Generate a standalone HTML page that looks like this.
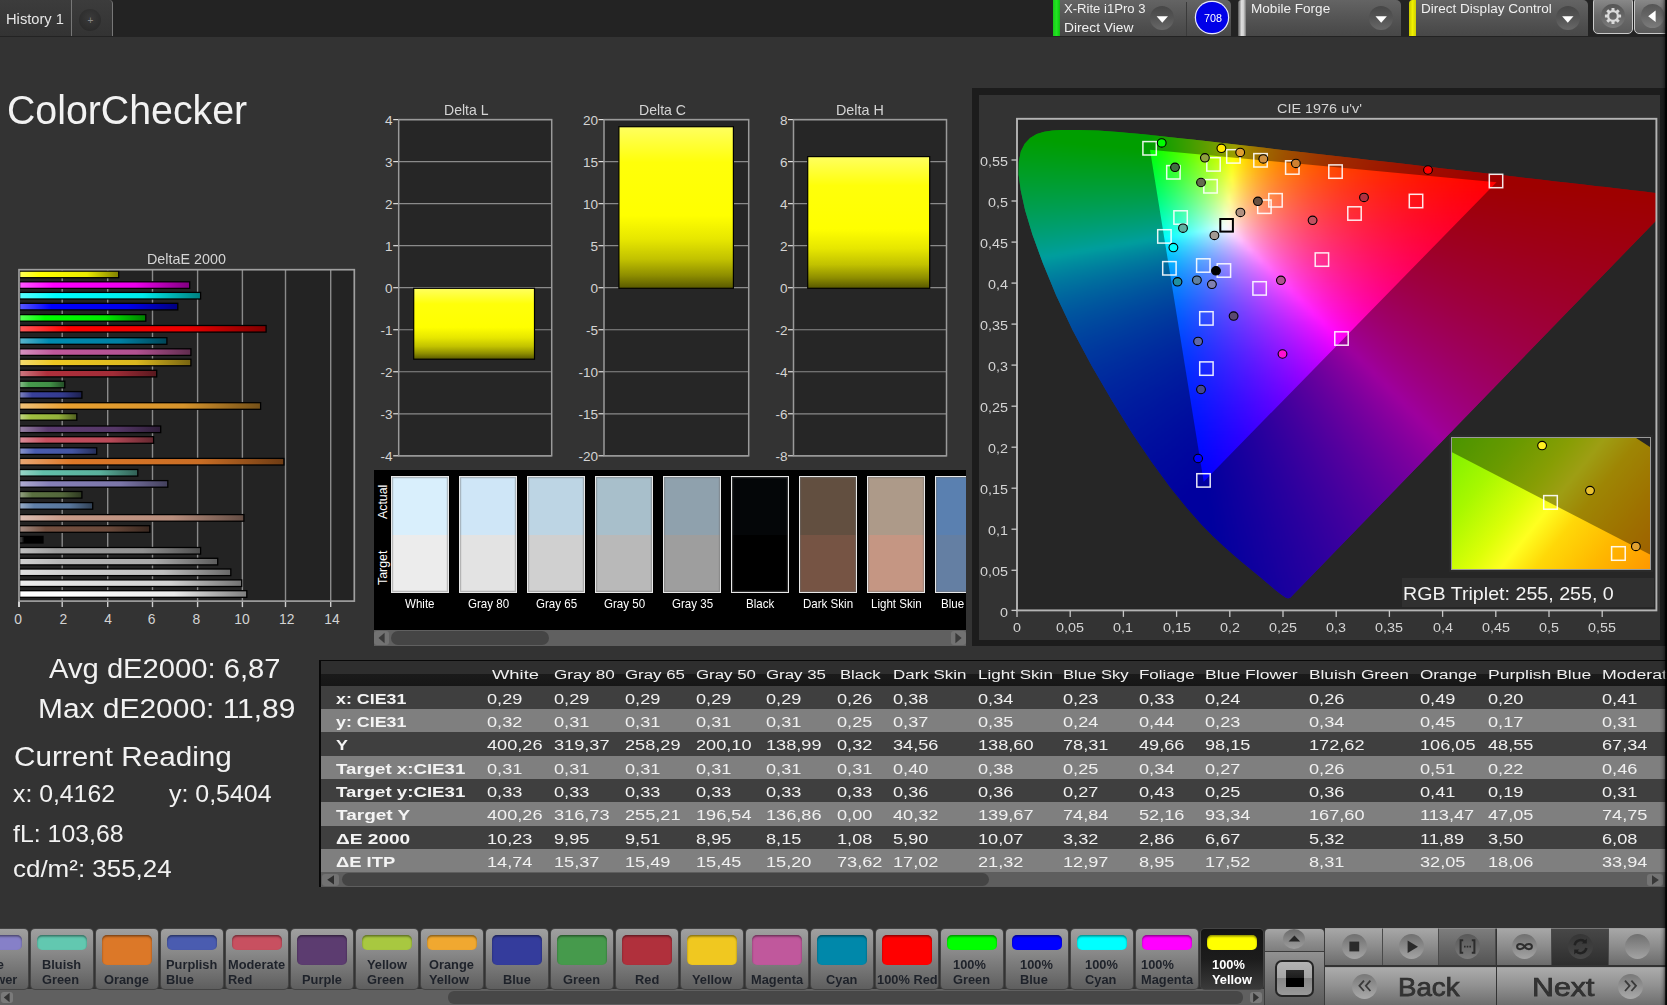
<!DOCTYPE html><html><head><meta charset="utf-8"><title>ColorChecker</title><style>
html,body{margin:0;padding:0;}
body{width:1667px;height:1005px;overflow:hidden;background:#333;position:relative;font-family:"Liberation Sans",sans-serif;}
.t{position:absolute;white-space:nowrap;line-height:1;transform-origin:0 50%;}
.a{position:absolute;}
svg{position:absolute;left:0;top:0;overflow:visible;}
#cg i{position:absolute;height:3px;display:block;}</style></head><body><div class="a" style="left:0.00px;top:0.00px;width:1667.00px;height:37.00px;background:#232323;"></div><div class="a" style="left:0.00px;top:0.00px;width:71.00px;height:36.00px;background:linear-gradient(#3c3c3c,#333);border-right:1px solid #777;border-radius:0 0 0 0;"></div><div class="a" style="left:72.00px;top:0.00px;width:40.00px;height:36.00px;background:linear-gradient(#3c3c3c,#333);border-right:1px solid #777;border-radius:0 4px 0 0;"></div><div class="a" style="left:79.00px;top:9.00px;width:22.00px;height:22.00px;background:radial-gradient(circle at 50% 40%,#3a3a3a,#262626);border-radius:50%;"></div><span class="t" style="left:87.38px;top:15px;font-size:10.00px;line-height:11px;color:#8a8a8a;">+</span><span class="t" style="left:6.00px;top:11px;font-size:14.57px;line-height:16px;color:#e6e6e6;transform:scaleX(1.0090);">History 1</span><div class="a" style="left:1053.00px;top:0.00px;width:178.00px;height:35.50px;background:linear-gradient(#646464,#565656 45%,#4c4c4c 80%,#484848);border-radius:0 5px 0 0;"></div><div class="a" style="left:1053.00px;top:0.00px;width:7.20px;height:35.50px;background:linear-gradient(90deg,#19c819,#22e622 50%,#11c011);"></div><div class="a" style="left:1186.00px;top:2.00px;width:1.20px;height:33.50px;background:#3a3a3a;"></div><span class="t" style="left:1064.00px;top:2px;font-size:12.14px;line-height:14px;color:#f0f0f0;transform:scaleX(1.0795);">X-Rite i1Pro 3</span><span class="t" style="left:1064.00px;top:21px;font-size:12.29px;line-height:14px;color:#f0f0f0;transform:scaleX(1.1224);">Direct View</span><div class="a" style="left:1150.30px;top:5.70px;width:24.00px;height:24.00px;background:linear-gradient(#474747,#545454 50%,#686868);border-radius:50%;"></div><svg width="1667" height="40"><path d="M1156.6 16.3 h11.4 l-5.7 6.4z" fill="#fff"/></svg><div class="a" style="left:1196.40px;top:1.90px;width:31.60px;height:31.60px;background:#0000e8;border-radius:50%;box-shadow:0 0 0 1.2px #e8e8ff;"></div><span class="t" style="left:1203.60px;top:12px;font-size:11.14px;line-height:12px;color:#fff;transform:scaleX(0.9673);">708</span><div class="a" style="left:1237.70px;top:0.00px;width:163.10px;height:35.50px;background:linear-gradient(#646464,#565656 45%,#4c4c4c 80%,#484848);border-radius:4px 5px 0 0;"></div><div class="a" style="left:1237.70px;top:0.00px;width:8.70px;height:35.50px;background:linear-gradient(90deg,#555,#e0e0e0 45%,#cfcfcf 70%,#777);border-radius:4px 0 0 0;"></div><span class="t" style="left:1250.60px;top:2px;font-size:12.14px;line-height:14px;color:#f0f0f0;transform:scaleX(1.1192);">Mobile Forge</span><div class="a" style="left:1369.20px;top:5.70px;width:24.00px;height:24.00px;background:linear-gradient(#474747,#545454 50%,#686868);border-radius:50%;"></div><svg width="1667" height="40"><path d="M1375.5 16.3 h11.4 l-5.7 6.4z" fill="#fff"/></svg><div class="a" style="left:1409.40px;top:0.00px;width:178.60px;height:35.50px;background:linear-gradient(#646464,#565656 45%,#4c4c4c 80%,#484848);border-radius:4px 5px 0 0;"></div><div class="a" style="left:1409.40px;top:0.00px;width:6.70px;height:35.50px;background:linear-gradient(90deg,#c8c800,#f0f000 50%,#d0d000);border-radius:4px 0 0 0;"></div><span class="t" style="left:1420.50px;top:2px;font-size:12.14px;line-height:14px;color:#f0f0f0;transform:scaleX(1.1156);">Direct Display Control</span><div class="a" style="left:1555.80px;top:5.70px;width:24.00px;height:24.00px;background:linear-gradient(#474747,#545454 50%,#686868);border-radius:50%;"></div><svg width="1667" height="40"><path d="M1562.1 16.3 h11.4 l-5.7 6.4z" fill="#fff"/></svg><div class="a" style="left:1592.70px;top:-3.00px;width:40.70px;height:36.50px;background:linear-gradient(#8c8c8c,#6a6a6a 50%,#5a5a5a);border:1.2px solid #cacaca;border-radius:5px;box-sizing:border-box;"></div><div class="a" style="left:1634.40px;top:-3.00px;width:40.60px;height:36.50px;background:linear-gradient(#8c8c8c,#6a6a6a 50%,#5a5a5a);border:1.2px solid #cacaca;border-radius:5px;box-sizing:border-box;"></div><div class="a" style="left:1601.20px;top:4.20px;width:23.60px;height:23.60px;background:linear-gradient(#555,#666 50%,#7c7c7c);border-radius:50%;"></div><div class="a" style="left:1640.50px;top:4.20px;width:23.60px;height:23.60px;background:linear-gradient(#555,#666 50%,#7c7c7c);border-radius:50%;"></div><svg width="1667" height="40"><g transform="translate(1613.0 16.0)"><rect x="-1.5" y="-8.1" width="3" height="3" rx=".5" transform="rotate(0)" fill="#dadada"/><rect x="-1.5" y="-8.1" width="3" height="3" rx=".5" transform="rotate(45)" fill="#dadada"/><rect x="-1.5" y="-8.1" width="3" height="3" rx=".5" transform="rotate(90)" fill="#dadada"/><rect x="-1.5" y="-8.1" width="3" height="3" rx=".5" transform="rotate(135)" fill="#dadada"/><rect x="-1.5" y="-8.1" width="3" height="3" rx=".5" transform="rotate(180)" fill="#dadada"/><rect x="-1.5" y="-8.1" width="3" height="3" rx=".5" transform="rotate(225)" fill="#dadada"/><rect x="-1.5" y="-8.1" width="3" height="3" rx=".5" transform="rotate(270)" fill="#dadada"/><rect x="-1.5" y="-8.1" width="3" height="3" rx=".5" transform="rotate(315)" fill="#dadada"/><circle r="4.9" fill="none" stroke="#dadada" stroke-width="2.3"/></g><path d="M1648.2 16.2 L1655.6 10.4 V22 Z" fill="#fff"/></svg>
<span class="t" style="left:6.80px;top:87px;font-size:40.43px;line-height:46px;color:#f2f2f2;transform:scaleX(0.9716);">ColorChecker</span>
<svg width="1667" height="1005"><rect x="19.0" y="269.7" width="335.3" height="331.4" fill="#232323"/><path d="M62.2 269.7 V601.1" stroke="#8a8a8a" stroke-width="1.4"/><path d="M62.2 601.1 V607.1" stroke="#d0d0d0" stroke-width="1.4"/><path d="M107.7 269.7 V601.1" stroke="#8a8a8a" stroke-width="1.4"/><path d="M107.7 601.1 V607.1" stroke="#d0d0d0" stroke-width="1.4"/><path d="M152.5 269.7 V601.1" stroke="#8a8a8a" stroke-width="1.4"/><path d="M152.5 601.1 V607.1" stroke="#d0d0d0" stroke-width="1.4"/><path d="M197.6 269.7 V601.1" stroke="#8a8a8a" stroke-width="1.4"/><path d="M197.6 601.1 V607.1" stroke="#d0d0d0" stroke-width="1.4"/><path d="M242.4 269.7 V601.1" stroke="#8a8a8a" stroke-width="1.4"/><path d="M242.4 601.1 V607.1" stroke="#d0d0d0" stroke-width="1.4"/><path d="M285.5 269.7 V601.1" stroke="#8a8a8a" stroke-width="1.4"/><path d="M285.5 601.1 V607.1" stroke="#d0d0d0" stroke-width="1.4"/><path d="M330.7 269.7 V601.1" stroke="#8a8a8a" stroke-width="1.4"/><path d="M330.7 601.1 V607.1" stroke="#d0d0d0" stroke-width="1.4"/><path d="M19.0 601.1 V607.1" stroke="#dcdcdc" stroke-width="1.9"/><defs><linearGradient id="b0"><stop offset="0" stop-color="#ffff59"/><stop offset=".2" stop-color="#ffff00"/><stop offset=".68" stop-color="#ebeb00"/><stop offset="1" stop-color="#808000"/></linearGradient><linearGradient id="b1"><stop offset="0" stop-color="#ff59ff"/><stop offset=".2" stop-color="#ff00ff"/><stop offset=".68" stop-color="#eb00eb"/><stop offset="1" stop-color="#800080"/></linearGradient><linearGradient id="b2"><stop offset="0" stop-color="#59ffff"/><stop offset=".2" stop-color="#00ffff"/><stop offset=".68" stop-color="#00ebeb"/><stop offset="1" stop-color="#008080"/></linearGradient><linearGradient id="b3"><stop offset="0" stop-color="#5959ff"/><stop offset=".2" stop-color="#0000ff"/><stop offset=".68" stop-color="#0000eb"/><stop offset="1" stop-color="#000080"/></linearGradient><linearGradient id="b4"><stop offset="0" stop-color="#59ff59"/><stop offset=".2" stop-color="#00ff00"/><stop offset=".68" stop-color="#00eb00"/><stop offset="1" stop-color="#008000"/></linearGradient><linearGradient id="b5"><stop offset="0" stop-color="#ff5959"/><stop offset=".2" stop-color="#ff0000"/><stop offset=".68" stop-color="#eb0000"/><stop offset="1" stop-color="#800000"/></linearGradient><linearGradient id="b6"><stop offset="0" stop-color="#59b4cc"/><stop offset=".2" stop-color="#008bb0"/><stop offset=".68" stop-color="#0080a2"/><stop offset="1" stop-color="#004658"/></linearGradient><linearGradient id="b7"><stop offset="0" stop-color="#d692bf"/><stop offset=".2" stop-color="#c0589c"/><stop offset=".68" stop-color="#b15190"/><stop offset="1" stop-color="#602c4e"/></linearGradient><linearGradient id="b8"><stop offset="0" stop-color="#f4db6f"/><stop offset=".2" stop-color="#eec822"/><stop offset=".68" stop-color="#dbb81f"/><stop offset="1" stop-color="#776411"/></linearGradient><linearGradient id="b9"><stop offset="0" stop-color="#cc7880"/><stop offset=".2" stop-color="#b0303c"/><stop offset=".68" stop-color="#a22c37"/><stop offset="1" stop-color="#58181e"/></linearGradient><linearGradient id="b10"><stop offset="0" stop-color="#87bd8b"/><stop offset=".2" stop-color="#469a4c"/><stop offset=".68" stop-color="#408e46"/><stop offset="1" stop-color="#234d26"/></linearGradient><linearGradient id="b11"><stop offset="0" stop-color="#7e83bd"/><stop offset=".2" stop-color="#38409a"/><stop offset=".68" stop-color="#343b8e"/><stop offset="1" stop-color="#1c204d"/></linearGradient><linearGradient id="b12"><stop offset="0" stop-color="#f0c178"/><stop offset=".2" stop-color="#e8a030"/><stop offset=".68" stop-color="#d5932c"/><stop offset="1" stop-color="#745018"/></linearGradient><linearGradient id="b13"><stop offset="0" stop-color="#c1d683"/><stop offset=".2" stop-color="#a0c040"/><stop offset=".68" stop-color="#93b13b"/><stop offset="1" stop-color="#506020"/></linearGradient><linearGradient id="b14"><stop offset="0" stop-color="#9580a2"/><stop offset=".2" stop-color="#5c3c70"/><stop offset=".68" stop-color="#553767"/><stop offset="1" stop-color="#2e1e38"/></linearGradient><linearGradient id="b15"><stop offset="0" stop-color="#db8d98"/><stop offset=".2" stop-color="#c85060"/><stop offset=".68" stop-color="#b84a58"/><stop offset="1" stop-color="#642830"/></linearGradient><linearGradient id="b16"><stop offset="0" stop-color="#8995cc"/><stop offset=".2" stop-color="#4a5cb0"/><stop offset=".68" stop-color="#4455a2"/><stop offset="1" stop-color="#252e58"/></linearGradient><linearGradient id="b17"><stop offset="0" stop-color="#e8a773"/><stop offset=".2" stop-color="#dc7828"/><stop offset=".68" stop-color="#ca6e25"/><stop offset="1" stop-color="#6e3c14"/></linearGradient><linearGradient id="b18"><stop offset="0" stop-color="#99d6c8"/><stop offset=".2" stop-color="#62c0aa"/><stop offset=".68" stop-color="#5ab19c"/><stop offset="1" stop-color="#316055"/></linearGradient><linearGradient id="b19"><stop offset="0" stop-color="#b0acd1"/><stop offset=".2" stop-color="#8680b8"/><stop offset=".68" stop-color="#7b76a9"/><stop offset="1" stop-color="#43405c"/></linearGradient><linearGradient id="b20"><stop offset="0" stop-color="#94a283"/><stop offset=".2" stop-color="#5a7040"/><stop offset=".68" stop-color="#53673b"/><stop offset="1" stop-color="#2d3820"/></linearGradient><linearGradient id="b21"><stop offset="0" stop-color="#98acc6"/><stop offset=".2" stop-color="#6080a8"/><stop offset=".68" stop-color="#58769b"/><stop offset="1" stop-color="#304054"/></linearGradient><linearGradient id="b22"><stop offset="0" stop-color="#dbbdb2"/><stop offset=".2" stop-color="#c89a88"/><stop offset=".68" stop-color="#b88e7d"/><stop offset="1" stop-color="#644d44"/></linearGradient><linearGradient id="b23"><stop offset="0" stop-color="#a58d83"/><stop offset=".2" stop-color="#745040"/><stop offset=".68" stop-color="#6b4a3b"/><stop offset="1" stop-color="#3a2820"/></linearGradient><linearGradient id="b24"><stop offset="0" stop-color="#595959"/><stop offset=".2" stop-color="#000000"/><stop offset=".68" stop-color="#000000"/><stop offset="1" stop-color="#000000"/></linearGradient><linearGradient id="b25"><stop offset="0" stop-color="#c0c0c0"/><stop offset=".2" stop-color="#9e9e9e"/><stop offset=".68" stop-color="#919191"/><stop offset="1" stop-color="#4f4f4f"/></linearGradient><linearGradient id="b26"><stop offset="0" stop-color="#d2d2d2"/><stop offset=".2" stop-color="#b9b9b9"/><stop offset=".68" stop-color="#aaaaaa"/><stop offset="1" stop-color="#5c5c5c"/></linearGradient><linearGradient id="b27"><stop offset="0" stop-color="#e0e0e0"/><stop offset=".2" stop-color="#d0d0d0"/><stop offset=".68" stop-color="#bfbfbf"/><stop offset="1" stop-color="#686868"/></linearGradient><linearGradient id="b28"><stop offset="0" stop-color="#ededed"/><stop offset=".2" stop-color="#e3e3e3"/><stop offset=".68" stop-color="#d1d1d1"/><stop offset="1" stop-color="#727272"/></linearGradient><linearGradient id="b29"><stop offset="0" stop-color="#ffffff"/><stop offset=".2" stop-color="#ffffff"/><stop offset=".68" stop-color="#ebebeb"/><stop offset="1" stop-color="#808080"/></linearGradient></defs><rect x="19.6" y="271.10" width="99.1" height="6.6" fill="url(#b0)" stroke="#000" stroke-width="1.3"/><rect x="19.6" y="281.80" width="170.1" height="6.6" fill="url(#b1)" stroke="#000" stroke-width="1.3"/><rect x="19.6" y="292.40" width="181.0" height="6.6" fill="url(#b2)" stroke="#000" stroke-width="1.3"/><rect x="19.6" y="303.30" width="158.2" height="6.6" fill="url(#b3)" stroke="#000" stroke-width="1.3"/><rect x="19.6" y="314.60" width="126.2" height="6.6" fill="url(#b4)" stroke="#000" stroke-width="1.3"/><rect x="19.6" y="325.50" width="246.5" height="6.6" fill="url(#b5)" stroke="#000" stroke-width="1.3"/><rect x="19.6" y="337.70" width="147.3" height="6.6" fill="url(#b6)" stroke="#000" stroke-width="1.3"/><rect x="19.6" y="348.80" width="171.3" height="6.6" fill="url(#b7)" stroke="#000" stroke-width="1.3"/><rect x="19.6" y="359.20" width="171.3" height="6.6" fill="url(#b8)" stroke="#000" stroke-width="1.3"/><rect x="19.6" y="370.30" width="137.1" height="6.6" fill="url(#b9)" stroke="#000" stroke-width="1.3"/><rect x="19.6" y="381.20" width="45.2" height="6.6" fill="url(#b10)" stroke="#000" stroke-width="1.3"/><rect x="19.6" y="391.60" width="62.3" height="6.6" fill="url(#b11)" stroke="#000" stroke-width="1.3"/><rect x="19.6" y="402.70" width="241.0" height="6.6" fill="url(#b12)" stroke="#000" stroke-width="1.3"/><rect x="19.6" y="413.60" width="57.2" height="6.6" fill="url(#b13)" stroke="#000" stroke-width="1.3"/><rect x="19.6" y="426.00" width="141.1" height="6.6" fill="url(#b14)" stroke="#000" stroke-width="1.3"/><rect x="19.6" y="436.70" width="134.0" height="6.6" fill="url(#b15)" stroke="#000" stroke-width="1.3"/><rect x="19.6" y="447.80" width="77.1" height="6.6" fill="url(#b16)" stroke="#000" stroke-width="1.3"/><rect x="19.6" y="458.40" width="264.3" height="6.6" fill="url(#b17)" stroke="#000" stroke-width="1.3"/><rect x="19.6" y="469.50" width="118.2" height="6.6" fill="url(#b18)" stroke="#000" stroke-width="1.3"/><rect x="19.6" y="480.60" width="148.2" height="6.6" fill="url(#b19)" stroke="#000" stroke-width="1.3"/><rect x="19.6" y="491.50" width="62.3" height="6.6" fill="url(#b20)" stroke="#000" stroke-width="1.3"/><rect x="19.6" y="502.60" width="73.1" height="6.6" fill="url(#b21)" stroke="#000" stroke-width="1.3"/><rect x="19.6" y="514.60" width="224.3" height="6.6" fill="url(#b22)" stroke="#000" stroke-width="1.3"/><rect x="19.6" y="525.70" width="130.2" height="6.6" fill="url(#b23)" stroke="#000" stroke-width="1.3"/><rect x="19.6" y="536.40" width="23.4" height="6.6" fill="url(#b24)" stroke="#000" stroke-width="1.3"/><rect x="19.6" y="547.50" width="181.0" height="6.6" fill="url(#b25)" stroke="#000" stroke-width="1.3"/><rect x="19.6" y="558.30" width="198.1" height="6.6" fill="url(#b26)" stroke="#000" stroke-width="1.3"/><rect x="19.6" y="569.00" width="211.2" height="6.6" fill="url(#b27)" stroke="#000" stroke-width="1.3"/><rect x="19.6" y="579.90" width="222.1" height="6.6" fill="url(#b28)" stroke="#000" stroke-width="1.3"/><rect x="19.6" y="590.70" width="227.2" height="6.6" fill="url(#b29)" stroke="#000" stroke-width="1.3"/><rect x="19.0" y="269.7" width="335.3" height="331.4" fill="none" stroke="#a0a0a0" stroke-width="1.7"/></svg><span class="t" style="left:147.00px;top:251px;font-size:14.57px;line-height:16px;color:#d4d4d4;transform:scaleX(0.9848);">DeltaE 2000</span><span class="t" style="left:14.35px;top:611px;font-size:13.86px;line-height:16px;color:#d4d4d4;">0</span><span class="t" style="left:59.45px;top:611px;font-size:13.86px;line-height:16px;color:#d4d4d4;">2</span><span class="t" style="left:104.15px;top:611px;font-size:13.86px;line-height:16px;color:#d4d4d4;">4</span><span class="t" style="left:147.75px;top:611px;font-size:13.86px;line-height:16px;color:#d4d4d4;">6</span><span class="t" style="left:192.55px;top:611px;font-size:13.86px;line-height:16px;color:#d4d4d4;">8</span><span class="t" style="left:234.31px;top:611px;font-size:13.86px;line-height:16px;color:#d4d4d4;">10</span><span class="t" style="left:279.11px;top:611px;font-size:13.86px;line-height:16px;color:#d4d4d4;">12</span><span class="t" style="left:324.21px;top:611px;font-size:13.86px;line-height:16px;color:#d4d4d4;">14</span>
<svg width="1667" height="1005"><rect x="398.7" y="119.6" width="153.0" height="336.2" fill="#262626"/><path d="M398.7 119.60 H551.7" stroke="#8a8a8a" stroke-width="1.2"/><path d="M393.2 119.60 H398.7" stroke="#e0e0e0" stroke-width="1.2"/><path d="M398.7 161.62 H551.7" stroke="#8a8a8a" stroke-width="1.2"/><path d="M393.2 161.62 H398.7" stroke="#e0e0e0" stroke-width="1.2"/><path d="M398.7 203.65 H551.7" stroke="#8a8a8a" stroke-width="1.2"/><path d="M393.2 203.65 H398.7" stroke="#e0e0e0" stroke-width="1.2"/><path d="M398.7 245.68 H551.7" stroke="#8a8a8a" stroke-width="1.2"/><path d="M393.2 245.68 H398.7" stroke="#e0e0e0" stroke-width="1.2"/><path d="M398.7 287.70 H551.7" stroke="#8a8a8a" stroke-width="1.2"/><path d="M393.2 287.70 H398.7" stroke="#e0e0e0" stroke-width="1.2"/><path d="M398.7 329.73 H551.7" stroke="#8a8a8a" stroke-width="1.2"/><path d="M393.2 329.73 H398.7" stroke="#e0e0e0" stroke-width="1.2"/><path d="M398.7 371.75 H551.7" stroke="#8a8a8a" stroke-width="1.2"/><path d="M393.2 371.75 H398.7" stroke="#e0e0e0" stroke-width="1.2"/><path d="M398.7 413.78 H551.7" stroke="#8a8a8a" stroke-width="1.2"/><path d="M393.2 413.78 H398.7" stroke="#e0e0e0" stroke-width="1.2"/><path d="M398.7 455.80 H551.7" stroke="#8a8a8a" stroke-width="1.2"/><path d="M393.2 455.80 H398.7" stroke="#e0e0e0" stroke-width="1.2"/><defs><linearGradient id="ygL" x1="0" y1="0" x2="0" y2="1"><stop offset="0" stop-color="#ffff60"/><stop offset=".22" stop-color="#ffff0a"/><stop offset=".55" stop-color="#ffff00"/><stop offset=".7" stop-color="#e6e600"/><stop offset=".82" stop-color="#c2c200"/><stop offset=".92" stop-color="#8e8e00"/><stop offset="1" stop-color="#585800"/></linearGradient></defs><rect x="413.7" y="288.3" width="120.8" height="70.9" fill="url(#ygL)" stroke="#000" stroke-width="1.2"/><rect x="398.7" y="119.6" width="153.0" height="336.2" fill="none" stroke="#9a9a9a" stroke-width="1.5"/></svg><span class="t" style="left:443.50px;top:102px;font-size:13.86px;line-height:16px;color:#d4d4d4;transform:scaleX(1.0130);">Delta L</span><span class="t" style="left:384.97px;top:113px;font-size:13.57px;line-height:15px;color:#d4d4d4;">4</span><span class="t" style="left:384.97px;top:155px;font-size:13.57px;line-height:15px;color:#d4d4d4;">3</span><span class="t" style="left:384.97px;top:197px;font-size:13.57px;line-height:15px;color:#d4d4d4;">2</span><span class="t" style="left:384.97px;top:239px;font-size:13.57px;line-height:15px;color:#d4d4d4;">1</span><span class="t" style="left:384.97px;top:281px;font-size:13.57px;line-height:15px;color:#d4d4d4;">0</span><span class="t" style="left:380.42px;top:323px;font-size:13.57px;line-height:15px;color:#d4d4d4;">-1</span><span class="t" style="left:380.42px;top:365px;font-size:13.57px;line-height:15px;color:#d4d4d4;">-2</span><span class="t" style="left:380.42px;top:407px;font-size:13.57px;line-height:15px;color:#d4d4d4;">-3</span><span class="t" style="left:380.42px;top:449px;font-size:13.57px;line-height:15px;color:#d4d4d4;">-4</span>
<svg width="1667" height="1005"><rect x="604.0" y="119.6" width="144.7" height="336.2" fill="#262626"/><path d="M604.0 119.60 H748.7" stroke="#8a8a8a" stroke-width="1.2"/><path d="M598.5 119.60 H604.0" stroke="#e0e0e0" stroke-width="1.2"/><path d="M604.0 161.62 H748.7" stroke="#8a8a8a" stroke-width="1.2"/><path d="M598.5 161.62 H604.0" stroke="#e0e0e0" stroke-width="1.2"/><path d="M604.0 203.65 H748.7" stroke="#8a8a8a" stroke-width="1.2"/><path d="M598.5 203.65 H604.0" stroke="#e0e0e0" stroke-width="1.2"/><path d="M604.0 245.68 H748.7" stroke="#8a8a8a" stroke-width="1.2"/><path d="M598.5 245.68 H604.0" stroke="#e0e0e0" stroke-width="1.2"/><path d="M604.0 287.70 H748.7" stroke="#8a8a8a" stroke-width="1.2"/><path d="M598.5 287.70 H604.0" stroke="#e0e0e0" stroke-width="1.2"/><path d="M604.0 329.73 H748.7" stroke="#8a8a8a" stroke-width="1.2"/><path d="M598.5 329.73 H604.0" stroke="#e0e0e0" stroke-width="1.2"/><path d="M604.0 371.75 H748.7" stroke="#8a8a8a" stroke-width="1.2"/><path d="M598.5 371.75 H604.0" stroke="#e0e0e0" stroke-width="1.2"/><path d="M604.0 413.78 H748.7" stroke="#8a8a8a" stroke-width="1.2"/><path d="M598.5 413.78 H604.0" stroke="#e0e0e0" stroke-width="1.2"/><path d="M604.0 455.80 H748.7" stroke="#8a8a8a" stroke-width="1.2"/><path d="M598.5 455.80 H604.0" stroke="#e0e0e0" stroke-width="1.2"/><defs><linearGradient id="ygC" x1="0" y1="0" x2="0" y2="1"><stop offset="0" stop-color="#ffff60"/><stop offset=".22" stop-color="#ffff0a"/><stop offset=".55" stop-color="#ffff00"/><stop offset=".7" stop-color="#e6e600"/><stop offset=".82" stop-color="#c2c200"/><stop offset=".92" stop-color="#8e8e00"/><stop offset="1" stop-color="#585800"/></linearGradient></defs><rect x="618.9" y="126.7" width="114.5" height="161.6" fill="url(#ygC)" stroke="#000" stroke-width="1.2"/><rect x="604.0" y="119.6" width="144.7" height="336.2" fill="none" stroke="#9a9a9a" stroke-width="1.5"/></svg><span class="t" style="left:639.40px;top:102px;font-size:13.86px;line-height:16px;color:#d4d4d4;transform:scaleX(1.0170);">Delta C</span><span class="t" style="left:582.94px;top:113px;font-size:13.57px;line-height:15px;color:#d4d4d4;">20</span><span class="t" style="left:582.94px;top:155px;font-size:13.57px;line-height:15px;color:#d4d4d4;">15</span><span class="t" style="left:582.94px;top:197px;font-size:13.57px;line-height:15px;color:#d4d4d4;">10</span><span class="t" style="left:590.47px;top:239px;font-size:13.57px;line-height:15px;color:#d4d4d4;">5</span><span class="t" style="left:590.47px;top:281px;font-size:13.57px;line-height:15px;color:#d4d4d4;">0</span><span class="t" style="left:585.92px;top:323px;font-size:13.57px;line-height:15px;color:#d4d4d4;">-5</span><span class="t" style="left:578.39px;top:365px;font-size:13.57px;line-height:15px;color:#d4d4d4;">-10</span><span class="t" style="left:578.39px;top:407px;font-size:13.57px;line-height:15px;color:#d4d4d4;">-15</span><span class="t" style="left:578.39px;top:449px;font-size:13.57px;line-height:15px;color:#d4d4d4;">-20</span>
<svg width="1667" height="1005"><rect x="793.5" y="119.6" width="153.0" height="336.2" fill="#262626"/><path d="M793.5 119.60 H946.5" stroke="#8a8a8a" stroke-width="1.2"/><path d="M788.0 119.60 H793.5" stroke="#e0e0e0" stroke-width="1.2"/><path d="M793.5 161.62 H946.5" stroke="#8a8a8a" stroke-width="1.2"/><path d="M788.0 161.62 H793.5" stroke="#e0e0e0" stroke-width="1.2"/><path d="M793.5 203.65 H946.5" stroke="#8a8a8a" stroke-width="1.2"/><path d="M788.0 203.65 H793.5" stroke="#e0e0e0" stroke-width="1.2"/><path d="M793.5 245.68 H946.5" stroke="#8a8a8a" stroke-width="1.2"/><path d="M788.0 245.68 H793.5" stroke="#e0e0e0" stroke-width="1.2"/><path d="M793.5 287.70 H946.5" stroke="#8a8a8a" stroke-width="1.2"/><path d="M788.0 287.70 H793.5" stroke="#e0e0e0" stroke-width="1.2"/><path d="M793.5 329.73 H946.5" stroke="#8a8a8a" stroke-width="1.2"/><path d="M788.0 329.73 H793.5" stroke="#e0e0e0" stroke-width="1.2"/><path d="M793.5 371.75 H946.5" stroke="#8a8a8a" stroke-width="1.2"/><path d="M788.0 371.75 H793.5" stroke="#e0e0e0" stroke-width="1.2"/><path d="M793.5 413.78 H946.5" stroke="#8a8a8a" stroke-width="1.2"/><path d="M788.0 413.78 H793.5" stroke="#e0e0e0" stroke-width="1.2"/><path d="M793.5 455.80 H946.5" stroke="#8a8a8a" stroke-width="1.2"/><path d="M788.0 455.80 H793.5" stroke="#e0e0e0" stroke-width="1.2"/><defs><linearGradient id="ygH" x1="0" y1="0" x2="0" y2="1"><stop offset="0" stop-color="#ffff60"/><stop offset=".22" stop-color="#ffff0a"/><stop offset=".55" stop-color="#ffff00"/><stop offset=".7" stop-color="#e6e600"/><stop offset=".82" stop-color="#c2c200"/><stop offset=".92" stop-color="#8e8e00"/><stop offset="1" stop-color="#585800"/></linearGradient></defs><rect x="807.7" y="156.6" width="122.0" height="131.7" fill="url(#ygH)" stroke="#000" stroke-width="1.2"/><rect x="793.5" y="119.6" width="153.0" height="336.2" fill="none" stroke="#9a9a9a" stroke-width="1.5"/></svg><span class="t" style="left:836.40px;top:102px;font-size:13.86px;line-height:16px;color:#d4d4d4;transform:scaleX(1.0343);">Delta H</span><span class="t" style="left:779.97px;top:113px;font-size:13.57px;line-height:15px;color:#d4d4d4;">8</span><span class="t" style="left:779.97px;top:155px;font-size:13.57px;line-height:15px;color:#d4d4d4;">6</span><span class="t" style="left:779.97px;top:197px;font-size:13.57px;line-height:15px;color:#d4d4d4;">4</span><span class="t" style="left:779.97px;top:239px;font-size:13.57px;line-height:15px;color:#d4d4d4;">2</span><span class="t" style="left:779.97px;top:281px;font-size:13.57px;line-height:15px;color:#d4d4d4;">0</span><span class="t" style="left:775.42px;top:323px;font-size:13.57px;line-height:15px;color:#d4d4d4;">-2</span><span class="t" style="left:775.42px;top:365px;font-size:13.57px;line-height:15px;color:#d4d4d4;">-4</span><span class="t" style="left:775.42px;top:407px;font-size:13.57px;line-height:15px;color:#d4d4d4;">-6</span><span class="t" style="left:775.42px;top:449px;font-size:13.57px;line-height:15px;color:#d4d4d4;">-8</span>
<div class="a" style="left:373.80px;top:469.70px;width:592.20px;height:176.30px;background:#000;overflow:hidden;"><div class="a" style="left:17.1px;top:6.5px;width:58.4px;height:116.4px;background:linear-gradient(#d9effc 0,#d9effc 50.3%,#ececec 50.3%);border:1.2px solid #e8e8e8;box-sizing:border-box;box-shadow:inset 0 0 0 1.2px rgba(110,110,110,.4);"></div><span class="t" style="left:31.53px;top:127px;font-size:12.43px;line-height:14px;color:#fff;transform:scaleX(0.9300);">White</span><div class="a" style="left:85.1px;top:6.5px;width:58.4px;height:116.4px;background:linear-gradient(#cfe6f7 0,#cfe6f7 50.3%,#e3e3e3 50.3%);border:1.2px solid #e8e8e8;box-sizing:border-box;box-shadow:inset 0 0 0 1.2px rgba(110,110,110,.4);"></div><span class="t" style="left:93.75px;top:127px;font-size:12.43px;line-height:14px;color:#fff;transform:scaleX(0.9300);">Gray 80</span><div class="a" style="left:153.1px;top:6.5px;width:58.4px;height:116.4px;background:linear-gradient(#bdd5e4 0,#bdd5e4 50.3%,#d0d0d0 50.3%);border:1.2px solid #e8e8e8;box-sizing:border-box;box-shadow:inset 0 0 0 1.2px rgba(110,110,110,.4);"></div><span class="t" style="left:161.75px;top:127px;font-size:12.43px;line-height:14px;color:#fff;transform:scaleX(0.9300);">Gray 65</span><div class="a" style="left:221.1px;top:6.5px;width:58.4px;height:116.4px;background:linear-gradient(#a8bfcb 0,#a8bfcb 50.3%,#b9b9b9 50.3%);border:1.2px solid #e8e8e8;box-sizing:border-box;box-shadow:inset 0 0 0 1.2px rgba(110,110,110,.4);"></div><span class="t" style="left:229.75px;top:127px;font-size:12.43px;line-height:14px;color:#fff;transform:scaleX(0.9300);">Gray 50</span><div class="a" style="left:289.1px;top:6.5px;width:58.4px;height:116.4px;background:linear-gradient(#8fa1ad 0,#8fa1ad 50.3%,#9e9e9e 50.3%);border:1.2px solid #e8e8e8;box-sizing:border-box;box-shadow:inset 0 0 0 1.2px rgba(110,110,110,.4);"></div><span class="t" style="left:297.75px;top:127px;font-size:12.43px;line-height:14px;color:#fff;transform:scaleX(0.9300);">Gray 35</span><div class="a" style="left:357.1px;top:6.5px;width:58.4px;height:116.4px;background:linear-gradient(#040608 0,#040608 50.3%,#000000 50.3%);border:1.2px solid #e8e8e8;box-sizing:border-box;box-shadow:inset 0 0 0 1.2px rgba(110,110,110,.4);"></div><span class="t" style="left:372.14px;top:127px;font-size:12.43px;line-height:14px;color:#fff;transform:scaleX(0.9300);">Black</span><div class="a" style="left:425.1px;top:6.5px;width:58.4px;height:116.4px;background:linear-gradient(#624f40 0,#624f40 50.3%,#765444 50.3%);border:1.2px solid #e8e8e8;box-sizing:border-box;box-shadow:inset 0 0 0 1.2px rgba(110,110,110,.4);"></div><span class="t" style="left:429.25px;top:127px;font-size:12.43px;line-height:14px;color:#fff;transform:scaleX(0.9300);">Dark Skin</span><div class="a" style="left:493.1px;top:6.5px;width:58.4px;height:116.4px;background:linear-gradient(#ad9a89 0,#ad9a89 50.3%,#c59683 50.3%);border:1.2px solid #e8e8e8;box-sizing:border-box;box-shadow:inset 0 0 0 1.2px rgba(110,110,110,.4);"></div><span class="t" style="left:496.93px;top:127px;font-size:12.43px;line-height:14px;color:#fff;transform:scaleX(0.9300);">Light Skin</span><div class="a" style="left:561.1px;top:6.5px;width:58.4px;height:116.4px;background:linear-gradient(#5a80b0 0,#5a80b0 50.3%,#647fa3 50.3%);border:1.2px solid #e8e8e8;box-sizing:border-box;box-shadow:inset 0 0 0 1.2px rgba(110,110,110,.4);"></div><span class="t" style="left:567.50px;top:127px;font-size:12.43px;line-height:14px;color:#fff;transform:scaleX(0.9300);">Blue Sky</span><span class="t" style="left:1.8px;top:49.7px;font-size:13.3px;color:#fff;transform-origin:0 0;transform:rotate(-90deg) scaleX(.93);">Actual</span><span class="t" style="left:1.8px;top:114.9px;font-size:13.3px;color:#fff;transform-origin:0 0;transform:rotate(-90deg) scaleX(.93);">Target</span></div><div class="a" style="left:373.80px;top:630.00px;width:592.20px;height:16.00px;background:#606060;"></div><div class="a" style="left:374.40px;top:630.60px;width:14.60px;height:14.80px;background:#727272;border-radius:3px;"></div><div class="a" style="left:951.20px;top:630.60px;width:14.40px;height:14.80px;background:#727272;border-radius:3px;"></div><div class="a" style="left:391.20px;top:631.00px;width:158.20px;height:14.20px;background:#454545;border-radius:7px;"></div><svg width="1667" height="1005"><path d="M378.5 638 L384.6 632.8 V643.2Z" fill="#3a3a3a"/><path d="M961.6 638 L955.4 632.8 V643.2Z" fill="#3a3a3a"/></svg>
<span class="t" style="left:49.10px;top:654px;font-size:27.00px;line-height:30px;color:#f2f2f2;transform:scaleX(1.0810);">Avg dE2000: 6,87</span>
<span class="t" style="left:37.50px;top:694px;font-size:27.00px;line-height:30px;color:#f2f2f2;transform:scaleX(1.1085);">Max dE2000: 11,89</span>
<span class="t" style="left:13.50px;top:742px;font-size:26.71px;line-height:30px;color:#f2f2f2;transform:scaleX(1.1118);">Current Reading</span>
<span class="t" style="left:13.00px;top:780px;font-size:24.00px;line-height:27px;color:#f2f2f2;transform:scaleX(1.0328);">x: 0,4162</span>
<span class="t" style="left:169.40px;top:780px;font-size:24.00px;line-height:27px;color:#f2f2f2;transform:scaleX(1.0389);">y: 0,5404</span>
<span class="t" style="left:13.30px;top:820px;font-size:24.00px;line-height:27px;color:#f2f2f2;transform:scaleX(1.0365);">fL: 103,68</span>
<span class="t" style="left:13.30px;top:855px;font-size:24.00px;line-height:27px;color:#f2f2f2;transform:scaleX(1.0814);">cd/m²: 355,24</span>
<div class="a" style="left:319.20px;top:660.10px;width:1347.80px;height:227.00px;background:#080808;"></div><div class="a" style="left:321.00px;top:661.10px;width:1346.00px;height:12.90px;background:#2e2e2e;"></div><div class="a" style="left:321.00px;top:674.00px;width:1346.00px;height:11.80px;background:linear-gradient(#1a1a1a,#161616);"></div><span class="t" style="left:492.00px;top:667px;font-size:12.71px;line-height:15px;color:#f0f0f0;transform:scaleX(1.4468);">White</span><span class="t" style="left:553.50px;top:667px;font-size:12.71px;line-height:15px;color:#f0f0f0;transform:scaleX(1.3452);">Gray 80</span><span class="t" style="left:624.50px;top:667px;font-size:12.71px;line-height:15px;color:#f0f0f0;transform:scaleX(1.3275);">Gray 65</span><span class="t" style="left:695.50px;top:667px;font-size:12.71px;line-height:15px;color:#f0f0f0;transform:scaleX(1.3252);">Gray 50</span><span class="t" style="left:766.00px;top:667px;font-size:12.71px;line-height:15px;color:#f0f0f0;transform:scaleX(1.3275);">Gray 35</span><span class="t" style="left:839.50px;top:667px;font-size:12.71px;line-height:15px;color:#f0f0f0;transform:scaleX(1.3098);">Black</span><span class="t" style="left:893.30px;top:667px;font-size:12.71px;line-height:15px;color:#f0f0f0;transform:scaleX(1.3317);">Dark Skin</span><span class="t" style="left:977.50px;top:667px;font-size:12.71px;line-height:15px;color:#f0f0f0;transform:scaleX(1.3419);">Light Skin</span><span class="t" style="left:1063.20px;top:667px;font-size:12.71px;line-height:15px;color:#f0f0f0;transform:scaleX(1.3099);">Blue Sky</span><span class="t" style="left:1139.30px;top:667px;font-size:12.71px;line-height:15px;color:#f0f0f0;transform:scaleX(1.3356);">Foliage</span><span class="t" style="left:1205.40px;top:667px;font-size:12.71px;line-height:15px;color:#f0f0f0;transform:scaleX(1.3824);">Blue Flower</span><span class="t" style="left:1309.00px;top:667px;font-size:12.71px;line-height:15px;color:#f0f0f0;transform:scaleX(1.3608);">Bluish Green</span><span class="t" style="left:1420.30px;top:667px;font-size:12.71px;line-height:15px;color:#f0f0f0;transform:scaleX(1.3419);">Orange</span><span class="t" style="left:1487.60px;top:667px;font-size:12.71px;line-height:15px;color:#f0f0f0;transform:scaleX(1.3794);">Purplish Blue</span><span class="t" style="left:1601.80px;top:667px;font-size:12.71px;line-height:15px;color:#f0f0f0;transform:scaleX(1.3930);">Moderate Red</span><div class="a" style="left:321.00px;top:685.80px;width:1346.00px;height:23.31px;background:#3f3f3f;"></div><span class="t" style="left:335.70px;top:690px;font-size:15.43px;line-height:17px;color:#f4f4f4;transform:scaleX(1.1566);font-weight:bold;">x: CIE31</span><span class="t" style="left:486.60px;top:690px;font-size:15.43px;line-height:17px;color:#f0f0f0;transform:scaleX(1.1763);">0,29</span><span class="t" style="left:553.50px;top:690px;font-size:15.43px;line-height:17px;color:#f0f0f0;transform:scaleX(1.1763);">0,29</span><span class="t" style="left:624.50px;top:690px;font-size:15.43px;line-height:17px;color:#f0f0f0;transform:scaleX(1.1763);">0,29</span><span class="t" style="left:695.50px;top:690px;font-size:15.43px;line-height:17px;color:#f0f0f0;transform:scaleX(1.1763);">0,29</span><span class="t" style="left:766.00px;top:690px;font-size:15.43px;line-height:17px;color:#f0f0f0;transform:scaleX(1.1763);">0,29</span><span class="t" style="left:837.00px;top:690px;font-size:15.43px;line-height:17px;color:#f0f0f0;transform:scaleX(1.1763);">0,26</span><span class="t" style="left:893.00px;top:690px;font-size:15.43px;line-height:17px;color:#f0f0f0;transform:scaleX(1.1763);">0,38</span><span class="t" style="left:977.50px;top:690px;font-size:15.43px;line-height:17px;color:#f0f0f0;transform:scaleX(1.1763);">0,34</span><span class="t" style="left:1063.20px;top:690px;font-size:15.43px;line-height:17px;color:#f0f0f0;transform:scaleX(1.1763);">0,23</span><span class="t" style="left:1139.30px;top:690px;font-size:15.43px;line-height:17px;color:#f0f0f0;transform:scaleX(1.1763);">0,33</span><span class="t" style="left:1205.40px;top:690px;font-size:15.43px;line-height:17px;color:#f0f0f0;transform:scaleX(1.1763);">0,24</span><span class="t" style="left:1309.00px;top:690px;font-size:15.43px;line-height:17px;color:#f0f0f0;transform:scaleX(1.1763);">0,26</span><span class="t" style="left:1420.30px;top:690px;font-size:15.43px;line-height:17px;color:#f0f0f0;transform:scaleX(1.1763);">0,49</span><span class="t" style="left:1487.60px;top:690px;font-size:15.43px;line-height:17px;color:#f0f0f0;transform:scaleX(1.1763);">0,20</span><span class="t" style="left:1601.80px;top:690px;font-size:15.43px;line-height:17px;color:#f0f0f0;transform:scaleX(1.1763);">0,41</span><div class="a" style="left:321.00px;top:709.11px;width:1346.00px;height:23.31px;background:#7f7f7f;"></div><span class="t" style="left:335.70px;top:713px;font-size:15.43px;line-height:17px;color:#f4f4f4;transform:scaleX(1.1566);font-weight:bold;">y: CIE31</span><span class="t" style="left:486.60px;top:713px;font-size:15.43px;line-height:17px;color:#f0f0f0;transform:scaleX(1.1763);">0,32</span><span class="t" style="left:553.50px;top:713px;font-size:15.43px;line-height:17px;color:#f0f0f0;transform:scaleX(1.1763);">0,31</span><span class="t" style="left:624.50px;top:713px;font-size:15.43px;line-height:17px;color:#f0f0f0;transform:scaleX(1.1763);">0,31</span><span class="t" style="left:695.50px;top:713px;font-size:15.43px;line-height:17px;color:#f0f0f0;transform:scaleX(1.1763);">0,31</span><span class="t" style="left:766.00px;top:713px;font-size:15.43px;line-height:17px;color:#f0f0f0;transform:scaleX(1.1763);">0,31</span><span class="t" style="left:837.00px;top:713px;font-size:15.43px;line-height:17px;color:#f0f0f0;transform:scaleX(1.1763);">0,25</span><span class="t" style="left:893.00px;top:713px;font-size:15.43px;line-height:17px;color:#f0f0f0;transform:scaleX(1.1763);">0,37</span><span class="t" style="left:977.50px;top:713px;font-size:15.43px;line-height:17px;color:#f0f0f0;transform:scaleX(1.1763);">0,35</span><span class="t" style="left:1063.20px;top:713px;font-size:15.43px;line-height:17px;color:#f0f0f0;transform:scaleX(1.1763);">0,24</span><span class="t" style="left:1139.30px;top:713px;font-size:15.43px;line-height:17px;color:#f0f0f0;transform:scaleX(1.1763);">0,44</span><span class="t" style="left:1205.40px;top:713px;font-size:15.43px;line-height:17px;color:#f0f0f0;transform:scaleX(1.1763);">0,23</span><span class="t" style="left:1309.00px;top:713px;font-size:15.43px;line-height:17px;color:#f0f0f0;transform:scaleX(1.1763);">0,34</span><span class="t" style="left:1420.30px;top:713px;font-size:15.43px;line-height:17px;color:#f0f0f0;transform:scaleX(1.1763);">0,45</span><span class="t" style="left:1487.60px;top:713px;font-size:15.43px;line-height:17px;color:#f0f0f0;transform:scaleX(1.1763);">0,17</span><span class="t" style="left:1601.80px;top:713px;font-size:15.43px;line-height:17px;color:#f0f0f0;transform:scaleX(1.1763);">0,31</span><div class="a" style="left:321.00px;top:732.42px;width:1346.00px;height:23.31px;background:#3f3f3f;"></div><span class="t" style="left:335.70px;top:736px;font-size:15.43px;line-height:17px;color:#f4f4f4;transform:scaleX(1.1598);font-weight:bold;">Y</span><span class="t" style="left:486.60px;top:736px;font-size:15.43px;line-height:17px;color:#f0f0f0;transform:scaleX(1.1763);">400,26</span><span class="t" style="left:553.50px;top:736px;font-size:15.43px;line-height:17px;color:#f0f0f0;transform:scaleX(1.1763);">319,37</span><span class="t" style="left:624.50px;top:736px;font-size:15.43px;line-height:17px;color:#f0f0f0;transform:scaleX(1.1763);">258,29</span><span class="t" style="left:695.50px;top:736px;font-size:15.43px;line-height:17px;color:#f0f0f0;transform:scaleX(1.1763);">200,10</span><span class="t" style="left:766.00px;top:736px;font-size:15.43px;line-height:17px;color:#f0f0f0;transform:scaleX(1.1763);">138,99</span><span class="t" style="left:837.00px;top:736px;font-size:15.43px;line-height:17px;color:#f0f0f0;transform:scaleX(1.1763);">0,32</span><span class="t" style="left:893.00px;top:736px;font-size:15.43px;line-height:17px;color:#f0f0f0;transform:scaleX(1.1763);">34,56</span><span class="t" style="left:977.50px;top:736px;font-size:15.43px;line-height:17px;color:#f0f0f0;transform:scaleX(1.1763);">138,60</span><span class="t" style="left:1063.20px;top:736px;font-size:15.43px;line-height:17px;color:#f0f0f0;transform:scaleX(1.1763);">78,31</span><span class="t" style="left:1139.30px;top:736px;font-size:15.43px;line-height:17px;color:#f0f0f0;transform:scaleX(1.1763);">49,66</span><span class="t" style="left:1205.40px;top:736px;font-size:15.43px;line-height:17px;color:#f0f0f0;transform:scaleX(1.1763);">98,15</span><span class="t" style="left:1309.00px;top:736px;font-size:15.43px;line-height:17px;color:#f0f0f0;transform:scaleX(1.1763);">172,62</span><span class="t" style="left:1420.30px;top:736px;font-size:15.43px;line-height:17px;color:#f0f0f0;transform:scaleX(1.1763);">106,05</span><span class="t" style="left:1487.60px;top:736px;font-size:15.43px;line-height:17px;color:#f0f0f0;transform:scaleX(1.1763);">48,55</span><span class="t" style="left:1601.80px;top:736px;font-size:15.43px;line-height:17px;color:#f0f0f0;transform:scaleX(1.1763);">67,34</span><div class="a" style="left:321.00px;top:755.74px;width:1346.00px;height:23.31px;background:#7f7f7f;"></div><span class="t" style="left:335.70px;top:760px;font-size:15.43px;line-height:17px;color:#f4f4f4;transform:scaleX(1.2103);font-weight:bold;">Target x:CIE31</span><span class="t" style="left:486.60px;top:760px;font-size:15.43px;line-height:17px;color:#f0f0f0;transform:scaleX(1.1763);">0,31</span><span class="t" style="left:553.50px;top:760px;font-size:15.43px;line-height:17px;color:#f0f0f0;transform:scaleX(1.1763);">0,31</span><span class="t" style="left:624.50px;top:760px;font-size:15.43px;line-height:17px;color:#f0f0f0;transform:scaleX(1.1763);">0,31</span><span class="t" style="left:695.50px;top:760px;font-size:15.43px;line-height:17px;color:#f0f0f0;transform:scaleX(1.1763);">0,31</span><span class="t" style="left:766.00px;top:760px;font-size:15.43px;line-height:17px;color:#f0f0f0;transform:scaleX(1.1763);">0,31</span><span class="t" style="left:837.00px;top:760px;font-size:15.43px;line-height:17px;color:#f0f0f0;transform:scaleX(1.1763);">0,31</span><span class="t" style="left:893.00px;top:760px;font-size:15.43px;line-height:17px;color:#f0f0f0;transform:scaleX(1.1763);">0,40</span><span class="t" style="left:977.50px;top:760px;font-size:15.43px;line-height:17px;color:#f0f0f0;transform:scaleX(1.1763);">0,38</span><span class="t" style="left:1063.20px;top:760px;font-size:15.43px;line-height:17px;color:#f0f0f0;transform:scaleX(1.1763);">0,25</span><span class="t" style="left:1139.30px;top:760px;font-size:15.43px;line-height:17px;color:#f0f0f0;transform:scaleX(1.1763);">0,34</span><span class="t" style="left:1205.40px;top:760px;font-size:15.43px;line-height:17px;color:#f0f0f0;transform:scaleX(1.1763);">0,27</span><span class="t" style="left:1309.00px;top:760px;font-size:15.43px;line-height:17px;color:#f0f0f0;transform:scaleX(1.1763);">0,26</span><span class="t" style="left:1420.30px;top:760px;font-size:15.43px;line-height:17px;color:#f0f0f0;transform:scaleX(1.1763);">0,51</span><span class="t" style="left:1487.60px;top:760px;font-size:15.43px;line-height:17px;color:#f0f0f0;transform:scaleX(1.1763);">0,22</span><span class="t" style="left:1601.80px;top:760px;font-size:15.43px;line-height:17px;color:#f0f0f0;transform:scaleX(1.1763);">0,46</span><div class="a" style="left:321.00px;top:779.05px;width:1346.00px;height:23.31px;background:#3f3f3f;"></div><span class="t" style="left:335.70px;top:783px;font-size:15.43px;line-height:17px;color:#f4f4f4;transform:scaleX(1.2103);font-weight:bold;">Target y:CIE31</span><span class="t" style="left:486.60px;top:783px;font-size:15.43px;line-height:17px;color:#f0f0f0;transform:scaleX(1.1763);">0,33</span><span class="t" style="left:553.50px;top:783px;font-size:15.43px;line-height:17px;color:#f0f0f0;transform:scaleX(1.1763);">0,33</span><span class="t" style="left:624.50px;top:783px;font-size:15.43px;line-height:17px;color:#f0f0f0;transform:scaleX(1.1763);">0,33</span><span class="t" style="left:695.50px;top:783px;font-size:15.43px;line-height:17px;color:#f0f0f0;transform:scaleX(1.1763);">0,33</span><span class="t" style="left:766.00px;top:783px;font-size:15.43px;line-height:17px;color:#f0f0f0;transform:scaleX(1.1763);">0,33</span><span class="t" style="left:837.00px;top:783px;font-size:15.43px;line-height:17px;color:#f0f0f0;transform:scaleX(1.1763);">0,33</span><span class="t" style="left:893.00px;top:783px;font-size:15.43px;line-height:17px;color:#f0f0f0;transform:scaleX(1.1763);">0,36</span><span class="t" style="left:977.50px;top:783px;font-size:15.43px;line-height:17px;color:#f0f0f0;transform:scaleX(1.1763);">0,36</span><span class="t" style="left:1063.20px;top:783px;font-size:15.43px;line-height:17px;color:#f0f0f0;transform:scaleX(1.1763);">0,27</span><span class="t" style="left:1139.30px;top:783px;font-size:15.43px;line-height:17px;color:#f0f0f0;transform:scaleX(1.1763);">0,43</span><span class="t" style="left:1205.40px;top:783px;font-size:15.43px;line-height:17px;color:#f0f0f0;transform:scaleX(1.1763);">0,25</span><span class="t" style="left:1309.00px;top:783px;font-size:15.43px;line-height:17px;color:#f0f0f0;transform:scaleX(1.1763);">0,36</span><span class="t" style="left:1420.30px;top:783px;font-size:15.43px;line-height:17px;color:#f0f0f0;transform:scaleX(1.1763);">0,41</span><span class="t" style="left:1487.60px;top:783px;font-size:15.43px;line-height:17px;color:#f0f0f0;transform:scaleX(1.1763);">0,19</span><span class="t" style="left:1601.80px;top:783px;font-size:15.43px;line-height:17px;color:#f0f0f0;transform:scaleX(1.1763);">0,31</span><div class="a" style="left:321.00px;top:802.36px;width:1346.00px;height:23.31px;background:#7f7f7f;"></div><span class="t" style="left:335.70px;top:806px;font-size:15.43px;line-height:17px;color:#f4f4f4;transform:scaleX(1.2316);font-weight:bold;">Target Y</span><span class="t" style="left:486.60px;top:806px;font-size:15.43px;line-height:17px;color:#f0f0f0;transform:scaleX(1.1763);">400,26</span><span class="t" style="left:553.50px;top:806px;font-size:15.43px;line-height:17px;color:#f0f0f0;transform:scaleX(1.1763);">316,73</span><span class="t" style="left:624.50px;top:806px;font-size:15.43px;line-height:17px;color:#f0f0f0;transform:scaleX(1.1763);">255,21</span><span class="t" style="left:695.50px;top:806px;font-size:15.43px;line-height:17px;color:#f0f0f0;transform:scaleX(1.1763);">196,54</span><span class="t" style="left:766.00px;top:806px;font-size:15.43px;line-height:17px;color:#f0f0f0;transform:scaleX(1.1763);">136,86</span><span class="t" style="left:837.00px;top:806px;font-size:15.43px;line-height:17px;color:#f0f0f0;transform:scaleX(1.1763);">0,00</span><span class="t" style="left:893.00px;top:806px;font-size:15.43px;line-height:17px;color:#f0f0f0;transform:scaleX(1.1763);">40,32</span><span class="t" style="left:977.50px;top:806px;font-size:15.43px;line-height:17px;color:#f0f0f0;transform:scaleX(1.1763);">139,67</span><span class="t" style="left:1063.20px;top:806px;font-size:15.43px;line-height:17px;color:#f0f0f0;transform:scaleX(1.1763);">74,84</span><span class="t" style="left:1139.30px;top:806px;font-size:15.43px;line-height:17px;color:#f0f0f0;transform:scaleX(1.1763);">52,16</span><span class="t" style="left:1205.40px;top:806px;font-size:15.43px;line-height:17px;color:#f0f0f0;transform:scaleX(1.1763);">93,34</span><span class="t" style="left:1309.00px;top:806px;font-size:15.43px;line-height:17px;color:#f0f0f0;transform:scaleX(1.1763);">167,60</span><span class="t" style="left:1420.30px;top:806px;font-size:15.43px;line-height:17px;color:#f0f0f0;transform:scaleX(1.1763);">113,47</span><span class="t" style="left:1487.60px;top:806px;font-size:15.43px;line-height:17px;color:#f0f0f0;transform:scaleX(1.1763);">47,05</span><span class="t" style="left:1601.80px;top:806px;font-size:15.43px;line-height:17px;color:#f0f0f0;transform:scaleX(1.1763);">74,75</span><div class="a" style="left:321.00px;top:825.67px;width:1346.00px;height:23.31px;background:#3f3f3f;"></div><span class="t" style="left:335.70px;top:830px;font-size:15.43px;line-height:17px;color:#f4f4f4;transform:scaleX(1.2380);font-weight:bold;">ΔE 2000</span><span class="t" style="left:486.60px;top:830px;font-size:15.43px;line-height:17px;color:#f0f0f0;transform:scaleX(1.1763);">10,23</span><span class="t" style="left:553.50px;top:830px;font-size:15.43px;line-height:17px;color:#f0f0f0;transform:scaleX(1.1763);">9,95</span><span class="t" style="left:624.50px;top:830px;font-size:15.43px;line-height:17px;color:#f0f0f0;transform:scaleX(1.1763);">9,51</span><span class="t" style="left:695.50px;top:830px;font-size:15.43px;line-height:17px;color:#f0f0f0;transform:scaleX(1.1763);">8,95</span><span class="t" style="left:766.00px;top:830px;font-size:15.43px;line-height:17px;color:#f0f0f0;transform:scaleX(1.1763);">8,15</span><span class="t" style="left:837.00px;top:830px;font-size:15.43px;line-height:17px;color:#f0f0f0;transform:scaleX(1.1763);">1,08</span><span class="t" style="left:893.00px;top:830px;font-size:15.43px;line-height:17px;color:#f0f0f0;transform:scaleX(1.1763);">5,90</span><span class="t" style="left:977.50px;top:830px;font-size:15.43px;line-height:17px;color:#f0f0f0;transform:scaleX(1.1763);">10,07</span><span class="t" style="left:1063.20px;top:830px;font-size:15.43px;line-height:17px;color:#f0f0f0;transform:scaleX(1.1763);">3,32</span><span class="t" style="left:1139.30px;top:830px;font-size:15.43px;line-height:17px;color:#f0f0f0;transform:scaleX(1.1763);">2,86</span><span class="t" style="left:1205.40px;top:830px;font-size:15.43px;line-height:17px;color:#f0f0f0;transform:scaleX(1.1763);">6,67</span><span class="t" style="left:1309.00px;top:830px;font-size:15.43px;line-height:17px;color:#f0f0f0;transform:scaleX(1.1763);">5,32</span><span class="t" style="left:1420.30px;top:830px;font-size:15.43px;line-height:17px;color:#f0f0f0;transform:scaleX(1.1763);">11,89</span><span class="t" style="left:1487.60px;top:830px;font-size:15.43px;line-height:17px;color:#f0f0f0;transform:scaleX(1.1763);">3,50</span><span class="t" style="left:1601.80px;top:830px;font-size:15.43px;line-height:17px;color:#f0f0f0;transform:scaleX(1.1763);">6,08</span><div class="a" style="left:321.00px;top:848.99px;width:1346.00px;height:23.31px;background:#7f7f7f;"></div><span class="t" style="left:335.70px;top:853px;font-size:15.43px;line-height:17px;color:#f4f4f4;transform:scaleX(1.1916);font-weight:bold;">ΔE ITP</span><span class="t" style="left:486.60px;top:853px;font-size:15.43px;line-height:17px;color:#f0f0f0;transform:scaleX(1.1763);">14,74</span><span class="t" style="left:553.50px;top:853px;font-size:15.43px;line-height:17px;color:#f0f0f0;transform:scaleX(1.1763);">15,37</span><span class="t" style="left:624.50px;top:853px;font-size:15.43px;line-height:17px;color:#f0f0f0;transform:scaleX(1.1763);">15,49</span><span class="t" style="left:695.50px;top:853px;font-size:15.43px;line-height:17px;color:#f0f0f0;transform:scaleX(1.1763);">15,45</span><span class="t" style="left:766.00px;top:853px;font-size:15.43px;line-height:17px;color:#f0f0f0;transform:scaleX(1.1763);">15,20</span><span class="t" style="left:837.00px;top:853px;font-size:15.43px;line-height:17px;color:#f0f0f0;transform:scaleX(1.1763);">73,62</span><span class="t" style="left:893.00px;top:853px;font-size:15.43px;line-height:17px;color:#f0f0f0;transform:scaleX(1.1763);">17,02</span><span class="t" style="left:977.50px;top:853px;font-size:15.43px;line-height:17px;color:#f0f0f0;transform:scaleX(1.1763);">21,32</span><span class="t" style="left:1063.20px;top:853px;font-size:15.43px;line-height:17px;color:#f0f0f0;transform:scaleX(1.1763);">12,97</span><span class="t" style="left:1139.30px;top:853px;font-size:15.43px;line-height:17px;color:#f0f0f0;transform:scaleX(1.1763);">8,95</span><span class="t" style="left:1205.40px;top:853px;font-size:15.43px;line-height:17px;color:#f0f0f0;transform:scaleX(1.1763);">17,52</span><span class="t" style="left:1309.00px;top:853px;font-size:15.43px;line-height:17px;color:#f0f0f0;transform:scaleX(1.1763);">8,31</span><span class="t" style="left:1420.30px;top:853px;font-size:15.43px;line-height:17px;color:#f0f0f0;transform:scaleX(1.1763);">32,05</span><span class="t" style="left:1487.60px;top:853px;font-size:15.43px;line-height:17px;color:#f0f0f0;transform:scaleX(1.1763);">18,06</span><span class="t" style="left:1601.80px;top:853px;font-size:15.43px;line-height:17px;color:#f0f0f0;transform:scaleX(1.1763);">33,94</span><div class="a" style="left:321.00px;top:872.00px;width:1346.00px;height:15.10px;background:#5e5e5e;"></div><div class="a" style="left:322.00px;top:873.80px;width:16.80px;height:11.80px;background:#727272;border-radius:3px;"></div><div class="a" style="left:1647.00px;top:873.90px;width:16.20px;height:12.20px;background:#747474;border-radius:3px;"></div><div class="a" style="left:341.70px;top:873.00px;width:647.10px;height:12.80px;background:#444;border-radius:7px;"></div><svg width="1667" height="1005"><path d="M327.2 879.8 L334 875.2 V884.4Z" fill="#2e2e2e"/><path d="M1658.8 880 L1652 875.2 V884.8Z" fill="#383838"/></svg>
<div class="a" style="left:0.00px;top:989.30px;width:1264.00px;height:15.70px;background:#606060;"></div><div class="a" style="left:-34.30px;top:928.60px;width:62.30px;height:60.60px;background:linear-gradient(#a0a0a0,#888 40%,#5e5e5e);border-radius:4px;box-shadow:0 0 0 1px #444;"></div><div class="a" style="left:-27.80px;top:934.80px;width:49.50px;height:15.00px;background:#8680c8;border-radius:5px;box-shadow:inset 0 1.5px 2px rgba(0,0,0,.45);"></div><span class="t" style="left:-23.86px;top:957px;font-size:12.71px;line-height:15px;color:#1e222a;transform:scaleX(1.0100);font-weight:bold;">Blue</span><span class="t" style="left:-23.86px;top:972px;font-size:12.71px;line-height:15px;color:#1e222a;transform:scaleX(1.0100);font-weight:bold;">Flower</span><div class="a" style="left:30.70px;top:928.60px;width:62.30px;height:60.60px;background:linear-gradient(#a0a0a0,#888 40%,#5e5e5e);border-radius:4px;box-shadow:0 0 0 1px #444;"></div><div class="a" style="left:37.20px;top:934.80px;width:49.50px;height:15.00px;background:#62c8b0;border-radius:5px;box-shadow:inset 0 1.5px 2px rgba(0,0,0,.45);"></div><span class="t" style="left:42.23px;top:957px;font-size:12.71px;line-height:15px;color:#1e222a;transform:scaleX(1.0100);font-weight:bold;">Bluish</span><span class="t" style="left:42.23px;top:972px;font-size:12.71px;line-height:15px;color:#1e222a;transform:scaleX(1.0100);font-weight:bold;">Green</span><div class="a" style="left:95.70px;top:928.60px;width:62.30px;height:60.60px;background:linear-gradient(#a0a0a0,#888 40%,#5e5e5e);border-radius:4px;box-shadow:0 0 0 1px #444;"></div><div class="a" style="left:102.20px;top:934.80px;width:49.50px;height:30.20px;background:#dc7828;border-radius:5px;box-shadow:inset 0 1.5px 2px rgba(0,0,0,.45);"></div><span class="t" style="left:104.38px;top:972px;font-size:12.71px;line-height:15px;color:#1e222a;transform:scaleX(1.0100);font-weight:bold;">Orange</span><div class="a" style="left:160.70px;top:928.60px;width:62.30px;height:60.60px;background:linear-gradient(#a0a0a0,#888 40%,#5e5e5e);border-radius:4px;box-shadow:0 0 0 1px #444;"></div><div class="a" style="left:167.20px;top:934.80px;width:49.50px;height:15.00px;background:#4a5cb0;border-radius:5px;box-shadow:inset 0 1.5px 2px rgba(0,0,0,.45);"></div><span class="t" style="left:166.17px;top:957px;font-size:12.71px;line-height:15px;color:#1e222a;transform:scaleX(1.0100);font-weight:bold;">Purplish</span><span class="t" style="left:166.17px;top:972px;font-size:12.71px;line-height:15px;color:#1e222a;transform:scaleX(1.0100);font-weight:bold;">Blue</span><div class="a" style="left:225.70px;top:928.60px;width:62.30px;height:60.60px;background:linear-gradient(#a0a0a0,#888 40%,#5e5e5e);border-radius:4px;box-shadow:0 0 0 1px #444;"></div><div class="a" style="left:232.20px;top:934.80px;width:49.50px;height:15.00px;background:#c85060;border-radius:5px;box-shadow:inset 0 1.5px 2px rgba(0,0,0,.45);"></div><span class="t" style="left:228.31px;top:957px;font-size:12.71px;line-height:15px;color:#1e222a;transform:scaleX(1.0100);font-weight:bold;">Moderate</span><span class="t" style="left:228.31px;top:972px;font-size:12.71px;line-height:15px;color:#1e222a;transform:scaleX(1.0100);font-weight:bold;">Red</span><div class="a" style="left:290.70px;top:928.60px;width:62.30px;height:60.60px;background:linear-gradient(#a0a0a0,#888 40%,#5e5e5e);border-radius:4px;box-shadow:0 0 0 1px #444;"></div><div class="a" style="left:297.20px;top:934.80px;width:49.50px;height:30.20px;background:#5c3c70;border-radius:5px;box-shadow:inset 0 1.5px 2px rgba(0,0,0,.45);"></div><span class="t" style="left:301.88px;top:972px;font-size:12.71px;line-height:15px;color:#1e222a;transform:scaleX(1.0100);font-weight:bold;">Purple</span><div class="a" style="left:355.70px;top:928.60px;width:62.30px;height:60.60px;background:linear-gradient(#a0a0a0,#888 40%,#5e5e5e);border-radius:4px;box-shadow:0 0 0 1px #444;"></div><div class="a" style="left:362.20px;top:934.80px;width:49.50px;height:15.00px;background:#a8c840;border-radius:5px;box-shadow:inset 0 1.5px 2px rgba(0,0,0,.45);"></div><span class="t" style="left:366.85px;top:957px;font-size:12.71px;line-height:15px;color:#1e222a;transform:scaleX(1.0100);font-weight:bold;">Yellow</span><span class="t" style="left:366.85px;top:972px;font-size:12.71px;line-height:15px;color:#1e222a;transform:scaleX(1.0100);font-weight:bold;">Green</span><div class="a" style="left:420.70px;top:928.60px;width:62.30px;height:60.60px;background:linear-gradient(#a0a0a0,#888 40%,#5e5e5e);border-radius:4px;box-shadow:0 0 0 1px #444;"></div><div class="a" style="left:427.20px;top:934.80px;width:49.50px;height:15.00px;background:#f0a830;border-radius:5px;box-shadow:inset 0 1.5px 2px rgba(0,0,0,.45);"></div><span class="t" style="left:429.38px;top:957px;font-size:12.71px;line-height:15px;color:#1e222a;transform:scaleX(1.0100);font-weight:bold;">Orange</span><span class="t" style="left:429.38px;top:972px;font-size:12.71px;line-height:15px;color:#1e222a;transform:scaleX(1.0100);font-weight:bold;">Yellow</span><div class="a" style="left:485.70px;top:928.60px;width:62.30px;height:60.60px;background:linear-gradient(#a0a0a0,#888 40%,#5e5e5e);border-radius:4px;box-shadow:0 0 0 1px #444;"></div><div class="a" style="left:492.20px;top:934.80px;width:49.50px;height:30.20px;background:#343c9c;border-radius:5px;box-shadow:inset 0 1.5px 2px rgba(0,0,0,.45);"></div><span class="t" style="left:502.95px;top:972px;font-size:12.71px;line-height:15px;color:#1e222a;transform:scaleX(1.0100);font-weight:bold;">Blue</span><div class="a" style="left:550.70px;top:928.60px;width:62.30px;height:60.60px;background:linear-gradient(#a0a0a0,#888 40%,#5e5e5e);border-radius:4px;box-shadow:0 0 0 1px #444;"></div><div class="a" style="left:557.20px;top:934.80px;width:49.50px;height:30.20px;background:#469a4c;border-radius:5px;box-shadow:inset 0 1.5px 2px rgba(0,0,0,.45);"></div><span class="t" style="left:563.29px;top:972px;font-size:12.71px;line-height:15px;color:#1e222a;transform:scaleX(1.0100);font-weight:bold;">Green</span><div class="a" style="left:615.70px;top:928.60px;width:62.30px;height:60.60px;background:linear-gradient(#a0a0a0,#888 40%,#5e5e5e);border-radius:4px;box-shadow:0 0 0 1px #444;"></div><div class="a" style="left:622.20px;top:934.80px;width:49.50px;height:30.20px;background:#b0303c;border-radius:5px;box-shadow:inset 0 1.5px 2px rgba(0,0,0,.45);"></div><span class="t" style="left:634.71px;top:972px;font-size:12.71px;line-height:15px;color:#1e222a;transform:scaleX(1.0100);font-weight:bold;">Red</span><div class="a" style="left:680.70px;top:928.60px;width:62.30px;height:60.60px;background:linear-gradient(#a0a0a0,#888 40%,#5e5e5e);border-radius:4px;box-shadow:0 0 0 1px #444;"></div><div class="a" style="left:687.20px;top:934.80px;width:49.50px;height:30.20px;background:#f0c820;border-radius:5px;box-shadow:inset 0 1.5px 2px rgba(0,0,0,.45);"></div><span class="t" style="left:691.85px;top:972px;font-size:12.71px;line-height:15px;color:#1e222a;transform:scaleX(1.0100);font-weight:bold;">Yellow</span><div class="a" style="left:745.70px;top:928.60px;width:62.30px;height:60.60px;background:linear-gradient(#a0a0a0,#888 40%,#5e5e5e);border-radius:4px;box-shadow:0 0 0 1px #444;"></div><div class="a" style="left:752.20px;top:934.80px;width:49.50px;height:30.20px;background:#c0589c;border-radius:5px;box-shadow:inset 0 1.5px 2px rgba(0,0,0,.45);"></div><span class="t" style="left:750.75px;top:972px;font-size:12.71px;line-height:15px;color:#1e222a;transform:scaleX(1.0100);font-weight:bold;">Magenta</span><div class="a" style="left:810.70px;top:928.60px;width:62.30px;height:60.60px;background:linear-gradient(#a0a0a0,#888 40%,#5e5e5e);border-radius:4px;box-shadow:0 0 0 1px #444;"></div><div class="a" style="left:817.20px;top:934.80px;width:49.50px;height:30.20px;background:#0088aa;border-radius:5px;box-shadow:inset 0 1.5px 2px rgba(0,0,0,.45);"></div><span class="t" style="left:826.15px;top:972px;font-size:12.71px;line-height:15px;color:#1e222a;transform:scaleX(1.0100);font-weight:bold;">Cyan</span><div class="a" style="left:875.70px;top:928.60px;width:62.30px;height:60.60px;background:linear-gradient(#a0a0a0,#888 40%,#5e5e5e);border-radius:4px;box-shadow:0 0 0 1px #444;"></div><div class="a" style="left:882.20px;top:934.80px;width:49.50px;height:30.20px;background:#ff0000;border-radius:5px;box-shadow:inset 0 1.5px 2px rgba(0,0,0,.45);"></div><span class="t" style="left:876.51px;top:972px;font-size:12.71px;line-height:15px;color:#1e222a;transform:scaleX(1.0100);font-weight:bold;">100% Red</span><div class="a" style="left:940.70px;top:928.60px;width:62.30px;height:60.60px;background:linear-gradient(#a0a0a0,#888 40%,#5e5e5e);border-radius:4px;box-shadow:0 0 0 1px #444;"></div><div class="a" style="left:947.20px;top:934.80px;width:49.50px;height:15.00px;background:#00ff00;border-radius:5px;box-shadow:inset 0 1.5px 2px rgba(0,0,0,.45);"></div><span class="t" style="left:953.29px;top:957px;font-size:12.71px;line-height:15px;color:#1e222a;transform:scaleX(1.0100);font-weight:bold;">100%</span><span class="t" style="left:953.29px;top:972px;font-size:12.71px;line-height:15px;color:#1e222a;transform:scaleX(1.0100);font-weight:bold;">Green</span><div class="a" style="left:1005.70px;top:928.60px;width:62.30px;height:60.60px;background:linear-gradient(#a0a0a0,#888 40%,#5e5e5e);border-radius:4px;box-shadow:0 0 0 1px #444;"></div><div class="a" style="left:1012.20px;top:934.80px;width:49.50px;height:15.00px;background:#0000ff;border-radius:5px;box-shadow:inset 0 1.5px 2px rgba(0,0,0,.45);"></div><span class="t" style="left:1020.41px;top:957px;font-size:12.71px;line-height:15px;color:#1e222a;transform:scaleX(1.0100);font-weight:bold;">100%</span><span class="t" style="left:1020.41px;top:972px;font-size:12.71px;line-height:15px;color:#1e222a;transform:scaleX(1.0100);font-weight:bold;">Blue</span><div class="a" style="left:1070.70px;top:928.60px;width:62.30px;height:60.60px;background:linear-gradient(#a0a0a0,#888 40%,#5e5e5e);border-radius:4px;box-shadow:0 0 0 1px #444;"></div><div class="a" style="left:1077.20px;top:934.80px;width:49.50px;height:15.00px;background:#00ffff;border-radius:5px;box-shadow:inset 0 1.5px 2px rgba(0,0,0,.45);"></div><span class="t" style="left:1085.41px;top:957px;font-size:12.71px;line-height:15px;color:#1e222a;transform:scaleX(1.0100);font-weight:bold;">100%</span><span class="t" style="left:1085.41px;top:972px;font-size:12.71px;line-height:15px;color:#1e222a;transform:scaleX(1.0100);font-weight:bold;">Cyan</span><div class="a" style="left:1135.70px;top:928.60px;width:62.30px;height:60.60px;background:linear-gradient(#a0a0a0,#888 40%,#5e5e5e);border-radius:4px;box-shadow:0 0 0 1px #444;"></div><div class="a" style="left:1142.20px;top:934.80px;width:49.50px;height:15.00px;background:#ff00ff;border-radius:5px;box-shadow:inset 0 1.5px 2px rgba(0,0,0,.45);"></div><span class="t" style="left:1140.75px;top:957px;font-size:12.71px;line-height:15px;color:#1e222a;transform:scaleX(1.0100);font-weight:bold;">100%</span><span class="t" style="left:1140.75px;top:972px;font-size:12.71px;line-height:15px;color:#1e222a;transform:scaleX(1.0100);font-weight:bold;">Magenta</span><div class="a" style="left:1200.70px;top:928.60px;width:62.30px;height:60.60px;background:linear-gradient(#141414,#1c1c1c 50%,#3a3a3a);border-radius:4px;box-shadow:0 0 0 1px #444;"></div><div class="a" style="left:1207.20px;top:934.80px;width:49.50px;height:15.00px;background:#ffff00;border-radius:5px;box-shadow:inset 0 1.5px 2px rgba(0,0,0,.45);"></div><span class="t" style="left:1211.85px;top:957px;font-size:12.71px;line-height:15px;color:#fff;transform:scaleX(1.0100);font-weight:bold;">100%</span><span class="t" style="left:1211.85px;top:972px;font-size:12.71px;line-height:15px;color:#fff;transform:scaleX(1.0100);font-weight:bold;">Yellow</span><div class="a" style="left:0.60px;top:991.70px;width:12.30px;height:11.50px;background:#7a7a7a;border-radius:3px;"></div><div class="a" style="left:1249.50px;top:991.70px;width:12.50px;height:11.50px;background:#7a7a7a;border-radius:3px;"></div><div class="a" style="left:448.40px;top:991.30px;width:794.60px;height:12.30px;background:#474747;border-radius:6px;"></div><svg width="1667" height="1005"><path d="M3.8 997.5 L9.6 992.8 V1002.2Z" fill="#333"/><path d="M1259 997.5 L1253.2 992.8 V1002.2Z" fill="#333"/></svg><div class="a" style="left:1265.00px;top:928.60px;width:59.00px;height:22.40px;background:linear-gradient(#a6a6a6,#8c8c8c 60%,#7e7e7e);border-radius:4px 4px 0 0;box-shadow:0 0 0 1px #3c3c3c;"></div><div class="a" style="left:1265.00px;top:952.00px;width:59.00px;height:53.00px;background:linear-gradient(#929292,#747474 50%,#5c5c5c);box-shadow:0 0 0 1px #3c3c3c;"></div><div class="a" style="left:1283.40px;top:929.00px;width:22.00px;height:20.00px;background:linear-gradient(#6a6a6a,#8a8a8a 60%,#9c9c9c);border-radius:50%;"></div><svg width="1667" height="1005"><path d="M1288.6 941.6 L1294.4 935.6 L1300.2 941.6Z" fill="#262626"/></svg><div class="a" style="left:1275.30px;top:960.00px;width:38.30px;height:37.30px;background:linear-gradient(#b4b4b4,#a4a4a4 49%,#868686 50%,#9a9a9a);border:2.6px solid #262626;border-radius:7px;box-sizing:border-box;"></div><div class="a" style="left:1285.90px;top:970.00px;width:17.70px;height:17.30px;background:linear-gradient(#2c2c2c,#1c1c1c 49%,#000 50%);"></div><div class="a" style="left:1325.00px;top:927.70px;width:58.10px;height:37.50px;background:linear-gradient(#a8a8a8,#8c8c8c 50%,#6c6c6c);box-shadow:inset -1px 0 0 #4a4a4a;"></div><div class="a" style="left:1383.10px;top:927.70px;width:55.90px;height:37.50px;background:linear-gradient(#a8a8a8,#8c8c8c 50%,#6c6c6c);box-shadow:inset -1px 0 0 #4a4a4a;"></div><div class="a" style="left:1439.00px;top:927.70px;width:56.60px;height:37.50px;background:linear-gradient(#7e7e7e,#686868 50%,#545454);box-shadow:inset -1px 0 0 #4a4a4a;"></div><div class="a" style="left:1497.00px;top:927.70px;width:55.00px;height:37.50px;background:linear-gradient(#a8a8a8,#8c8c8c 50%,#6c6c6c);box-shadow:inset -1px 0 0 #4a4a4a;"></div><div class="a" style="left:1552.00px;top:927.70px;width:56.60px;height:37.50px;background:linear-gradient(#484848,#3a3a3a 55%,#2e2e2e);box-shadow:inset -1px 0 0 #4a4a4a;"></div><div class="a" style="left:1608.60px;top:927.70px;width:58.40px;height:37.50px;background:linear-gradient(#a8a8a8,#8c8c8c 50%,#6c6c6c);box-shadow:inset -1px 0 0 #4a4a4a;"></div><div class="a" style="left:1325.00px;top:927.70px;width:342.00px;height:1.00px;background:#9a9a9a;opacity:.6;"></div><div class="a" style="left:1341.70px;top:934.00px;width:25.00px;height:25.00px;background:linear-gradient(#707070,#8c8c8c 55%,#a4a4a4);border-radius:50%;"></div><div class="a" style="left:1399.00px;top:934.00px;width:25.00px;height:25.00px;background:linear-gradient(#707070,#8c8c8c 55%,#a4a4a4);border-radius:50%;"></div><div class="a" style="left:1455.00px;top:934.00px;width:25.00px;height:25.00px;background:linear-gradient(#585858,#6a6a6a 55%,#7c7c7c);border-radius:50%;"></div><div class="a" style="left:1512.00px;top:934.00px;width:25.00px;height:25.00px;background:linear-gradient(#707070,#8c8c8c 55%,#a4a4a4);border-radius:50%;"></div><div class="a" style="left:1568.00px;top:934.00px;width:25.00px;height:25.00px;background:linear-gradient(#363636,#3e3e3e 55%,#484848);border-radius:50%;"></div><div class="a" style="left:1625.00px;top:934.00px;width:25.00px;height:25.00px;background:linear-gradient(#707070,#8c8c8c 55%,#a4a4a4);border-radius:50%;"></div><svg width="1667" height="1005"><rect x="1349.4" y="941.6" width="9.8" height="9.8" fill="#2a2a2a"/><path d="M1407.6 940.6 L1418 946.8 L1407.6 953Z" fill="#2a2a2a"/><path d="M1463.2 940.2 h-2.6 v12.6 h2.6 M1471.8 940.2 h2.6 v12.6 h-2.6" fill="none" stroke="#2c2c2c" stroke-width="2"/><path d="M1464 946.6 h7" stroke="#2c2c2c" stroke-width="1.8" stroke-dasharray="1.6 1.1"/><path d="M1524.5 946.6 c-2 -3.4 -7.4 -3.4 -7.4 0 c0 3.4 5.4 3.4 7.4 0 c2 -3.4 7.4 -3.4 7.4 0 c0 3.4 -5.4 3.4 -7.4 0z" fill="none" stroke="#2e2e2e" stroke-width="2"/><path d="M1574.6 945.2 a6.2 6.2 0 0 1 10.6 -3.2 M1586.4 948 a6.2 6.2 0 0 1 -10.6 3.2" fill="none" stroke="#222" stroke-width="2.4"/><path d="M1586.8 938.6 v5 h-5z M1574.2 954.6 v-5 h5z" fill="#222"/></svg><div class="a" style="left:1325.00px;top:967.20px;width:170.60px;height:37.80px;background:linear-gradient(#adadad,#909090 50%,#6e6e6e);box-shadow:inset 0 1px 0 #a0a0a0;"></div><div class="a" style="left:1497.00px;top:967.20px;width:170.00px;height:37.80px;background:linear-gradient(#adadad,#909090 50%,#6e6e6e);box-shadow:inset 0 1px 0 #a0a0a0;"></div><div class="a" style="left:1352.00px;top:973.50px;width:25.00px;height:25.00px;background:linear-gradient(#787878,#949494 55%,#aaa);border-radius:50%;"></div><div class="a" style="left:1617.50px;top:973.50px;width:25.00px;height:25.00px;background:linear-gradient(#787878,#949494 55%,#aaa);border-radius:50%;"></div><span class="t" style="left:1398.30px;top:973px;font-size:25.14px;line-height:28px;color:#333;transform:scaleX(1.1004);-webkit-text-stroke:.75px #303030;">Back</span><span class="t" style="left:1532.00px;top:973px;font-size:25.14px;line-height:28px;color:#333;transform:scaleX(1.2077);-webkit-text-stroke:.75px #303030;">Next</span><svg width="1667" height="1005"><path d="M1364 980.6 l-4.6 5.2 l4.6 5.2 M1370.4 980.6 l-4.6 5.2 l4.6 5.2 M1625 980.6 l4.6 5.2 l-4.6 5.2 M1631.4 980.6 l4.6 5.2 l-4.6 5.2" fill="none" stroke="#3a3a3a" stroke-width="1.8"/></svg>
<div class="a" style="left:972.20px;top:87.90px;width:694.80px;height:557.80px;background:linear-gradient(90deg,#1c1c1c,#1c1c1c 99.5%,#0c0c0c);"></div><div class="a" style="left:979.10px;top:95.10px;width:680.80px;height:544.70px;background:#333;"></div><div class="a" style="left:1017.00px;top:118.80px;width:639.40px;height:491.60px;background:#262626;"></div><div class="a" style="left:1017.0px;top:118.8px;width:639.4px;height:491.6px;overflow:hidden;"><div id="cg" style="position:absolute;left:0;top:0;width:660px;height:500px;clip-path:polygon(273.3px 479.0px,273.2px 478.9px,273.1px 479.0px,272.9px 479.1px,272.6px 479.1px,272.4px 479.1px,272.2px 479.3px,272.1px 479.5px,271.7px 479.5px,271.3px 479.5px,270.8px 479.4px,270.3px 479.4px,269.7px 479.3px,268.8px 478.9px,267.4px 478.0px,265.6px 476.8px,263.5px 475.2px,260.9px 473.2px,257.7px 470.7px,254.0px 467.5px,249.8px 463.9px,244.9px 459.8px,239.1px 455.0px,232.4px 449.4px,224.8px 443.1px,216.3px 436.0px,206.7px 427.5px,196.0px 417.5px,184.2px 405.5px,170.1px 389.5px,153.3px 368.6px,135.0px 343.7px,115.3px 314.6px,94.9px 281.7px,74.6px 246.9px,55.5px 211.3px,39.2px 176.6px,25.8px 144.3px,15.4px 115.6px,8.1px 91.4px,3.7px 71.5px,1.6px 55.6px,1.8px 42.9px,3.8px 32.7px,7.7px 24.9px,13.1px 19.1px,19.7px 15.3px,27.2px 13.0px,35.4px 11.8px,44.2px 11.3px,53.3px 11.1px,62.3px 11.1px,71.5px 11.4px,81.0px 11.8px,91.0px 12.4px,101.4px 13.2px,112.3px 14.2px,123.8px 15.3px,136.1px 16.5px,149.1px 17.9px,162.9px 19.4px,177.6px 21.0px,193.2px 22.8px,209.8px 24.7px,227.4px 26.7px,245.9px 28.8px,265.5px 31.1px,286.1px 33.5px,307.5px 35.9px,329.8px 38.5px,352.7px 41.1px,376.1px 43.8px,399.3px 46.5px,421.9px 49.1px,444.2px 51.7px,466.0px 54.2px,486.3px 56.5px,505.3px 58.7px,523.0px 60.7px,539.0px 62.6px,553.5px 64.3px,566.5px 65.8px,578.2px 67.1px,588.8px 68.3px,598.5px 69.4px,607.4px 70.5px,615.4px 71.4px,622.6px 72.2px,629.0px 73.0px,634.4px 73.6px,638.9px 74.1px,642.9px 74.6px,646.2px 75.0px,649.1px 75.3px,651.3px 75.5px,653.0px 75.7px,654.6px 75.9px,656.0px 76.1px,657.2px 76.2px,658.4px 76.4px,659.6px 76.5px,660.7px 76.6px,661.7px 76.7px,662.3px 76.8px,662.7px 76.9px,663.0px 76.9px,663.2px 76.9px);"><div style="position:absolute;left:0;top:0;width:660px;height:500px;filter:blur(1px);"><i style="left:24px;top:9px;width:84px;background:linear-gradient(90deg,#00ff00,#00ff00,#00ff00,#00ff00,#00ff00,#00ff00,#00ff00,#00ff00,#00ff00,#00ff00,#00ff00,#00ff00,#00ff00,#00ff00,#00ff00)"></i><i style="left:15px;top:12px;width:120px;background:linear-gradient(90deg,#00ff00,#00ff00,#00ff00,#00ff00,#00ff00,#00ff00,#00ff00,#00ff00,#00ff00,#00ff00,#00ff00,#00ff00,#00ff00,#00ff00,#00ff00,#00ff00,#00ff00,#00ff00,#00ff00,#00ff00,#0bff00)"></i><i style="left:10px;top:15px;width:156px;background:linear-gradient(90deg,#00ff00,#00ff00,#00ff00,#00ff00,#00ff00,#00ff00,#00ff00,#00ff00,#00ff00,#00ff00,#00ff00,#00ff00,#00ff00,#00ff00,#00ff00,#00ff00,#00ff00,#00ff00,#00ff00,#00ff00,#00ff00,#0cff00,#1aff00,#29ff00,#37ff00,#47ff00,#57ff00)"></i><i style="left:7px;top:18px;width:186px;background:linear-gradient(90deg,#00ff01,#00ff00,#00ff00,#00ff00,#00ff00,#00ff00,#00ff00,#00ff00,#00ff00,#00ff00,#00ff00,#00ff00,#00ff00,#00ff00,#00ff00,#00ff00,#00ff00,#00ff00,#00ff00,#00ff00,#00ff00,#04ff00,#12ff00,#20ff00,#2fff00,#3eff00,#4eff00,#5fff00,#6fff00,#81ff00,#93ff00,#a6ff00)"></i><i style="left:5px;top:21px;width:216px;background:linear-gradient(90deg,#00ff06,#00ff05,#00ff04,#00ff03,#00ff02,#00ff02,#00ff01,#00ff00,#00ff00,#00ff00,#00ff00,#00ff00,#00ff00,#00ff00,#00ff00,#00ff00,#00ff00,#00ff00,#00ff00,#00ff00,#00ff00,#00ff00,#0cff00,#1bff00,#29ff00,#39ff00,#48ff00,#59ff00,#69ff00,#7bff00,#8dff00,#a0ff00,#b3ff00,#c7ff00,#dcff00,#f2ff00,#fff600)"></i><i style="left:3px;top:24px;width:240px;background:linear-gradient(90deg,#00ff0b,#00ff0a,#00ff09,#00ff09,#00ff08,#00ff07,#00ff06,#00ff05,#00ff04,#00ff03,#00ff02,#00ff01,#00ff00,#00ff00,#00ff00,#00ff00,#00ff00,#00ff00,#00ff00,#00ff00,#00ff00,#00ff00,#07ff00,#15ff00,#24ff00,#33ff00,#42ff00,#53ff00,#63ff00,#75ff00,#87ff00,#99ff00,#adff00,#c1ff00,#d6ff00,#ebff00,#fffc00,#ffe700,#ffd500,#ffc400,#ffb600)"></i><i style="left:2px;top:27px;width:270px;background:linear-gradient(90deg,#00ff10,#00ff0f,#00ff0f,#00ff0e,#00ff0d,#00ff0c,#00ff0b,#00ff0b,#00ff0a,#00ff09,#00ff08,#00ff07,#00ff06,#00ff05,#00ff04,#00ff03,#00ff02,#00ff01,#00ff00,#00ff00,#00ff00,#00ff00,#03ff00,#11ff00,#20ff00,#2fff00,#3fff00,#4fff00,#60ff00,#72ff00,#84ff00,#96ff00,#aaff00,#beff00,#d3ff00,#e9ff00,#ffff00,#ffe900,#ffd600,#ffc600,#ffb700,#ffa900,#ff9d00,#ff9200,#ff8900,#ff8000)"></i><i style="left:1px;top:30px;width:294px;background:linear-gradient(90deg,#00ff15,#00ff14,#00ff14,#00ff13,#00ff12,#00ff12,#00ff11,#00ff10,#00ff0f,#00ff0e,#00ff0e,#00ff0d,#00ff0c,#00ff0b,#00ff0a,#00ff09,#00ff08,#00ff07,#00ff06,#00ff05,#00ff04,#00ff03,#00ff02,#0eff00,#1dff00,#2cff00,#3cff00,#4cff00,#5dff00,#6eff00,#80ff00,#93ff00,#a7ff00,#bbff00,#d0ff00,#e6ff00,#fcff00,#ffeb00,#ffd800,#ffc700,#ffb800,#ffaa00,#ff9e00,#ff9300,#ff8900,#ff8000,#ff7700,#ff7000,#ff6900,#ff6200)"></i><i style="left:0px;top:33px;width:324px;background:linear-gradient(90deg,#00ff1a,#00ff1a,#00ff19,#00ff18,#00ff18,#00ff17,#00ff16,#00ff16,#00ff15,#00ff14,#00ff13,#00ff13,#00ff12,#00ff11,#00ff10,#00ff0f,#00ff0e,#00ff0d,#00ff0c,#00ff0b,#00ff0a,#00ff09,#00ff08,#0bff07,#19ff06,#29ff05,#38ff04,#49ff02,#59ff01,#6bff00,#7dff00,#90ff00,#a3ff00,#b8ff00,#cdff00,#e3ff00,#faff00,#ffee00,#ffda00,#ffc900,#ffb900,#ffab00,#ff9f00,#ff9400,#ff8a00,#ff8000,#ff7800,#ff7000,#ff6900,#ff6200,#ff5c00,#ff5600,#ff5100,#ff4c00,#ff4700)"></i><i style="left:0px;top:36px;width:348px;background:linear-gradient(90deg,#00ff1f,#00ff1f,#00ff1e,#00ff1e,#00ff1d,#00ff1c,#00ff1c,#00ff1b,#00ff1a,#00ff1a,#00ff19,#00ff18,#00ff18,#00ff17,#00ff16,#00ff15,#00ff14,#00ff14,#00ff13,#00ff12,#00ff11,#00ff10,#00ff0f,#09ff0e,#18ff0d,#28ff0c,#38ff0b,#48ff0a,#59ff08,#6bff07,#7dff06,#90ff05,#a4ff03,#b8ff02,#cdff00,#e4ff00,#fbff00,#ffed00,#ffd900,#ffc700,#ffb800,#ffaa00,#ff9e00,#ff9300,#ff8800,#ff7f00,#ff7700,#ff6f00,#ff6800,#ff6100,#ff5b00,#ff5500,#ff5000,#ff4b00,#ff4600,#ff4200,#ff3e00,#ff3a00,#ff3600)"></i><i style="left:-1px;top:39px;width:378px;background:linear-gradient(90deg,#00ff24,#00ff24,#00ff23,#00ff23,#00ff22,#00ff22,#00ff21,#00ff21,#00ff20,#00ff20,#00ff1f,#00ff1e,#00ff1e,#00ff1d,#00ff1c,#00ff1c,#00ff1b,#00ff1a,#00ff19,#00ff19,#00ff18,#00ff17,#00ff16,#06ff15,#15ff14,#24ff13,#34ff12,#45ff11,#56ff10,#67ff0f,#7aff0e,#8dff0d,#a0ff0b,#b5ff0a,#caff09,#e1ff07,#f8ff06,#ffef04,#ffdb02,#ffc901,#ffb900,#ffab00,#ff9f00,#ff9300,#ff8900,#ff7f00,#ff7700,#ff6f00,#ff6800,#ff6100,#ff5b00,#ff5500,#ff5000,#ff4b00,#ff4600,#ff4100,#ff3d00,#ff3900,#ff3600,#ff3200,#ff2f00,#ff2c00,#ff2900,#ff2600)"></i><i style="left:-1px;top:42px;width:402px;background:linear-gradient(90deg,#00ff2a,#00ff29,#00ff29,#00ff28,#00ff28,#00ff27,#00ff27,#00ff26,#00ff26,#00ff25,#00ff25,#00ff24,#00ff24,#00ff23,#00ff22,#00ff22,#00ff21,#00ff20,#00ff20,#00ff1f,#00ff1e,#00ff1e,#00ff1d,#05ff1c,#14ff1b,#23ff1a,#33ff19,#44ff19,#55ff18,#67ff17,#79ff16,#8dff15,#a1ff13,#b5ff12,#cbff11,#e1ff10,#f9ff0f,#ffee0c,#ffda0a,#ffc808,#ffb806,#ffaa05,#ff9d03,#ff9202,#ff8801,#ff7e00,#ff7600,#ff6e00,#ff6700,#ff6000,#ff5a00,#ff5400,#ff4f00,#ff4a00,#ff4500,#ff4000,#ff3c00,#ff3800,#ff3500,#ff3100,#ff2e00,#ff2b00,#ff2800,#ff2500,#ff2200,#ff2000,#ff1d00,#ff1b00)"></i><i style="left:-1px;top:45px;width:426px;background:linear-gradient(90deg,#00ff2f,#00ff2e,#00ff2e,#00ff2e,#00ff2d,#00ff2d,#00ff2c,#00ff2c,#00ff2c,#00ff2b,#00ff2b,#00ff2a,#00ff2a,#00ff29,#00ff29,#00ff28,#00ff27,#00ff27,#00ff26,#00ff26,#00ff25,#00ff24,#00ff24,#04ff23,#13ff22,#22ff22,#32ff21,#43ff20,#54ff1f,#66ff1e,#79ff1e,#8dff1d,#a1ff1c,#b6ff1b,#cbff1a,#e2ff19,#faff17,#ffed15,#ffd812,#ffc70f,#ffb70d,#ffa90b,#ff9c0a,#ff9108,#ff8607,#ff7d05,#ff7504,#ff6d03,#ff6602,#ff5f01,#ff5900,#ff5300,#ff4e00,#ff4900,#ff4400,#ff4000,#ff3b00,#ff3800,#ff3400,#ff3000,#ff2d00,#ff2a00,#ff2700,#ff2400,#ff2200,#ff1f00,#ff1d00,#ff1a00,#ff1800,#ff1600,#ff1400,#ff1200)"></i><i style="left:-1px;top:48px;width:456px;background:linear-gradient(90deg,#00ff34,#00ff34,#00ff33,#00ff33,#00ff33,#00ff32,#00ff32,#00ff32,#00ff31,#00ff31,#00ff31,#00ff30,#00ff30,#00ff2f,#00ff2f,#00ff2e,#00ff2e,#00ff2d,#00ff2d,#00ff2d,#00ff2c,#00ff2b,#00ff2b,#02ff2a,#12ff2a,#21ff29,#32ff28,#42ff28,#54ff27,#66ff26,#79ff26,#8cff25,#a1ff24,#b6ff23,#ccff22,#e3ff22,#fbff21,#ffec1d,#ffd71a,#ffc517,#ffb614,#ffa712,#ff9b10,#ff900e,#ff850c,#ff7c0b,#ff7309,#ff6c08,#ff6407,#ff5e06,#ff5805,#ff5204,#ff4d03,#ff4802,#ff4301,#ff3f00,#ff3a00,#ff3700,#ff3300,#ff2f00,#ff2c00,#ff2900,#ff2600,#ff2300,#ff2100,#ff1e00,#ff1c00,#ff1a00,#ff1700,#ff1500,#ff1300,#ff1100,#ff0f00,#ff0e00,#ff0c00,#ff0a00,#ff0900)"></i><i style="left:-1px;top:51px;width:480px;background:linear-gradient(90deg,#00ff39,#00ff39,#00ff39,#00ff39,#00ff38,#00ff38,#00ff38,#00ff37,#00ff37,#00ff37,#00ff37,#00ff36,#00ff36,#00ff36,#00ff35,#00ff35,#00ff35,#00ff34,#00ff34,#00ff33,#00ff33,#00ff33,#00ff32,#01ff32,#11ff31,#20ff31,#31ff30,#42ff30,#53ff2f,#66ff2f,#79ff2e,#8cff2d,#a1ff2d,#b6ff2c,#cdff2b,#e4ff2b,#fcff2a,#ffea26,#ffd622,#ffc41e,#ffb41b,#ffa619,#ff9a16,#ff8e14,#ff8412,#ff7b10,#ff720e,#ff6a0d,#ff630b,#ff5d0a,#ff5709,#ff5108,#ff4c07,#ff4706,#ff4205,#ff3e04,#ff3903,#ff3603,#ff3202,#ff2f01,#ff2b01,#ff2800,#ff2500,#ff2300,#ff2000,#ff1d00,#ff1b00,#ff1900,#ff1700,#ff1500,#ff1300,#ff1100,#ff0f00,#ff0d00,#ff0b00,#ff0a00,#ff0800,#ff0700,#ff0500,#ff0400,#ff0200)"></i><i style="left:-1px;top:54px;width:504px;background:linear-gradient(90deg,#00ff3f,#00ff3f,#00ff3e,#00ff3e,#00ff3e,#00ff3e,#00ff3e,#00ff3d,#00ff3d,#00ff3d,#00ff3d,#00ff3c,#00ff3c,#00ff3c,#00ff3c,#00ff3b,#00ff3b,#00ff3b,#00ff3b,#00ff3a,#00ff3a,#00ff3a,#00ff39,#00ff39,#0fff39,#1fff38,#30ff38,#41ff38,#53ff37,#65ff37,#78ff36,#8cff36,#a1ff35,#b7ff35,#cdff34,#e5ff34,#fdff33,#ffe92e,#ffd52a,#ffc326,#ffb322,#ffa51f,#ff981c,#ff8d1a,#ff8318,#ff7a15,#ff7114,#ff6912,#ff6210,#ff5c0f,#ff550d,#ff500c,#ff4a0b,#ff460a,#ff4109,#ff3d08,#ff3907,#ff3506,#ff3105,#ff2e04,#ff2a04,#ff2703,#ff2502,#ff2202,#ff1f01,#ff1d01,#ff1a00,#ff1800,#ff1600,#ff1400,#ff1200,#ff1000,#ff0e00,#ff0c00,#ff0b00,#ff0900,#ff0700,#ff0600,#ff0400,#ff0300,#ff0200,#ff0000,#ff0000,#ff0000,#ff0000)"></i><i style="left:-1px;top:57px;width:534px;background:linear-gradient(90deg,#00ff44,#00ff44,#00ff44,#00ff44,#00ff44,#00ff44,#00ff43,#00ff43,#00ff43,#00ff43,#00ff43,#00ff43,#00ff43,#00ff42,#00ff42,#00ff42,#00ff42,#00ff42,#00ff42,#00ff41,#00ff41,#00ff41,#00ff41,#00ff41,#0eff40,#1eff40,#2fff40,#40ff40,#52ff3f,#65ff3f,#78ff3f,#8cff3f,#a1ff3e,#b7ff3e,#ceff3e,#e6ff3d,#feff3d,#ffe837,#ffd332,#ffc22e,#ffb22a,#ffa426,#ff9723,#ff8c20,#ff821d,#ff781b,#ff7019,#ff6817,#ff6115,#ff5a13,#ff5412,#ff4f10,#ff490f,#ff450e,#ff400d,#ff3c0c,#ff380b,#ff340a,#ff3009,#ff2d08,#ff2a07,#ff2706,#ff2405,#ff2105,#ff1e04,#ff1c04,#ff1903,#ff1702,#ff1502,#ff1301,#ff1101,#ff0f00,#ff0d00,#ff0c00,#ff0a00,#ff0800,#ff0700,#ff0500,#ff0400,#ff0200,#ff0100,#ff0000,#ff0000,#ff0000,#ff0000,#ff0000,#ff0000,#ff0000,#ff0000,#ff0000)"></i><i style="left:-1px;top:60px;width:558px;background:linear-gradient(90deg,#00ff4a,#00ff4a,#00ff4a,#00ff4a,#00ff4a,#00ff49,#00ff49,#00ff49,#00ff49,#00ff49,#00ff49,#00ff49,#00ff49,#00ff49,#00ff49,#00ff49,#00ff49,#00ff49,#00ff49,#00ff49,#00ff49,#00ff49,#00ff48,#00ff48,#0dff48,#1dff48,#2eff48,#40ff48,#52ff48,#64ff48,#78ff48,#8cff48,#a1ff48,#b7ff47,#ceff47,#e7ff47,#fffe47,#ffe740,#ffd23a,#ffc035,#ffb031,#ffa22d,#ff9629,#ff8b26,#ff8023,#ff7720,#ff6f1e,#ff671c,#ff601a,#ff5918,#ff5316,#ff4e15,#ff4813,#ff4412,#ff3f11,#ff3b0f,#ff370e,#ff330d,#ff2f0c,#ff2c0b,#ff290a,#ff2609,#ff2309,#ff2008,#ff1e07,#ff1b06,#ff1906,#ff1605,#ff1404,#ff1204,#ff1003,#ff0e03,#ff0d02,#ff0b02,#ff0901,#ff0801,#ff0600,#ff0500,#ff0300,#ff0200,#ff0000,#ff0000,#ff0000,#ff0000,#ff0000,#ff0000,#ff0000,#ff0000,#ff0000,#ff0000,#ff0000,#ff0000,#ff0000,#ff0000)"></i><i style="left:0px;top:63px;width:582px;background:linear-gradient(90deg,#00ff4f,#00ff4f,#00ff4f,#00ff4f,#00ff4f,#00ff4f,#00ff4f,#00ff4f,#00ff50,#00ff50,#00ff50,#00ff50,#00ff50,#00ff50,#00ff50,#00ff50,#00ff50,#00ff50,#00ff50,#00ff50,#00ff50,#00ff50,#00ff50,#00ff50,#0fff50,#1fff50,#30ff50,#42ff50,#54ff51,#67ff51,#7bff51,#90ff51,#a5ff51,#bcff51,#d3ff51,#ecff51,#fff94f,#ffe248,#ffce42,#ffbc3c,#ffad37,#ff9f33,#ff932f,#ff882c,#ff7e28,#ff7526,#ff6c23,#ff6521,#ff5e1e,#ff571c,#ff511a,#ff4c19,#ff4717,#ff4216,#ff3d14,#ff3913,#ff3512,#ff3110,#ff2e0f,#ff2a0e,#ff270d,#ff240c,#ff220b,#ff1f0b,#ff1c0a,#ff1a09,#ff1808,#ff1508,#ff1307,#ff1106,#ff0f06,#ff0d05,#ff0c05,#ff0a04,#ff0804,#ff0703,#ff0503,#ff0402,#ff0202,#ff0101,#ff0001,#ff0000,#ff0000,#ff0000,#ff0000,#ff0000,#ff0000,#ff0000,#ff0000,#ff0000,#ff0000,#ff0000,#ff0000,#ff0000,#ff0000,#ff0000,#ff0000,#ff0000)"></i><i style="left:0px;top:66px;width:612px;background:linear-gradient(90deg,#00ff55,#00ff55,#00ff55,#00ff55,#00ff55,#00ff55,#00ff56,#00ff56,#00ff56,#00ff56,#00ff56,#00ff56,#00ff56,#00ff57,#00ff57,#00ff57,#00ff57,#00ff57,#00ff57,#00ff57,#00ff58,#00ff58,#00ff58,#00ff58,#0dff58,#1eff59,#2fff59,#41ff59,#54ff59,#67ff5a,#7bff5a,#90ff5a,#a5ff5a,#bcff5b,#d4ff5b,#edff5b,#fff859,#ffe151,#ffcc4a,#ffbb44,#ffab3f,#ff9e3a,#ff9136,#ff8632,#ff7c2e,#ff732b,#ff6b28,#ff6326,#ff5d23,#ff5621,#ff501f,#ff4b1d,#ff451b,#ff411a,#ff3c18,#ff3817,#ff3415,#ff3014,#ff2d13,#ff2a12,#ff2611,#ff2310,#ff210f,#ff1e0e,#ff1b0d,#ff190c,#ff170b,#ff150a,#ff120a,#ff1009,#ff0f08,#ff0d08,#ff0b07,#ff0906,#ff0806,#ff0605,#ff0505,#ff0304,#ff0204,#ff0003,#ff0003,#ff0002,#ff0002,#ff0002,#ff0001,#ff0001,#ff0001,#ff0000,#ff0000,#ff0000,#ff0000,#ff0000,#ff0000,#ff0000,#ff0000,#ff0000,#ff0000,#ff0000,#ff0000,#ff0000,#ff0000,#ff0000,#ff0000)"></i><i style="left:1px;top:69px;width:636px;background:linear-gradient(90deg,#00ff5b,#00ff5b,#00ff5b,#00ff5b,#00ff5b,#00ff5c,#00ff5c,#00ff5c,#00ff5c,#00ff5c,#00ff5d,#00ff5d,#00ff5d,#00ff5d,#00ff5e,#00ff5e,#00ff5e,#00ff5f,#00ff5f,#00ff5f,#00ff5f,#00ff60,#00ff60,#00ff60,#0fff61,#20ff61,#31ff62,#43ff62,#56ff62,#6aff63,#7eff63,#93ff64,#a9ff64,#c0ff65,#d9ff65,#f2ff66,#fff261,#ffdc59,#ffc851,#ffb74b,#ffa845,#ff9a40,#ff8e3b,#ff8337,#ff7a34,#ff7130,#ff692d,#ff612a,#ff5a28,#ff5425,#ff4e23,#ff4921,#ff441f,#ff3f1d,#ff3a1c,#ff361a,#ff3219,#ff2f17,#ff2b16,#ff2815,#ff2514,#ff2213,#ff1f11,#ff1d10,#ff1a10,#ff180f,#ff160e,#ff130d,#ff110c,#ff0f0b,#ff0d0b,#ff0c0a,#ff0a09,#ff0809,#ff0708,#ff0508,#ff0407,#ff0206,#ff0106,#ff0005,#ff0005,#ff0004,#ff0004,#ff0004,#ff0003,#ff0003,#ff0002,#ff0002,#ff0002,#ff0001,#ff0001,#ff0001,#ff0000,#ff0000,#ff0000,#ff0000,#ff0000,#ff0000,#ff0000,#ff0000,#ff0000,#ff0000,#ff0000,#ff0000,#ff0000,#ff0000,#ff0000)"></i><i style="left:1px;top:72px;width:654px;background:linear-gradient(90deg,#00ff61,#00ff61,#00ff61,#00ff61,#00ff62,#00ff62,#00ff62,#00ff62,#00ff63,#00ff63,#00ff63,#00ff64,#00ff64,#00ff64,#00ff65,#00ff65,#00ff66,#00ff66,#00ff66,#00ff67,#00ff67,#00ff68,#00ff68,#00ff69,#0eff69,#1fff6a,#30ff6a,#43ff6b,#56ff6b,#69ff6c,#7eff6d,#93ff6d,#aaff6e,#c1ff6f,#d9ff70,#f3ff70,#fff16b,#ffda62,#ffc75a,#ffb653,#ffa64c,#ff9947,#ff8d42,#ff823d,#ff7839,#ff6f36,#ff6732,#ff602f,#ff592d,#ff532a,#ff4d28,#ff4825,#ff4323,#ff3e21,#ff3920,#ff351e,#ff311c,#ff2e1b,#ff2a19,#ff2718,#ff2417,#ff2116,#ff1e15,#ff1c13,#ff1912,#ff1711,#ff1511,#ff1310,#ff110f,#ff0f0e,#ff0d0d,#ff0b0d,#ff090c,#ff080b,#ff060a,#ff040a,#ff0309,#ff0109,#ff0008,#ff0008,#ff0007,#ff0007,#ff0006,#ff0006,#ff0005,#ff0005,#ff0004,#ff0004,#ff0003,#ff0003,#ff0003,#ff0002,#ff0002,#ff0002,#ff0001,#ff0001,#ff0001,#ff0000,#ff0000,#ff0000,#ff0000,#ff0000,#ff0000,#ff0000,#ff0000,#ff0000,#ff0000,#ff0000,#ff0000,#ff0000)"></i><i style="left:2px;top:75px;width:648px;background:linear-gradient(90deg,#00ff66,#00ff67,#00ff67,#00ff68,#00ff68,#00ff68,#00ff69,#00ff69,#00ff69,#00ff6a,#00ff6a,#00ff6b,#00ff6b,#00ff6c,#00ff6c,#00ff6d,#00ff6d,#00ff6e,#00ff6e,#00ff6f,#00ff6f,#00ff70,#00ff71,#00ff71,#0fff72,#21ff73,#32ff73,#45ff74,#58ff75,#6cff76,#81ff77,#97ff78,#aeff78,#c6ff79,#deff7a,#f9ff7c,#ffec73,#ffd669,#ffc261,#ffb259,#ffa353,#ff964d,#ff8a48,#ff7f43,#ff763f,#ff6d3b,#ff6537,#ff5e34,#ff5731,#ff512e,#ff4b2c,#ff4629,#ff4127,#ff3c25,#ff3823,#ff3421,#ff3020,#ff2c1e,#ff291d,#ff261b,#ff231a,#ff2019,#ff1d17,#ff1b16,#ff1815,#ff1614,#ff1413,#ff1112,#ff0f11,#ff0e10,#ff0c10,#ff0a0f,#ff080e,#ff070d,#ff050d,#ff030c,#ff020b,#ff010b,#ff000a,#ff000a,#ff0009,#ff0008,#ff0008,#ff0007,#ff0007,#ff0006,#ff0006,#ff0006,#ff0005,#ff0005,#ff0004,#ff0004,#ff0004,#ff0003,#ff0003,#ff0003,#ff0002,#ff0002,#ff0002,#ff0001,#ff0001,#ff0001,#ff0000,#ff0000,#ff0000,#ff0000,#ff0000,#ff0000,#ff0000)"></i><i style="left:2px;top:78px;width:648px;background:linear-gradient(90deg,#00ff6c,#00ff6d,#00ff6d,#00ff6e,#00ff6e,#00ff6f,#00ff6f,#00ff70,#00ff70,#00ff71,#00ff71,#00ff72,#00ff72,#00ff73,#00ff73,#00ff74,#00ff75,#00ff75,#00ff76,#00ff77,#00ff78,#00ff78,#00ff79,#00ff7a,#0eff7b,#20ff7c,#31ff7d,#44ff7d,#58ff7e,#6cff80,#81ff81,#97ff82,#aeff83,#c6ff84,#dfff85,#faff87,#ffea7d,#ffd473,#ffc169,#ffb061,#ffa15a,#ff9454,#ff884e,#ff7e49,#ff7445,#ff6c40,#ff643d,#ff5c39,#ff5636,#ff5033,#ff4a30,#ff452e,#ff402b,#ff3b29,#ff3727,#ff3325,#ff2f23,#ff2b22,#ff2820,#ff251f,#ff221d,#ff1f1c,#ff1c1b,#ff1a19,#ff1718,#ff1517,#ff1316,#ff1115,#ff0f14,#ff0d13,#ff0b12,#ff0911,#ff0711,#ff0610,#ff040f,#ff030e,#ff010e,#ff000d,#ff000c,#ff000c,#ff000b,#ff000b,#ff000a,#ff0009,#ff0009,#ff0008,#ff0008,#ff0007,#ff0007,#ff0007,#ff0006,#ff0006,#ff0005,#ff0005,#ff0005,#ff0004,#ff0004,#ff0003,#ff0003,#ff0003,#ff0002,#ff0002,#ff0002,#ff0002,#ff0001,#ff0001,#ff0001,#ff0000,#ff0000)"></i><i style="left:3px;top:81px;width:648px;background:linear-gradient(90deg,#00ff73,#00ff73,#00ff74,#00ff74,#00ff75,#00ff75,#00ff76,#00ff76,#00ff77,#00ff78,#00ff78,#00ff79,#00ff7a,#00ff7a,#00ff7b,#00ff7c,#00ff7d,#00ff7d,#00ff7e,#00ff7f,#00ff80,#00ff81,#00ff82,#00ff83,#10ff84,#21ff85,#34ff86,#47ff87,#5aff88,#6fff8a,#84ff8b,#9bff8c,#b2ff8e,#cbff8f,#e5ff91,#fffe92,#ffe585,#ffcf7a,#ffbd70,#ffac68,#ff9e61,#ff915a,#ff8554,#ff7b4f,#ff714a,#ff6945,#ff6141,#ff5a3e,#ff533a,#ff4d37,#ff4834,#ff4332,#ff3e2f,#ff392d,#ff352b,#ff3129,#ff2d27,#ff2a25,#ff2723,#ff2322,#ff2020,#ff1e1f,#ff1b1d,#ff181c,#ff161b,#ff141a,#ff1219,#ff1018,#ff0e17,#ff0c16,#ff0a15,#ff0814,#ff0613,#ff0512,#ff0311,#ff0211,#ff0010,#ff000f,#ff000e,#ff000e,#ff000d,#ff000c,#ff000c,#ff000b,#ff000b,#ff000a,#ff000a,#ff0009,#ff0009,#ff0008,#ff0008,#ff0007,#ff0007,#ff0007,#ff0006,#ff0006,#ff0005,#ff0005,#ff0005,#ff0004,#ff0004,#ff0004,#ff0003,#ff0003,#ff0003,#ff0002,#ff0002,#ff0002,#ff0001)"></i><i style="left:4px;top:84px;width:648px;background:linear-gradient(90deg,#00ff79,#00ff79,#00ff7a,#00ff7b,#00ff7b,#00ff7c,#00ff7d,#00ff7d,#00ff7e,#00ff7f,#00ff80,#00ff80,#00ff81,#00ff82,#00ff83,#00ff84,#00ff85,#00ff86,#00ff87,#00ff88,#00ff89,#00ff8a,#00ff8b,#00ff8c,#12ff8d,#23ff8f,#36ff90,#49ff91,#5dff93,#72ff94,#88ff96,#9fff97,#b7ff99,#d0ff9b,#eaff9d,#fff99b,#ffe08d,#ffcb81,#ffb877,#ffa86f,#ff9a67,#ff8d60,#ff825a,#ff7854,#ff6f4f,#ff664a,#ff5f46,#ff5842,#ff513f,#ff4b3c,#ff4639,#ff4136,#ff3c33,#ff3731,#ff332e,#ff2f2c,#ff2c2a,#ff2828,#ff2527,#ff2225,#ff1f23,#ff1c22,#ff1a20,#ff171f,#ff151e,#ff131c,#ff101b,#ff0e1a,#ff0c19,#ff0b18,#ff0917,#ff0716,#ff0515,#ff0414,#ff0213,#ff0113,#ff0012,#ff0011,#ff0010,#ff0010,#ff000f,#ff000e,#ff000e,#ff000d,#ff000d,#ff000c,#ff000c,#ff000b,#ff000b,#ff000a,#ff000a,#ff0009,#ff0009,#ff0008,#ff0008,#ff0007,#ff0007,#ff0007,#ff0006,#ff0006,#ff0005,#ff0005,#ff0005,#ff0004,#ff0004,#ff0004,#ff0003,#ff0003,#ff0003)"></i><i style="left:4px;top:87px;width:648px;background:linear-gradient(90deg,#00ff7f,#00ff80,#00ff80,#00ff81,#00ff82,#00ff83,#00ff83,#00ff84,#00ff85,#00ff86,#00ff87,#00ff88,#00ff89,#00ff8a,#00ff8b,#00ff8c,#00ff8d,#00ff8e,#00ff8f,#00ff90,#00ff91,#00ff93,#00ff94,#00ff95,#10ff97,#22ff98,#35ff9a,#48ff9b,#5dff9d,#72ff9f,#88ffa0,#9fffa2,#b7ffa4,#d0ffa6,#ebffa9,#fff7a6,#ffdf97,#ffc98b,#ffb780,#ffa777,#ff996e,#ff8c67,#ff8160,#ff775a,#ff6d55,#ff6550,#ff5d4c,#ff5748,#ff5044,#ff4a40,#ff453d,#ff403a,#ff3b37,#ff3635,#ff3232,#ff2e30,#ff2b2e,#ff272c,#ff242a,#ff2128,#ff1e27,#ff1b25,#ff1923,#ff1622,#ff1421,#ff121f,#ff101e,#ff0e1d,#ff0c1c,#ff0a1b,#ff081a,#ff0619,#ff0518,#ff0317,#ff0216,#ff0015,#ff0014,#ff0013,#ff0013,#ff0012,#ff0011,#ff0011,#ff0010,#ff000f,#ff000f,#ff000e,#ff000d,#ff000d,#ff000c,#ff000c,#ff000b,#ff000b,#ff000a,#ff000a,#ff0009,#ff0009,#ff0009,#ff0008,#ff0008,#ff0007,#ff0007,#ff0007,#ff0006,#ff0006,#ff0006,#ff0005,#ff0005,#ff0005,#ff0004)"></i><i style="left:5px;top:90px;width:648px;background:linear-gradient(90deg,#00ff86,#00ff86,#00ff87,#00ff88,#00ff89,#00ff8a,#00ff8b,#00ff8b,#00ff8c,#00ff8d,#00ff8e,#00ff8f,#00ff90,#00ff92,#00ff93,#00ff94,#00ff95,#00ff96,#00ff98,#00ff99,#00ff9a,#00ff9c,#00ff9d,#01ff9f,#12ffa0,#24ffa2,#37ffa4,#4bffa6,#60ffa8,#75ffaa,#8cffac,#a3ffae,#bcffb0,#d6ffb3,#f1ffb5,#fff2ae,#ffd99f,#ffc592,#ffb387,#ffa37d,#ff9574,#ff896d,#ff7e66,#ff7460,#ff6b5a,#ff6355,#ff5b50,#ff544c,#ff4e48,#ff4844,#ff4341,#ff3e3e,#ff393b,#ff3538,#ff3136,#ff2d33,#ff2931,#ff262f,#ff232d,#ff202b,#ff1d2a,#ff1a28,#ff1826,#ff1525,#ff1323,#ff1122,#ff0f21,#ff0d1f,#ff0b1e,#ff091d,#ff071c,#ff051b,#ff041a,#ff0219,#ff0118,#ff0017,#ff0016,#ff0015,#ff0015,#ff0014,#ff0013,#ff0012,#ff0012,#ff0011,#ff0010,#ff0010,#ff000f,#ff000f,#ff000e,#ff000e,#ff000d,#ff000c,#ff000c,#ff000c,#ff000b,#ff000b,#ff000a,#ff000a,#ff0009,#ff0009,#ff0008,#ff0008,#ff0008,#ff0007,#ff0007,#ff0007,#ff0006,#ff0006,#ff0006)"></i><i style="left:6px;top:93px;width:648px;background:linear-gradient(90deg,#00ff8c,#00ff8d,#00ff8e,#00ff8f,#00ff90,#00ff91,#00ff92,#00ff93,#00ff94,#00ff95,#00ff96,#00ff97,#00ff98,#00ff9a,#00ff9b,#00ff9c,#00ff9e,#00ff9f,#00ffa0,#00ffa2,#00ffa4,#00ffa5,#00ffa7,#02ffa9,#14ffab,#26ffac,#3affae,#4effb1,#63ffb3,#79ffb5,#8fffb7,#a7ffba,#c1ffbc,#dbffbf,#f7ffc2,#ffecb6,#ffd4a7,#ffc099,#ffae8e,#ff9f84,#ff917b,#ff8573,#ff7b6b,#ff7165,#ff685f,#ff605a,#ff5955,#ff5251,#ff4c4c,#ff4649,#ff4145,#ff3c42,#ff373f,#ff333c,#ff2f39,#ff2b37,#ff2835,#ff2432,#ff2130,#ff1e2e,#ff1b2d,#ff192b,#ff1629,#ff1428,#ff1226,#ff0f25,#ff0d23,#ff0b22,#ff0a21,#ff0820,#ff061e,#ff041d,#ff031c,#ff011b,#ff001a,#ff0019,#ff0018,#ff0018,#ff0017,#ff0016,#ff0015,#ff0014,#ff0014,#ff0013,#ff0012,#ff0012,#ff0011,#ff0010,#ff0010,#ff000f,#ff000f,#ff000e,#ff000e,#ff000d,#ff000d,#ff000c,#ff000c,#ff000b,#ff000b,#ff000a,#ff000a,#ff000a,#ff0009,#ff0009,#ff0008,#ff0008,#ff0008,#ff0007,#ff0007)"></i><i style="left:7px;top:96px;width:642px;background:linear-gradient(90deg,#00ff93,#00ff94,#00ff95,#00ff96,#00ff97,#00ff98,#00ff99,#00ff9a,#00ff9b,#00ff9d,#00ff9e,#00ff9f,#00ffa1,#00ffa2,#00ffa3,#00ffa5,#00ffa6,#00ffa8,#00ffaa,#00ffab,#00ffad,#00ffaf,#00ffb1,#04ffb3,#16ffb5,#28ffb7,#3cffb9,#50ffbc,#66ffbe,#7cffc1,#93ffc3,#acffc6,#c5ffc9,#e0ffcc,#fdffcf,#ffe6be,#ffcfae,#ffbba0,#ffaa94,#ff9b8a,#ff8e81,#ff8278,#ff7771,#ff6e6a,#ff6564,#ff5d5f,#ff565a,#ff5055,#ff4a51,#ff444d,#ff3f49,#ff3a46,#ff3543,#ff3140,#ff2d3d,#ff2a3a,#ff2638,#ff2336,#ff2033,#ff1d31,#ff1a30,#ff172e,#ff152c,#ff132a,#ff1029,#ff0e27,#ff0c26,#ff0a24,#ff0823,#ff0722,#ff0521,#ff0320,#ff021f,#ff001d,#ff001c,#ff001b,#ff001b,#ff001a,#ff0019,#ff0018,#ff0017,#ff0016,#ff0016,#ff0015,#ff0014,#ff0013,#ff0013,#ff0012,#ff0012,#ff0011,#ff0010,#ff0010,#ff000f,#ff000f,#ff000e,#ff000e,#ff000d,#ff000d,#ff000c,#ff000c,#ff000b,#ff000b,#ff000b,#ff000a,#ff000a,#ff0009,#ff0009,#ff0009)"></i><i style="left:8px;top:99px;width:642px;background:linear-gradient(90deg,#00ff9a,#00ff9b,#00ff9c,#00ff9d,#00ff9e,#00ff9f,#00ffa1,#00ffa2,#00ffa3,#00ffa4,#00ffa6,#00ffa7,#00ffa9,#00ffaa,#00ffac,#00ffae,#00ffaf,#00ffb1,#00ffb3,#00ffb5,#00ffb7,#00ffb9,#00ffbb,#05ffbd,#17ffc0,#2bffc2,#3effc4,#53ffc7,#69ffca,#80ffcd,#97ffd0,#b0ffd3,#cbffd6,#e6ffda,#fffbda,#ffe1c6,#ffcab6,#ffb7a8,#ffa69b,#ff9790,#ff8a87,#ff7f7e,#ff7476,#ff6b6f,#ff6369,#ff5b63,#ff545e,#ff4d59,#ff4755,#ff4251,#ff3d4d,#ff384a,#ff3446,#ff2f43,#ff2c40,#ff283e,#ff253b,#ff2139,#ff1e37,#ff1b34,#ff1932,#ff1631,#ff142f,#ff112d,#ff0f2b,#ff0d2a,#ff0b28,#ff0927,#ff0726,#ff0624,#ff0423,#ff0222,#ff0121,#ff0020,#ff001f,#ff001e,#ff001d,#ff001c,#ff001b,#ff001a,#ff0019,#ff0018,#ff0018,#ff0017,#ff0016,#ff0015,#ff0015,#ff0014,#ff0013,#ff0013,#ff0012,#ff0011,#ff0011,#ff0010,#ff0010,#ff000f,#ff000f,#ff000e,#ff000e,#ff000d,#ff000d,#ff000c,#ff000c,#ff000c,#ff000b,#ff000b,#ff000a,#ff000a)"></i><i style="left:8px;top:102px;width:636px;background:linear-gradient(90deg,#00ffa0,#00ffa2,#00ffa3,#00ffa4,#00ffa5,#00ffa7,#00ffa8,#00ffa9,#00ffab,#00ffac,#00ffae,#00ffaf,#00ffb1,#00ffb3,#00ffb4,#00ffb6,#00ffb8,#00ffba,#00ffbc,#00ffbe,#00ffc0,#00ffc3,#00ffc5,#04ffc7,#16ffca,#29ffcd,#3effcf,#53ffd2,#68ffd5,#7fffd9,#98ffdc,#b1ffdf,#cbffe3,#e7ffe7,#fffae6,#ffdfd1,#ffc9c0,#ffb5b1,#ffa5a4,#ff9698,#ff898e,#ff7d85,#ff737d,#ff6a76,#ff616f,#ff5a69,#ff5364,#ff4c5f,#ff465a,#ff4156,#ff3c52,#ff374e,#ff324b,#ff2e47,#ff2b44,#ff2742,#ff243f,#ff203c,#ff1d3a,#ff1a38,#ff1836,#ff1534,#ff1332,#ff1130,#ff0e2e,#ff0c2d,#ff0a2b,#ff082a,#ff0728,#ff0527,#ff0326,#ff0224,#ff0023,#ff0022,#ff0021,#ff0020,#ff001f,#ff001e,#ff001d,#ff001c,#ff001b,#ff001a,#ff001a,#ff0019,#ff0018,#ff0017,#ff0017,#ff0016,#ff0015,#ff0014,#ff0014,#ff0013,#ff0013,#ff0012,#ff0011,#ff0011,#ff0010,#ff0010,#ff000f,#ff000f,#ff000e,#ff000e,#ff000d,#ff000d,#ff000d,#ff000c,#ff000c)"></i><i style="left:9px;top:105px;width:630px;background:linear-gradient(90deg,#00ffa7,#00ffa9,#00ffaa,#00ffab,#00ffad,#00ffae,#00ffb0,#00ffb1,#00ffb3,#00ffb4,#00ffb6,#00ffb8,#00ffba,#00ffbc,#00ffbd,#00ffbf,#00ffc2,#00ffc4,#00ffc6,#00ffc8,#00ffcb,#00ffcd,#00ffd0,#05ffd2,#18ffd5,#2cffd8,#40ffdb,#55ffde,#6cffe2,#83ffe5,#9cffe9,#b5ffed,#d1fff1,#edfff5,#fff4ee,#ffdad9,#ffc4c7,#ffb1b8,#ffa1aa,#ff929e,#ff8694,#ff7a8b,#ff7082,#ff677b,#ff5f74,#ff576e,#ff5068,#ff4a63,#ff445e,#ff3f5a,#ff3a56,#ff3552,#ff314e,#ff2d4b,#ff2948,#ff2545,#ff2242,#ff1f40,#ff1c3d,#ff193b,#ff1639,#ff1437,#ff1235,#ff0f33,#ff0d31,#ff0b2f,#ff092e,#ff072c,#ff052b,#ff0429,#ff0228,#ff0127,#ff0026,#ff0024,#ff0023,#ff0022,#ff0021,#ff0020,#ff001f,#ff001e,#ff001d,#ff001c,#ff001b,#ff001b,#ff001a,#ff0019,#ff0018,#ff0018,#ff0017,#ff0016,#ff0016,#ff0015,#ff0014,#ff0014,#ff0013,#ff0013,#ff0012,#ff0011,#ff0011,#ff0010,#ff0010,#ff000f,#ff000f,#ff000e,#ff000e,#ff000e)"></i><i style="left:10px;top:108px;width:630px;background:linear-gradient(90deg,#00ffaf,#00ffb0,#00ffb1,#00ffb3,#00ffb4,#00ffb6,#00ffb8,#00ffb9,#00ffbb,#00ffbd,#00ffbf,#00ffc1,#00ffc3,#00ffc5,#00ffc7,#00ffc9,#00ffcb,#00ffcd,#00ffd0,#00ffd2,#00ffd5,#00ffd8,#00ffdb,#07ffde,#1affe1,#2effe4,#43ffe7,#58ffeb,#6fffef,#87fff2,#a0fff7,#bafffb,#d6ffff,#eefaff,#ffeef7,#ffd4e1,#ffbfcf,#ffadbf,#ff9db1,#ff8fa5,#ff829a,#ff7790,#ff6d88,#ff6480,#ff5c79,#ff5573,#ff4e6d,#ff4867,#ff4262,#ff3d5e,#ff385a,#ff3356,#ff2f52,#ff2b4f,#ff274b,#ff2448,#ff2045,#ff1d43,#ff1a40,#ff183e,#ff153c,#ff133a,#ff1038,#ff0e36,#ff0c34,#ff0a32,#ff0830,#ff062f,#ff042d,#ff032c,#ff012a,#ff0029,#ff0028,#ff0027,#ff0025,#ff0024,#ff0023,#ff0022,#ff0021,#ff0020,#ff001f,#ff001e,#ff001d,#ff001c,#ff001c,#ff001b,#ff001a,#ff0019,#ff0019,#ff0018,#ff0017,#ff0017,#ff0016,#ff0015,#ff0015,#ff0014,#ff0013,#ff0013,#ff0012,#ff0012,#ff0011,#ff0011,#ff0010,#ff0010,#ff000f,#ff000f)"></i><i style="left:11px;top:111px;width:624px;background:linear-gradient(90deg,#00ffb6,#00ffb7,#00ffb9,#00ffbb,#00ffbc,#00ffbe,#00ffc0,#00ffc2,#00ffc3,#00ffc5,#00ffc7,#00ffc9,#00ffcc,#00ffce,#00ffd0,#00ffd2,#00ffd5,#00ffd8,#00ffda,#00ffdd,#00ffe0,#00ffe3,#00ffe6,#09ffe9,#1cffed,#30fff0,#45fff4,#5cfff8,#73fffc,#8bfeff,#a1faff,#b8f5ff,#cff1ff,#e7ecff,#ffe8ff,#ffcfe9,#ffbad6,#ffa8c5,#ff99b7,#ff8bab,#ff7fa0,#ff7496,#ff6a8d,#ff6185,#ff597e,#ff5277,#ff4b71,#ff456c,#ff4067,#ff3b62,#ff365d,#ff3159,#ff2d56,#ff2952,#ff264f,#ff224c,#ff1f49,#ff1c46,#ff1943,#ff1641,#ff143f,#ff113c,#ff0f3a,#ff0d38,#ff0b36,#ff0935,#ff0733,#ff0531,#ff0330,#ff022e,#ff002d,#ff002b,#ff002a,#ff0029,#ff0028,#ff0026,#ff0025,#ff0024,#ff0023,#ff0022,#ff0021,#ff0020,#ff001f,#ff001e,#ff001d,#ff001d,#ff001c,#ff001b,#ff001a,#ff001a,#ff0019,#ff0018,#ff0018,#ff0017,#ff0016,#ff0016,#ff0015,#ff0014,#ff0014,#ff0013,#ff0013,#ff0012,#ff0012,#ff0011,#ff0011)"></i><i style="left:12px;top:114px;width:624px;background:linear-gradient(90deg,#00ffbd,#00ffbf,#00ffc1,#00ffc2,#00ffc4,#00ffc6,#00ffc8,#00ffca,#00ffcc,#00ffce,#00ffd0,#00ffd3,#00ffd5,#00ffd7,#00ffda,#00ffdc,#00ffdf,#00ffe2,#00ffe5,#00ffe8,#00ffeb,#00ffee,#00fff1,#0afff5,#1efff9,#33fffd,#48fdff,#5df9ff,#72f5ff,#87f1ff,#9dedff,#b3e8ff,#cae4ff,#e0dfff,#f7dbff,#ffcaf0,#ffb5dd,#ffa4cc,#ff95be,#ff87b1,#ff7ba5,#ff719b,#ff6792,#ff5f8a,#ff5783,#ff507c,#ff4976,#ff4370,#ff3e6b,#ff3966,#ff3461,#ff2f5d,#ff2b59,#ff2856,#ff2452,#ff214f,#ff1d4c,#ff1a49,#ff1846,#ff1544,#ff1242,#ff103f,#ff0e3d,#ff0c3b,#ff0a39,#ff0837,#ff0635,#ff0434,#ff0232,#ff0131,#ff002f,#ff002e,#ff002c,#ff002b,#ff002a,#ff0028,#ff0027,#ff0026,#ff0025,#ff0024,#ff0023,#ff0022,#ff0021,#ff0020,#ff001f,#ff001e,#ff001e,#ff001d,#ff001c,#ff001b,#ff001b,#ff001a,#ff0019,#ff0018,#ff0018,#ff0017,#ff0017,#ff0016,#ff0015,#ff0015,#ff0014,#ff0014,#ff0013,#ff0013,#ff0012)"></i><i style="left:13px;top:117px;width:618px;background:linear-gradient(90deg,#00ffc5,#00ffc7,#00ffc9,#00ffca,#00ffcc,#00ffce,#00ffd0,#00ffd3,#00ffd5,#00ffd7,#00ffd9,#00ffdc,#00ffde,#00ffe1,#00ffe4,#00ffe6,#00ffe9,#00ffec,#00ffef,#00fff3,#00fff6,#00fffa,#00fffd,#0cfdff,#20f9ff,#33f5ff,#47f1ff,#5bedff,#70e9ff,#84e5ff,#99e0ff,#aedcff,#c4d8ff,#dad3ff,#f0cfff,#ffc5f8,#ffb1e4,#ffa0d3,#ff91c4,#ff84b7,#ff78ab,#ff6ea1,#ff6497,#ff5c8f,#ff5487,#ff4d80,#ff477a,#ff4174,#ff3c6f,#ff376a,#ff3265,#ff2e61,#ff2a5d,#ff2659,#ff2256,#ff1f52,#ff1c4f,#ff194c,#ff1649,#ff1447,#ff1144,#ff0f42,#ff0d40,#ff0a3e,#ff083c,#ff063a,#ff0538,#ff0336,#ff0135,#ff0033,#ff0031,#ff0030,#ff002f,#ff002d,#ff002c,#ff002b,#ff0029,#ff0028,#ff0027,#ff0026,#ff0025,#ff0024,#ff0023,#ff0022,#ff0021,#ff0020,#ff001f,#ff001f,#ff001e,#ff001d,#ff001c,#ff001b,#ff001b,#ff001a,#ff0019,#ff0019,#ff0018,#ff0017,#ff0017,#ff0016,#ff0016,#ff0015,#ff0015,#ff0014)"></i><i style="left:14px;top:120px;width:612px;background:linear-gradient(90deg,#00ffcd,#00ffcf,#00ffd1,#00ffd3,#00ffd5,#00ffd7,#00ffd9,#00ffdb,#00ffde,#00ffe0,#00ffe3,#00ffe5,#00ffe8,#00ffeb,#00ffee,#00fff1,#00fff4,#00fff7,#00fffb,#00fffe,#00fcff,#00f9ff,#00f5ff,#0df1ff,#20edff,#33e9ff,#46e5ff,#5ae1ff,#6dddff,#81d9ff,#96d5ff,#aad1ff,#bfcdff,#d4c8ff,#e9c4ff,#ffbfff,#ffaceb,#ff9bd9,#ff8dca,#ff80bd,#ff75b1,#ff6ba6,#ff619d,#ff5994,#ff528c,#ff4b85,#ff457e,#ff3f78,#ff3a73,#ff356e,#ff3069,#ff2c65,#ff2860,#ff245d,#ff2159,#ff1d56,#ff1a52,#ff184f,#ff154d,#ff124a,#ff1047,#ff0d45,#ff0b43,#ff0940,#ff073e,#ff053c,#ff043a,#ff0239,#ff0037,#ff0035,#ff0034,#ff0032,#ff0031,#ff002f,#ff002e,#ff002d,#ff002b,#ff002a,#ff0029,#ff0028,#ff0027,#ff0026,#ff0025,#ff0024,#ff0023,#ff0022,#ff0021,#ff0020,#ff001f,#ff001f,#ff001e,#ff001d,#ff001c,#ff001c,#ff001b,#ff001a,#ff001a,#ff0019,#ff0018,#ff0018,#ff0017,#ff0017,#ff0016)"></i><i style="left:15px;top:123px;width:612px;background:linear-gradient(90deg,#00ffd5,#00ffd7,#00ffd9,#00ffdb,#00ffdd,#00ffdf,#00ffe2,#00ffe4,#00ffe7,#00ffe9,#00ffec,#00ffef,#00fff2,#00fff5,#00fff8,#00fffb,#00ffff,#00fcff,#00f8ff,#00f5ff,#00f1ff,#00edff,#00eaff,#0ee6ff,#21e2ff,#33deff,#46dbff,#58d7ff,#6bd3ff,#7fcfff,#92caff,#a6c6ff,#bac2ff,#cebeff,#e3baff,#f8b5ff,#ffa8f2,#ff97e0,#ff89d0,#ff7dc3,#ff71b6,#ff67ac,#ff5fa2,#ff5699,#ff4f91,#ff488a,#ff4283,#ff3d7d,#ff3777,#ff3372,#ff2e6d,#ff2a68,#ff2664,#ff2360,#ff1f5c,#ff1c59,#ff1956,#ff1652,#ff1350,#ff114d,#ff0e4a,#ff0c48,#ff0a45,#ff0843,#ff0641,#ff043f,#ff023d,#ff013b,#ff0039,#ff0038,#ff0036,#ff0034,#ff0033,#ff0032,#ff0030,#ff002f,#ff002e,#ff002c,#ff002b,#ff002a,#ff0029,#ff0028,#ff0027,#ff0026,#ff0025,#ff0024,#ff0023,#ff0022,#ff0021,#ff0020,#ff0020,#ff001f,#ff001e,#ff001d,#ff001d,#ff001c,#ff001b,#ff001a,#ff001a,#ff0019,#ff0019,#ff0018,#ff0017)"></i><i style="left:16px;top:126px;width:606px;background:linear-gradient(90deg,#00ffdd,#00ffdf,#00ffe1,#00ffe3,#00ffe6,#00ffe8,#00ffeb,#00ffed,#00fff0,#00fff3,#00fff6,#00fff9,#00fffc,#00ffff,#00fbff,#00f8ff,#00f5ff,#00f1ff,#00eeff,#00eaff,#00e7ff,#00e3ff,#00dfff,#10dcff,#21d8ff,#33d4ff,#45d0ff,#57ccff,#6ac9ff,#7cc5ff,#8fc1ff,#a2bcff,#b6b8ff,#c9b4ff,#ddb0ff,#f1acff,#ffa3f8,#ff93e6,#ff85d6,#ff79c8,#ff6ebc,#ff64b1,#ff5ca7,#ff549e,#ff4d96,#ff468e,#ff4087,#ff3a81,#ff357b,#ff3176,#ff2c71,#ff286c,#ff2468,#ff2164,#ff1e60,#ff1a5c,#ff1759,#ff1556,#ff1253,#ff1050,#ff0d4d,#ff0b4a,#ff0948,#ff0746,#ff0544,#ff0341,#ff013f,#ff003e,#ff003c,#ff003a,#ff0038,#ff0037,#ff0035,#ff0034,#ff0032,#ff0031,#ff0030,#ff002e,#ff002d,#ff002c,#ff002b,#ff002a,#ff0029,#ff0028,#ff0027,#ff0026,#ff0025,#ff0024,#ff0023,#ff0022,#ff0021,#ff0020,#ff0020,#ff001f,#ff001e,#ff001d,#ff001d,#ff001c,#ff001b,#ff001b,#ff001a,#ff0019)"></i><i style="left:17px;top:129px;width:600px;background:linear-gradient(90deg,#00ffe5,#00ffe7,#00ffea,#00ffec,#00ffef,#00fff1,#00fff4,#00fff7,#00fffa,#00fffd,#00feff,#00fbff,#00f8ff,#00f5ff,#00f1ff,#00eeff,#00ebff,#00e7ff,#00e4ff,#00e0ff,#00ddff,#00d9ff,#00d6ff,#11d2ff,#22ceff,#33cbff,#44c7ff,#56c3ff,#68bfff,#7abbff,#8cb7ff,#9fb3ff,#b2afff,#c4abff,#d8a7ff,#eba3ff,#ff9fff,#ff8fed,#ff82dc,#ff76ce,#ff6bc1,#ff61b6,#ff59ac,#ff51a3,#ff4a9a,#ff4493,#ff3e8b,#ff3885,#ff337f,#ff2f79,#ff2a74,#ff2670,#ff236b,#ff1f67,#ff1c63,#ff195f,#ff165c,#ff1359,#ff1156,#ff0e53,#ff0c50,#ff0a4d,#ff084b,#ff0648,#ff0446,#ff0244,#ff0042,#ff0040,#ff003e,#ff003c,#ff003b,#ff0039,#ff0037,#ff0036,#ff0034,#ff0033,#ff0032,#ff0030,#ff002f,#ff002e,#ff002d,#ff002c,#ff002a,#ff0029,#ff0028,#ff0027,#ff0026,#ff0025,#ff0025,#ff0024,#ff0023,#ff0022,#ff0021,#ff0020,#ff0020,#ff001f,#ff001e,#ff001d,#ff001d,#ff001c,#ff001c)"></i><i style="left:18px;top:132px;width:600px;background:linear-gradient(90deg,#00ffed,#00fff0,#00fff2,#00fff5,#00fff8,#00fffa,#00fffd,#00feff,#00fbff,#00f8ff,#00f4ff,#00f1ff,#00eeff,#00ebff,#00e8ff,#00e4ff,#00e1ff,#00deff,#00daff,#00d7ff,#00d3ff,#00d0ff,#01ccff,#11c9ff,#22c5ff,#33c1ff,#44beff,#55baff,#66b6ff,#78b2ff,#89afff,#9babff,#aea7ff,#c0a3ff,#d39fff,#e59aff,#f896ff,#ff8bf3,#ff7ee2,#ff72d4,#ff68c7,#ff5ebb,#ff56b1,#ff4fa7,#ff489f,#ff4197,#ff3c90,#ff3689,#ff3183,#ff2d7d,#ff2978,#ff2573,#ff216f,#ff1e6a,#ff1a66,#ff1763,#ff145f,#ff125c,#ff0f59,#ff0d56,#ff0b53,#ff0850,#ff064d,#ff044b,#ff0349,#ff0147,#ff0044,#ff0042,#ff0040,#ff003f,#ff003d,#ff003b,#ff003a,#ff0038,#ff0036,#ff0035,#ff0034,#ff0032,#ff0031,#ff0030,#ff002f,#ff002d,#ff002c,#ff002b,#ff002a,#ff0029,#ff0028,#ff0027,#ff0026,#ff0025,#ff0024,#ff0024,#ff0023,#ff0022,#ff0021,#ff0020,#ff0020,#ff001f,#ff001e,#ff001e,#ff001d)"></i><i style="left:19px;top:135px;width:594px;background:linear-gradient(90deg,#00fff6,#00fff8,#00fffb,#00fffe,#00fdff,#00faff,#00f7ff,#00f4ff,#00f1ff,#00eeff,#00ebff,#00e8ff,#00e5ff,#00e2ff,#00dfff,#00dbff,#00d8ff,#00d5ff,#00d1ff,#00ceff,#00cbff,#00c7ff,#02c4ff,#12c0ff,#22bdff,#33b9ff,#43b5ff,#54b2ff,#65aeff,#76aaff,#87a6ff,#98a2ff,#aa9fff,#bc9bff,#ce97ff,#e093ff,#f28eff,#ff87f9,#ff7ae8,#ff6fd9,#ff65cc,#ff5cc0,#ff53b6,#ff4cac,#ff45a3,#ff3f9b,#ff3994,#ff348d,#ff2f87,#ff2b81,#ff277c,#ff2377,#ff1f72,#ff1c6e,#ff196a,#ff1666,#ff1362,#ff105f,#ff0e5b,#ff0c58,#ff0956,#ff0753,#ff0550,#ff034e,#ff014b,#ff0049,#ff0047,#ff0045,#ff0043,#ff0041,#ff003f,#ff003d,#ff003c,#ff003a,#ff0039,#ff0037,#ff0036,#ff0034,#ff0033,#ff0032,#ff0030,#ff002f,#ff002e,#ff002d,#ff002c,#ff002b,#ff002a,#ff0029,#ff0028,#ff0027,#ff0026,#ff0025,#ff0024,#ff0024,#ff0023,#ff0022,#ff0021,#ff0020,#ff0020,#ff001f)"></i><i style="left:21px;top:138px;width:588px;background:linear-gradient(90deg,#00ffff,#00fcff,#00faff,#00f7ff,#00f4ff,#00f1ff,#00eeff,#00ebff,#00e8ff,#00e5ff,#00e2ff,#00dfff,#00dcff,#00d9ff,#00d5ff,#00d2ff,#00cfff,#00ccff,#00c8ff,#00c5ff,#00c2ff,#00beff,#06bbff,#16b7ff,#25b4ff,#35b0ff,#45adff,#56a9ff,#66a5ff,#77a2ff,#879eff,#989aff,#a996ff,#bb92ff,#cc8eff,#de8aff,#f086ff,#ff81fc,#ff75eb,#ff6add,#ff60cf,#ff57c4,#ff4fb9,#ff48af,#ff42a6,#ff3c9e,#ff3697,#ff3190,#ff2d8a,#ff2884,#ff247f,#ff217a,#ff1d75,#ff1a70,#ff176c,#ff1468,#ff1165,#ff0f61,#ff0c5e,#ff0a5b,#ff0858,#ff0655,#ff0452,#ff0250,#ff004d,#ff004b,#ff0049,#ff0047,#ff0045,#ff0043,#ff0041,#ff003f,#ff003e,#ff003c,#ff003a,#ff0039,#ff0037,#ff0036,#ff0035,#ff0033,#ff0032,#ff0031,#ff0030,#ff002f,#ff002e,#ff002c,#ff002b,#ff002a,#ff0029,#ff0028,#ff0028,#ff0027,#ff0026,#ff0025,#ff0024,#ff0023,#ff0023,#ff0022,#ff0021)"></i><i style="left:22px;top:141px;width:582px;background:linear-gradient(90deg,#00f7ff,#00f4ff,#00f1ff,#00eeff,#00ebff,#00e8ff,#00e6ff,#00e3ff,#00e0ff,#00ddff,#00daff,#00d7ff,#00d4ff,#00d0ff,#00cdff,#00caff,#00c7ff,#00c4ff,#00c0ff,#00bdff,#00baff,#00b6ff,#07b3ff,#16b0ff,#26acff,#35a9ff,#45a5ff,#55a2ff,#649eff,#759aff,#8597ff,#9593ff,#a68fff,#b78bff,#c887ff,#d984ff,#ea80ff,#fc7cff,#ff71f1,#ff66e2,#ff5dd5,#ff54c9,#ff4dbe,#ff46b4,#ff3fab,#ff39a3,#ff349b,#ff2f94,#ff2b8e,#ff2688,#ff2282,#ff1f7d,#ff1b78,#ff1874,#ff156f,#ff126b,#ff1068,#ff0d64,#ff0b61,#ff095e,#ff065b,#ff0458,#ff0255,#ff0152,#ff0050,#ff004e,#ff004b,#ff0049,#ff0047,#ff0045,#ff0043,#ff0042,#ff0040,#ff003e,#ff003d,#ff003b,#ff003a,#ff0038,#ff0037,#ff0035,#ff0034,#ff0033,#ff0032,#ff0030,#ff002f,#ff002e,#ff002d,#ff002c,#ff002b,#ff002a,#ff0029,#ff0028,#ff0027,#ff0027,#ff0026,#ff0025,#ff0024,#ff0023)"></i><i style="left:23px;top:144px;width:582px;background:linear-gradient(90deg,#00eeff,#00ecff,#00e9ff,#00e6ff,#00e3ff,#00e0ff,#00ddff,#00dbff,#00d8ff,#00d5ff,#00d2ff,#00cfff,#00ccff,#00c9ff,#00c6ff,#00c2ff,#00bfff,#00bcff,#00b9ff,#00b6ff,#00b2ff,#00afff,#08acff,#17a8ff,#26a5ff,#35a1ff,#449eff,#549aff,#6397ff,#7393ff,#8390ff,#938cff,#a388ff,#b385ff,#c481ff,#d47dff,#e579ff,#f675ff,#ff6ef7,#ff63e8,#ff5ada,#ff52ce,#ff4ac3,#ff43b9,#ff3daf,#ff37a7,#ff329f,#ff2d98,#ff2992,#ff258c,#ff2186,#ff1d81,#ff1a7c,#ff1777,#ff1473,#ff116f,#ff0e6b,#ff0c67,#ff0964,#ff0760,#ff055d,#ff035a,#ff0158,#ff0055,#ff0053,#ff0050,#ff004e,#ff004c,#ff004a,#ff0048,#ff0046,#ff0044,#ff0042,#ff0040,#ff003f,#ff003d,#ff003c,#ff003a,#ff0039,#ff0037,#ff0036,#ff0035,#ff0033,#ff0032,#ff0031,#ff0030,#ff002f,#ff002e,#ff002d,#ff002c,#ff002b,#ff002a,#ff0029,#ff0028,#ff0027,#ff0026,#ff0026,#ff0025)"></i><i style="left:24px;top:147px;width:576px;background:linear-gradient(90deg,#00e6ff,#00e4ff,#00e1ff,#00deff,#00dbff,#00d9ff,#00d6ff,#00d3ff,#00d0ff,#00cdff,#00caff,#00c7ff,#00c4ff,#00c1ff,#00beff,#00bbff,#00b8ff,#00b5ff,#00b2ff,#00aeff,#00abff,#00a8ff,#09a5ff,#18a1ff,#269eff,#359bff,#4497ff,#5394ff,#6290ff,#718dff,#8089ff,#9085ff,#a082ff,#b07eff,#c07aff,#d077ff,#e073ff,#f16fff,#ff6afc,#ff60ed,#ff57df,#ff4fd3,#ff47c7,#ff41bd,#ff3bb4,#ff35ab,#ff30a3,#ff2b9c,#ff2795,#ff238f,#ff1f89,#ff1b84,#ff187f,#ff157a,#ff1276,#ff0f72,#ff0d6e,#ff0a6a,#ff0867,#ff0663,#ff0460,#ff025d,#ff005a,#ff0058,#ff0055,#ff0053,#ff0050,#ff004e,#ff004c,#ff004a,#ff0048,#ff0046,#ff0044,#ff0042,#ff0041,#ff003f,#ff003e,#ff003c,#ff003b,#ff0039,#ff0038,#ff0037,#ff0035,#ff0034,#ff0033,#ff0032,#ff0031,#ff002f,#ff002e,#ff002d,#ff002c,#ff002b,#ff002b,#ff002a,#ff0029,#ff0028,#ff0027)"></i><i style="left:25px;top:150px;width:576px;background:linear-gradient(90deg,#00dfff,#00dcff,#00daff,#00d7ff,#00d4ff,#00d1ff,#00ceff,#00ccff,#00c9ff,#00c6ff,#00c3ff,#00c0ff,#00bdff,#00baff,#00b7ff,#00b4ff,#00b1ff,#00aeff,#00abff,#00a8ff,#00a4ff,#00a1ff,#0a9eff,#189bff,#2797ff,#3594ff,#4391ff,#528dff,#618aff,#6f86ff,#7e83ff,#8e7fff,#9d7cff,#ac78ff,#bc74ff,#cc71ff,#dc6dff,#ec69ff,#fc66ff,#ff5df2,#ff54e4,#ff4cd7,#ff45cc,#ff3ec2,#ff38b8,#ff33af,#ff2ea7,#ff29a0,#ff2599,#ff2193,#ff1d8d,#ff1a88,#ff1682,#ff137e,#ff1179,#ff0e75,#ff0b71,#ff096d,#ff076a,#ff0566,#ff0363,#ff0160,#ff005d,#ff005a,#ff0058,#ff0055,#ff0053,#ff0050,#ff004e,#ff004c,#ff004a,#ff0048,#ff0046,#ff0044,#ff0043,#ff0041,#ff0040,#ff003e,#ff003c,#ff003b,#ff003a,#ff0038,#ff0037,#ff0036,#ff0035,#ff0033,#ff0032,#ff0031,#ff0030,#ff002f,#ff002e,#ff002d,#ff002c,#ff002b,#ff002a,#ff0029,#ff0029)"></i><i style="left:26px;top:153px;width:570px;background:linear-gradient(90deg,#00d8ff,#00d5ff,#00d2ff,#00d0ff,#00cdff,#00caff,#00c8ff,#00c5ff,#00c2ff,#00bfff,#00bcff,#00b9ff,#00b6ff,#00b3ff,#00b0ff,#00adff,#00aaff,#00a7ff,#00a4ff,#00a1ff,#009eff,#009bff,#0b98ff,#1994ff,#2791ff,#358eff,#438bff,#5187ff,#5f84ff,#6e80ff,#7c7dff,#8b79ff,#9a76ff,#a972ff,#b86fff,#c86bff,#d768ff,#e764ff,#f760ff,#ff5af8,#ff51e9,#ff49dc,#ff42d1,#ff3cc6,#ff36bc,#ff31b4,#ff2cab,#ff27a4,#ff239d,#ff1f97,#ff1b91,#ff188b,#ff1586,#ff1281,#ff0f7c,#ff0c78,#ff0a74,#ff0870,#ff056c,#ff0369,#ff0166,#ff0063,#ff0060,#ff005d,#ff005a,#ff0058,#ff0055,#ff0053,#ff0050,#ff004e,#ff004c,#ff004a,#ff0048,#ff0047,#ff0045,#ff0043,#ff0042,#ff0040,#ff003e,#ff003d,#ff003c,#ff003a,#ff0039,#ff0038,#ff0036,#ff0035,#ff0034,#ff0033,#ff0032,#ff0031,#ff0030,#ff002f,#ff002e,#ff002d,#ff002c,#ff002b)"></i><i style="left:28px;top:156px;width:564px;background:linear-gradient(90deg,#00d0ff,#00ceff,#00cbff,#00c9ff,#00c6ff,#00c3ff,#00c0ff,#00beff,#00bbff,#00b8ff,#00b5ff,#00b2ff,#00afff,#00acff,#00aaff,#00a7ff,#00a4ff,#00a1ff,#009eff,#009aff,#0097ff,#0194ff,#0e91ff,#1c8eff,#298bff,#3787ff,#4584ff,#5381ff,#617eff,#6f7aff,#7d77ff,#8b73ff,#9a70ff,#a96cff,#b869ff,#c765ff,#d662ff,#e55eff,#f45aff,#ff55fa,#ff4dec,#ff45df,#ff3ed3,#ff38c9,#ff33bf,#ff2eb6,#ff29ae,#ff24a7,#ff20a0,#ff1d99,#ff1993,#ff168e,#ff1388,#ff1083,#ff0d7f,#ff0b7a,#ff0876,#ff0672,#ff046f,#ff026b,#ff0068,#ff0065,#ff0062,#ff005f,#ff005c,#ff005a,#ff0057,#ff0055,#ff0052,#ff0050,#ff004e,#ff004c,#ff004a,#ff0048,#ff0047,#ff0045,#ff0043,#ff0042,#ff0040,#ff003f,#ff003d,#ff003c,#ff003a,#ff0039,#ff0038,#ff0037,#ff0035,#ff0034,#ff0033,#ff0032,#ff0031,#ff0030,#ff002f,#ff002e,#ff002d)"></i><i style="left:29px;top:159px;width:558px;background:linear-gradient(90deg,#00caff,#00c7ff,#00c5ff,#00c2ff,#00bfff,#00bdff,#00baff,#00b7ff,#00b4ff,#00b2ff,#00afff,#00acff,#00a9ff,#00a6ff,#00a3ff,#00a0ff,#009eff,#009bff,#0098ff,#0095ff,#0091ff,#028eff,#0f8bff,#1c88ff,#2985ff,#3782ff,#447fff,#527bff,#5f78ff,#6d75ff,#7b71ff,#896eff,#976bff,#a667ff,#b464ff,#c360ff,#d25dff,#e059ff,#ef56ff,#ff52ff,#ff4af1,#ff43e4,#ff3cd8,#ff36cd,#ff30c3,#ff2bba,#ff27b2,#ff22aa,#ff1ea3,#ff1b9d,#ff1797,#ff1491,#ff118c,#ff0e87,#ff0c82,#ff097d,#ff0779,#ff0575,#ff0271,#ff006e,#ff006b,#ff0067,#ff0064,#ff0061,#ff005f,#ff005c,#ff0059,#ff0057,#ff0055,#ff0052,#ff0050,#ff004e,#ff004c,#ff004a,#ff0049,#ff0047,#ff0045,#ff0044,#ff0042,#ff0040,#ff003f,#ff003e,#ff003c,#ff003b,#ff003a,#ff0038,#ff0037,#ff0036,#ff0035,#ff0034,#ff0033,#ff0032,#ff0031,#ff0030)"></i><i style="left:30px;top:162px;width:558px;background:linear-gradient(90deg,#00c4ff,#00c1ff,#00beff,#00bcff,#00b9ff,#00b7ff,#00b4ff,#00b1ff,#00aeff,#00acff,#00a9ff,#00a6ff,#00a3ff,#00a0ff,#009eff,#009bff,#0098ff,#0095ff,#0092ff,#008fff,#008cff,#0389ff,#1086ff,#1d83ff,#2a80ff,#377cff,#4479ff,#5176ff,#5e73ff,#6c70ff,#796cff,#8769ff,#9566ff,#a362ff,#b15fff,#bf5bff,#ce58ff,#dc54ff,#eb51ff,#fa4dff,#ff47f6,#ff40e9,#ff39dd,#ff34d2,#ff2ec8,#ff29bf,#ff25b6,#ff20ae,#ff1da7,#ff19a0,#ff169a,#ff1294,#ff108f,#ff0d8a,#ff0a85,#ff0880,#ff057c,#ff0378,#ff0174,#ff0071,#ff006d,#ff006a,#ff0067,#ff0064,#ff0061,#ff005e,#ff005c,#ff0059,#ff0057,#ff0055,#ff0053,#ff0050,#ff004e,#ff004d,#ff004b,#ff0049,#ff0047,#ff0046,#ff0044,#ff0042,#ff0041,#ff003f,#ff003e,#ff003d,#ff003b,#ff003a,#ff0039,#ff0038,#ff0037,#ff0035,#ff0034,#ff0033,#ff0032,#ff0031)"></i><i style="left:31px;top:165px;width:552px;background:linear-gradient(90deg,#00beff,#00bbff,#00b8ff,#00b6ff,#00b3ff,#00b1ff,#00aeff,#00abff,#00a9ff,#00a6ff,#00a3ff,#00a0ff,#009eff,#009bff,#0098ff,#0095ff,#0092ff,#008fff,#008cff,#0089ff,#0087ff,#0484ff,#1181ff,#1d7dff,#2a7aff,#3777ff,#4374ff,#5071ff,#5d6eff,#6b6bff,#7867ff,#8564ff,#9361ff,#a05eff,#ae5aff,#bc57ff,#ca53ff,#d850ff,#e74cff,#f549ff,#ff44fb,#ff3ded,#ff37e1,#ff31d6,#ff2ccc,#ff27c3,#ff23ba,#ff1fb2,#ff1bab,#ff17a4,#ff149e,#ff1198,#ff0e92,#ff0b8d,#ff0988,#ff0683,#ff047f,#ff027b,#ff0077,#ff0073,#ff0070,#ff006d,#ff0069,#ff0066,#ff0064,#ff0061,#ff005e,#ff005c,#ff0059,#ff0057,#ff0055,#ff0053,#ff0051,#ff004f,#ff004d,#ff004b,#ff0049,#ff0047,#ff0046,#ff0044,#ff0043,#ff0041,#ff0040,#ff003e,#ff003d,#ff003c,#ff003b,#ff0039,#ff0038,#ff0037,#ff0036,#ff0035,#ff0034)"></i><i style="left:33px;top:168px;width:546px;background:linear-gradient(90deg,#00b7ff,#00b5ff,#00b2ff,#00b0ff,#00adff,#00aaff,#00a8ff,#00a5ff,#00a3ff,#00a0ff,#009dff,#009aff,#0098ff,#0095ff,#0092ff,#008fff,#008cff,#008aff,#0087ff,#0084ff,#0081ff,#077eff,#137bff,#2078ff,#2c75ff,#3872ff,#456fff,#526cff,#5f69ff,#6b65ff,#7862ff,#865fff,#935cff,#a058ff,#ae55ff,#bb52ff,#c94eff,#d74bff,#e548ff,#f344ff,#ff40fd,#ff3af0,#ff33e4,#ff2ed8,#ff29ce,#ff24c5,#ff20bd,#ff1cb5,#ff18ad,#ff15a6,#ff12a0,#ff0f9a,#ff0c94,#ff098f,#ff078a,#ff0486,#ff0281,#ff007d,#ff0079,#ff0076,#ff0072,#ff006f,#ff006b,#ff0068,#ff0066,#ff0063,#ff0060,#ff005e,#ff005b,#ff0059,#ff0057,#ff0054,#ff0052,#ff0050,#ff004e,#ff004d,#ff004b,#ff0049,#ff0047,#ff0046,#ff0044,#ff0043,#ff0041,#ff0040,#ff003f,#ff003d,#ff003c,#ff003b,#ff003a,#ff0038,#ff0037,#ff0036)"></i><i style="left:34px;top:171px;width:546px;background:linear-gradient(90deg,#00b2ff,#00afff,#00adff,#00aaff,#00a8ff,#00a5ff,#00a2ff,#00a0ff,#009dff,#009bff,#0098ff,#0095ff,#0092ff,#0090ff,#008dff,#008aff,#0087ff,#0085ff,#0082ff,#007fff,#007cff,#0879ff,#1476ff,#2073ff,#2c70ff,#386dff,#456aff,#5167ff,#5e64ff,#6a61ff,#775eff,#845bff,#9157ff,#9e54ff,#ab51ff,#b84eff,#c64aff,#d347ff,#e144ff,#ee40ff,#fc3dff,#ff37f4,#ff31e8,#ff2cdd,#ff27d2,#ff22c9,#ff1ec0,#ff1ab8,#ff16b1,#ff13aa,#ff10a3,#ff0d9d,#ff0a98,#ff0892,#ff058d,#ff0389,#ff0184,#ff0080,#ff007c,#ff0078,#ff0075,#ff0071,#ff006e,#ff006b,#ff0068,#ff0065,#ff0062,#ff0060,#ff005d,#ff005b,#ff0059,#ff0057,#ff0054,#ff0052,#ff0050,#ff004f,#ff004d,#ff004b,#ff0049,#ff0048,#ff0046,#ff0045,#ff0043,#ff0042,#ff0040,#ff003f,#ff003e,#ff003c,#ff003b,#ff003a,#ff0039,#ff0038)"></i><i style="left:35px;top:174px;width:540px;background:linear-gradient(90deg,#00acff,#00aaff,#00a7ff,#00a5ff,#00a2ff,#00a0ff,#009dff,#009bff,#0098ff,#0095ff,#0093ff,#0090ff,#008dff,#008bff,#0088ff,#0085ff,#0083ff,#0080ff,#007dff,#007aff,#0077ff,#0974ff,#1572ff,#206fff,#2c6cff,#3869ff,#4466ff,#5063ff,#5d60ff,#695dff,#7559ff,#8256ff,#8f53ff,#9b50ff,#a84dff,#b54aff,#c246ff,#d043ff,#dd40ff,#ea3dff,#f839ff,#ff34f9,#ff2fec,#ff29e1,#ff25d7,#ff20cd,#ff1cc4,#ff18bc,#ff15b4,#ff11ad,#ff0ea7,#ff0ba1,#ff099b,#ff0696,#ff0490,#ff028c,#ff0087,#ff0083,#ff007f,#ff007b,#ff0077,#ff0074,#ff0071,#ff006d,#ff006a,#ff0067,#ff0065,#ff0062,#ff0060,#ff005d,#ff005b,#ff0059,#ff0056,#ff0054,#ff0052,#ff0051,#ff004f,#ff004d,#ff004b,#ff004a,#ff0048,#ff0046,#ff0045,#ff0043,#ff0042,#ff0041,#ff003f,#ff003e,#ff003d,#ff003c,#ff003a)"></i><i style="left:36px;top:177px;width:534px;background:linear-gradient(90deg,#00a7ff,#00a5ff,#00a2ff,#00a0ff,#009dff,#009bff,#0098ff,#0096ff,#0093ff,#0091ff,#008eff,#008bff,#0089ff,#0086ff,#0083ff,#0081ff,#007eff,#007bff,#0078ff,#0076ff,#0073ff,#0a70ff,#156dff,#216aff,#2c67ff,#3864ff,#4461ff,#505eff,#5c5bff,#6858ff,#7455ff,#8052ff,#8d4fff,#994cff,#a649ff,#b246ff,#bf43ff,#cc3fff,#d93cff,#e639ff,#f336ff,#ff32fd,#ff2cf1,#ff27e5,#ff22db,#ff1ed1,#ff1ac8,#ff16c0,#ff13b8,#ff10b1,#ff0daa,#ff0aa4,#ff079e,#ff0599,#ff0293,#ff008f,#ff008a,#ff0086,#ff0082,#ff007e,#ff007a,#ff0076,#ff0073,#ff0070,#ff006d,#ff006a,#ff0067,#ff0064,#ff0062,#ff005f,#ff005d,#ff005b,#ff0059,#ff0056,#ff0054,#ff0052,#ff0051,#ff004f,#ff004d,#ff004b,#ff004a,#ff0048,#ff0047,#ff0045,#ff0044,#ff0042,#ff0041,#ff0040,#ff003e,#ff003d)"></i><i style="left:38px;top:180px;width:534px;background:linear-gradient(90deg,#00a2ff,#009fff,#009dff,#009aff,#0098ff,#0095ff,#0093ff,#0090ff,#008eff,#008bff,#0089ff,#0086ff,#0084ff,#0081ff,#007eff,#007cff,#0079ff,#0076ff,#0073ff,#0071ff,#016eff,#0c6bff,#1868ff,#2365ff,#2e63ff,#3a60ff,#455dff,#515aff,#5d57ff,#6954ff,#7551ff,#814eff,#8d4bff,#9948ff,#a545ff,#b242ff,#be3eff,#cb3bff,#d838ff,#e535ff,#f232ff,#ff2eff,#ff29f3,#ff24e7,#ff20dd,#ff1bd3,#ff17ca,#ff14c2,#ff11ba,#ff0db3,#ff0bac,#ff08a6,#ff05a0,#ff039b,#ff0196,#ff0091,#ff008c,#ff0088,#ff0084,#ff0080,#ff007c,#ff0078,#ff0075,#ff0072,#ff006f,#ff006c,#ff0069,#ff0066,#ff0064,#ff0061,#ff005f,#ff005c,#ff005a,#ff0058,#ff0056,#ff0054,#ff0052,#ff0050,#ff004f,#ff004d,#ff004b,#ff004a,#ff0048,#ff0047,#ff0045,#ff0044,#ff0042,#ff0041,#ff0040,#ff003f)"></i><i style="left:39px;top:183px;width:528px;background:linear-gradient(90deg,#009dff,#009bff,#0098ff,#0096ff,#0093ff,#0091ff,#008eff,#008cff,#0089ff,#0087ff,#0084ff,#0082ff,#007fff,#007dff,#007aff,#0077ff,#0075ff,#0072ff,#006fff,#006dff,#026aff,#0d67ff,#1864ff,#2361ff,#2e5fff,#3a5cff,#4559ff,#5056ff,#5c53ff,#6850ff,#734dff,#7f4aff,#8b47ff,#9744ff,#a341ff,#af3eff,#bb3bff,#c838ff,#d435ff,#e132ff,#ee2eff,#fa2bff,#ff27f7,#ff22eb,#ff1de1,#ff19d7,#ff16ce,#ff12c6,#ff0fbe,#ff0cb7,#ff09b0,#ff06a9,#ff04a3,#ff019e,#ff0099,#ff0094,#ff008f,#ff008a,#ff0086,#ff0082,#ff007e,#ff007b,#ff0077,#ff0074,#ff0071,#ff006e,#ff006b,#ff0068,#ff0066,#ff0063,#ff0061,#ff005f,#ff005c,#ff005a,#ff0058,#ff0056,#ff0054,#ff0052,#ff0050,#ff004f,#ff004d,#ff004b,#ff004a,#ff0048,#ff0047,#ff0045,#ff0044,#ff0043,#ff0041)"></i><i style="left:41px;top:186px;width:522px;background:linear-gradient(90deg,#0098ff,#0096ff,#0093ff,#0091ff,#008eff,#008cff,#0089ff,#0087ff,#0085ff,#0082ff,#0080ff,#007dff,#007aff,#0078ff,#0075ff,#0073ff,#0070ff,#006dff,#006bff,#0068ff,#0565ff,#0f63ff,#1a60ff,#255dff,#305aff,#3b57ff,#4655ff,#5252ff,#5d4fff,#684cff,#7449ff,#7f46ff,#8b43ff,#9740ff,#a33dff,#af3aff,#bb37ff,#c734ff,#d331ff,#df2eff,#ec2bff,#f828ff,#ff24f9,#ff1fee,#ff1be3,#ff17d9,#ff13d0,#ff10c8,#ff0dc0,#ff0ab9,#ff07b2,#ff04ac,#ff02a6,#ff00a0,#ff009b,#ff0096,#ff0091,#ff008d,#ff0088,#ff0084,#ff0080,#ff007d,#ff0079,#ff0076,#ff0073,#ff0070,#ff006d,#ff006a,#ff0068,#ff0065,#ff0063,#ff0060,#ff005e,#ff005c,#ff005a,#ff0058,#ff0056,#ff0054,#ff0052,#ff0050,#ff004f,#ff004d,#ff004b,#ff004a,#ff0048,#ff0047,#ff0045,#ff0044)"></i><i style="left:42px;top:189px;width:516px;background:linear-gradient(90deg,#0093ff,#0091ff,#008fff,#008cff,#008aff,#0088ff,#0085ff,#0083ff,#0080ff,#007eff,#007bff,#0079ff,#0076ff,#0074ff,#0071ff,#006fff,#006cff,#0069ff,#0067ff,#0064ff,#0661ff,#105fff,#1b5cff,#2559ff,#3057ff,#3b54ff,#4651ff,#514eff,#5c4bff,#6749ff,#7346ff,#7e43ff,#8940ff,#953dff,#a03aff,#ac37ff,#b834ff,#c431ff,#d02eff,#dc2bff,#e828ff,#f425ff,#ff21fd,#ff1df2,#ff19e7,#ff15dd,#ff11d4,#ff0ecb,#ff0bc3,#ff08bc,#ff05b5,#ff03af,#ff00a9,#ff00a3,#ff009e,#ff0099,#ff0094,#ff008f,#ff008b,#ff0087,#ff0083,#ff007f,#ff007c,#ff0078,#ff0075,#ff0072,#ff006f,#ff006c,#ff006a,#ff0067,#ff0065,#ff0062,#ff0060,#ff005e,#ff005c,#ff005a,#ff0058,#ff0056,#ff0054,#ff0052,#ff0050,#ff004f,#ff004d,#ff004c,#ff004a,#ff0049,#ff0047)"></i><i style="left:43px;top:192px;width:516px;background:linear-gradient(90deg,#008fff,#008dff,#008aff,#0088ff,#0086ff,#0083ff,#0081ff,#007fff,#007cff,#007aff,#0077ff,#0075ff,#0072ff,#0070ff,#006dff,#006bff,#0068ff,#0066ff,#0063ff,#0060ff,#065eff,#115bff,#1b58ff,#2656ff,#3053ff,#3b50ff,#464eff,#504bff,#5b48ff,#6645ff,#7142ff,#7c3fff,#883dff,#933aff,#9e37ff,#aa34ff,#b531ff,#c12eff,#cd2bff,#d928ff,#e425ff,#f022ff,#fc1fff,#ff1bf6,#ff17eb,#ff13e1,#ff0fd7,#ff0ccf,#ff09c7,#ff06bf,#ff04b8,#ff01b2,#ff00ac,#ff00a6,#ff00a1,#ff009b,#ff0097,#ff0092,#ff008e,#ff0089,#ff0086,#ff0082,#ff007e,#ff007b,#ff0078,#ff0074,#ff0072,#ff006f,#ff006c,#ff0069,#ff0067,#ff0064,#ff0062,#ff0060,#ff005e,#ff005c,#ff005a,#ff0058,#ff0056,#ff0054,#ff0052,#ff0050,#ff004f,#ff004d,#ff004c,#ff004a,#ff0049)"></i><i style="left:45px;top:195px;width:510px;background:linear-gradient(90deg,#008bff,#0088ff,#0086ff,#0084ff,#0081ff,#007fff,#007dff,#007aff,#0078ff,#0075ff,#0073ff,#0070ff,#006eff,#006cff,#0069ff,#0067ff,#0064ff,#0061ff,#005fff,#005cff,#095aff,#1357ff,#1d54ff,#2852ff,#324fff,#3c4cff,#474aff,#5247ff,#5c44ff,#6741ff,#723fff,#7d3cff,#8839ff,#9336ff,#9e33ff,#a930ff,#b52dff,#c02bff,#cc28ff,#d725ff,#e322ff,#ef1fff,#fb1cff,#ff18f8,#ff14ed,#ff10e3,#ff0dda,#ff0ad1,#ff07c9,#ff04c2,#ff02bb,#ff00b4,#ff00ae,#ff00a8,#ff00a3,#ff009d,#ff0099,#ff0094,#ff0090,#ff008b,#ff0087,#ff0084,#ff0080,#ff007d,#ff0079,#ff0076,#ff0073,#ff0070,#ff006e,#ff006b,#ff0068,#ff0066,#ff0064,#ff0061,#ff005f,#ff005d,#ff005b,#ff0059,#ff0057,#ff0055,#ff0054,#ff0052,#ff0050,#ff004f,#ff004d,#ff004c)"></i><i style="left:46px;top:198px;width:504px;background:linear-gradient(90deg,#0087ff,#0084ff,#0082ff,#0080ff,#007dff,#007bff,#0079ff,#0076ff,#0074ff,#0072ff,#006fff,#006dff,#006aff,#0068ff,#0065ff,#0063ff,#0060ff,#005eff,#005bff,#0059ff,#0956ff,#1354ff,#1e51ff,#284eff,#324cff,#3c49ff,#4746ff,#5144ff,#5c41ff,#663eff,#713cff,#7b39ff,#8636ff,#9133ff,#9c30ff,#a72eff,#b22bff,#bd28ff,#c925ff,#d422ff,#e01fff,#eb1cff,#f719ff,#ff16fc,#ff12f1,#ff0ee7,#ff0bdd,#ff08d4,#ff05cc,#ff03c5,#ff00be,#ff00b7,#ff00b1,#ff00ab,#ff00a5,#ff00a0,#ff009b,#ff0097,#ff0092,#ff008e,#ff008a,#ff0086,#ff0083,#ff007f,#ff007c,#ff0079,#ff0075,#ff0073,#ff0070,#ff006d,#ff006b,#ff0068,#ff0066,#ff0063,#ff0061,#ff005f,#ff005d,#ff005b,#ff0059,#ff0057,#ff0055,#ff0054,#ff0052,#ff0050,#ff004f)"></i><i style="left:48px;top:201px;width:498px;background:linear-gradient(90deg,#0082ff,#0080ff,#007eff,#007bff,#0079ff,#0077ff,#0075ff,#0072ff,#0070ff,#006eff,#006bff,#0069ff,#0066ff,#0064ff,#0061ff,#005fff,#005dff,#005aff,#0058ff,#0255ff,#0c52ff,#1650ff,#204dff,#2a4bff,#3448ff,#3e46ff,#4843ff,#5240ff,#5c3eff,#673bff,#7138ff,#7c35ff,#8733ff,#9130ff,#9c2dff,#a72aff,#b227ff,#bd25ff,#c822ff,#d31fff,#de1cff,#ea19ff,#f516ff,#ff13fe,#ff0ff3,#ff0ce9,#ff09df,#ff06d6,#ff03ce,#ff01c7,#ff00c0,#ff00b9,#ff00b3,#ff00ad,#ff00a7,#ff00a2,#ff009d,#ff0099,#ff0094,#ff0090,#ff008c,#ff0088,#ff0084,#ff0081,#ff007d,#ff007a,#ff0077,#ff0074,#ff0071,#ff006f,#ff006c,#ff006a,#ff0067,#ff0065,#ff0063,#ff0061,#ff005e,#ff005c,#ff005b,#ff0059,#ff0057,#ff0055,#ff0053,#ff0052)"></i><i style="left:49px;top:204px;width:498px;background:linear-gradient(90deg,#007eff,#007cff,#007aff,#0078ff,#0075ff,#0073ff,#0071ff,#006fff,#006cff,#006aff,#0068ff,#0065ff,#0063ff,#0060ff,#005eff,#005cff,#0059ff,#0057ff,#0054ff,#0352ff,#0c4fff,#164dff,#204aff,#2a48ff,#3445ff,#3d42ff,#4840ff,#523dff,#5c3bff,#6638ff,#7035ff,#7b33ff,#8530ff,#902dff,#9a2aff,#a528ff,#af25ff,#ba22ff,#c51fff,#d01cff,#db19ff,#e617ff,#f114ff,#fd11ff,#ff0df6,#ff0aec,#ff07e3,#ff04da,#ff01d2,#ff00ca,#ff00c3,#ff00bc,#ff00b6,#ff00b0,#ff00aa,#ff00a5,#ff00a0,#ff009b,#ff0097,#ff0092,#ff008e,#ff008a,#ff0087,#ff0083,#ff0080,#ff007d,#ff0079,#ff0076,#ff0074,#ff0071,#ff006e,#ff006c,#ff0069,#ff0067,#ff0065,#ff0062,#ff0060,#ff005e,#ff005c,#ff005a,#ff0059,#ff0057,#ff0055,#ff0053)"></i><i style="left:50px;top:207px;width:492px;background:linear-gradient(90deg,#007bff,#0079ff,#0076ff,#0074ff,#0072ff,#0070ff,#006dff,#006bff,#0069ff,#0067ff,#0064ff,#0062ff,#0060ff,#005dff,#005bff,#0058ff,#0056ff,#0054ff,#0051ff,#044fff,#0d4cff,#174aff,#2047ff,#2a45ff,#3442ff,#3d40ff,#473dff,#513aff,#5b38ff,#6535ff,#6f33ff,#7930ff,#842dff,#8e2aff,#9828ff,#a325ff,#ad22ff,#b820ff,#c21dff,#cd1aff,#d817ff,#e314ff,#ee11ff,#f90eff,#ff0bfa,#ff08f0,#ff05e6,#ff02dd,#ff00d5,#ff00cd,#ff00c6,#ff00bf,#ff00b9,#ff00b3,#ff00ad,#ff00a8,#ff00a3,#ff009e,#ff0099,#ff0095,#ff0091,#ff008d,#ff0089,#ff0085,#ff0082,#ff007f,#ff007c,#ff0079,#ff0076,#ff0073,#ff0070,#ff006e,#ff006b,#ff0069,#ff0067,#ff0064,#ff0062,#ff0060,#ff005e,#ff005c,#ff005a,#ff0059,#ff0057)"></i><i style="left:52px;top:210px;width:486px;background:linear-gradient(90deg,#0077ff,#0075ff,#0073ff,#0070ff,#006eff,#006cff,#006aff,#0067ff,#0065ff,#0063ff,#0061ff,#005eff,#005cff,#005aff,#0057ff,#0055ff,#0052ff,#0050ff,#004eff,#064bff,#0f49ff,#1946ff,#2244ff,#2b41ff,#353fff,#3f3cff,#483aff,#5237ff,#5c35ff,#6632ff,#702fff,#7a2dff,#842aff,#8e27ff,#9825ff,#a222ff,#ad1fff,#b71dff,#c21aff,#cc17ff,#d714ff,#e212ff,#ec0fff,#f70cff,#ff09fc,#ff06f2,#ff03e8,#ff00df,#ff00d7,#ff00cf,#ff00c8,#ff00c1,#ff00bb,#ff00b5,#ff00af,#ff00aa,#ff00a5,#ff00a0,#ff009b,#ff0097,#ff0093,#ff008f,#ff008b,#ff0087,#ff0084,#ff0080,#ff007d,#ff007a,#ff0077,#ff0075,#ff0072,#ff006f,#ff006d,#ff006a,#ff0068,#ff0066,#ff0064,#ff0062,#ff0060,#ff005e,#ff005c,#ff005a)"></i><i style="left:53px;top:213px;width:486px;background:linear-gradient(90deg,#0073ff,#0071ff,#006fff,#006dff,#006bff,#0069ff,#0066ff,#0064ff,#0062ff,#0060ff,#005dff,#005bff,#0059ff,#0056ff,#0054ff,#0052ff,#004fff,#004dff,#004bff,#0748ff,#1046ff,#1943ff,#2241ff,#2c3fff,#353cff,#3e3aff,#4837ff,#5234ff,#5b32ff,#652fff,#6f2dff,#792aff,#8228ff,#8c25ff,#9622ff,#a120ff,#ab1dff,#b51aff,#bf18ff,#ca15ff,#d412ff,#df0fff,#e90dff,#f40aff,#fe07ff,#ff04f5,#ff01ec,#ff00e3,#ff00da,#ff00d2,#ff00cb,#ff00c4,#ff00be,#ff00b8,#ff00b2,#ff00ac,#ff00a7,#ff00a2,#ff009e,#ff0099,#ff0095,#ff0091,#ff008d,#ff008a,#ff0086,#ff0083,#ff007f,#ff007c,#ff0079,#ff0077,#ff0074,#ff0071,#ff006f,#ff006c,#ff006a,#ff0068,#ff0066,#ff0063,#ff0061,#ff005f,#ff005e,#ff005c)"></i><i style="left:55px;top:216px;width:480px;background:linear-gradient(90deg,#0070ff,#006eff,#006bff,#0069ff,#0067ff,#0065ff,#0063ff,#0061ff,#005eff,#005cff,#005aff,#0058ff,#0055ff,#0053ff,#0051ff,#004eff,#004cff,#004aff,#0047ff,#0945ff,#1243ff,#1b40ff,#243eff,#2d3bff,#3639ff,#4036ff,#4934ff,#5331ff,#5c2fff,#662cff,#6f2aff,#7927ff,#8325ff,#8d22ff,#9620ff,#a01dff,#aa1aff,#b418ff,#bf15ff,#c912ff,#d310ff,#dd0dff,#e80aff,#f207ff,#fd05ff,#ff02f7,#ff00ed,#ff00e4,#ff00dc,#ff00d4,#ff00cd,#ff00c6,#ff00bf,#ff00b9,#ff00b4,#ff00ae,#ff00a9,#ff00a4,#ff009f,#ff009b,#ff0097,#ff0093,#ff008f,#ff008b,#ff0088,#ff0084,#ff0081,#ff007e,#ff007b,#ff0078,#ff0075,#ff0073,#ff0070,#ff006e,#ff006b,#ff0069,#ff0067,#ff0065,#ff0063,#ff0061,#ff005f)"></i><i style="left:57px;top:219px;width:474px;background:linear-gradient(90deg,#006cff,#006aff,#0068ff,#0066ff,#0064ff,#0061ff,#005fff,#005dff,#005bff,#0059ff,#0056ff,#0054ff,#0052ff,#0050ff,#004dff,#004bff,#0049ff,#0047ff,#0244ff,#0b42ff,#1440ff,#1d3dff,#263bff,#2f38ff,#3836ff,#4133ff,#4a31ff,#542fff,#5d2cff,#662aff,#7027ff,#7925ff,#8322ff,#8d1fff,#961dff,#a01aff,#aa18ff,#b415ff,#be12ff,#c810ff,#d20dff,#dc0aff,#e608ff,#f105ff,#fb02ff,#ff00f9,#ff00ef,#ff00e6,#ff00de,#ff00d6,#ff00cf,#ff00c8,#ff00c1,#ff00bb,#ff00b5,#ff00b0,#ff00ab,#ff00a6,#ff00a1,#ff009d,#ff0098,#ff0094,#ff0091,#ff008d,#ff0089,#ff0086,#ff0083,#ff0080,#ff007d,#ff007a,#ff0077,#ff0074,#ff0072,#ff006f,#ff006d,#ff006b,#ff0068,#ff0066,#ff0064,#ff0062)"></i><i style="left:58px;top:222px;width:468px;background:linear-gradient(90deg,#0069ff,#0067ff,#0065ff,#0063ff,#0061ff,#005eff,#005cff,#005aff,#0058ff,#0056ff,#0054ff,#0051ff,#004fff,#004dff,#004bff,#0048ff,#0046ff,#0044ff,#0342ff,#0b3fff,#143dff,#1d3bff,#2638ff,#2f36ff,#3833ff,#4131ff,#4a2fff,#532cff,#5c2aff,#6627ff,#6f25ff,#7822ff,#8220ff,#8b1dff,#951bff,#9e18ff,#a816ff,#b213ff,#bc10ff,#c50eff,#cf0bff,#d908ff,#e306ff,#ed03ff,#f800ff,#ff00fc,#ff00f2,#ff00e9,#ff00e1,#ff00d9,#ff00d2,#ff00cb,#ff00c4,#ff00be,#ff00b8,#ff00b3,#ff00ad,#ff00a8,#ff00a4,#ff009f,#ff009b,#ff0097,#ff0093,#ff008f,#ff008c,#ff0088,#ff0085,#ff0082,#ff007f,#ff007c,#ff0079,#ff0076,#ff0074,#ff0071,#ff006f,#ff006d,#ff006a,#ff0068,#ff0066)"></i><i style="left:60px;top:225px;width:468px;background:linear-gradient(90deg,#0066ff,#0064ff,#0062ff,#005fff,#005dff,#005bff,#0059ff,#0057ff,#0055ff,#0053ff,#0050ff,#004eff,#004cff,#004aff,#0048ff,#0045ff,#0043ff,#0041ff,#053fff,#0d3cff,#163aff,#1f38ff,#2735ff,#3033ff,#3931ff,#422eff,#4b2cff,#5429ff,#5d27ff,#6625ff,#6f22ff,#7920ff,#821dff,#8b1bff,#9518ff,#9e16ff,#a813ff,#b111ff,#bb0eff,#c50bff,#ce09ff,#d806ff,#e204ff,#ec01ff,#f600ff,#ff00fe,#ff00f4,#ff00eb,#ff00e3,#ff00db,#ff00d3,#ff00cd,#ff00c6,#ff00c0,#ff00ba,#ff00b4,#ff00af,#ff00aa,#ff00a5,#ff00a1,#ff009d,#ff0098,#ff0095,#ff0091,#ff008d,#ff008a,#ff0086,#ff0083,#ff0080,#ff007d,#ff007b,#ff0078,#ff0075,#ff0073,#ff0070,#ff006e,#ff006c,#ff006a,#ff0067)"></i><i style="left:61px;top:228px;width:462px;background:linear-gradient(90deg,#0063ff,#0061ff,#005fff,#005dff,#005aff,#0058ff,#0056ff,#0054ff,#0052ff,#0050ff,#004eff,#004cff,#0049ff,#0047ff,#0045ff,#0043ff,#0041ff,#003eff,#053cff,#0e3aff,#1637ff,#1f35ff,#2833ff,#3031ff,#392eff,#422cff,#4b2aff,#5327ff,#5c25ff,#6522ff,#6e20ff,#781dff,#811bff,#8a19ff,#9316ff,#9c14ff,#a611ff,#af0fff,#b90cff,#c209ff,#cc07ff,#d604ff,#df02ff,#e900ff,#f300ff,#fd00ff,#ff00f7,#ff00ee,#ff00e6,#ff00de,#ff00d6,#ff00cf,#ff00c9,#ff00c3,#ff00bd,#ff00b7,#ff00b2,#ff00ad,#ff00a8,#ff00a3,#ff009f,#ff009b,#ff0097,#ff0093,#ff008f,#ff008c,#ff0089,#ff0085,#ff0082,#ff007f,#ff007d,#ff007a,#ff0077,#ff0075,#ff0072,#ff0070,#ff006e,#ff006b)"></i><i style="left:63px;top:231px;width:456px;background:linear-gradient(90deg,#005fff,#005dff,#005bff,#0059ff,#0057ff,#0055ff,#0053ff,#0051ff,#004fff,#004dff,#004bff,#0049ff,#0046ff,#0044ff,#0042ff,#0040ff,#003eff,#003bff,#0739ff,#1037ff,#1835ff,#2132ff,#2930ff,#322eff,#3a2cff,#4329ff,#4c27ff,#5425ff,#5d22ff,#6620ff,#6f1dff,#781bff,#8119ff,#8a16ff,#9314ff,#9c11ff,#a60fff,#af0cff,#b80aff,#c207ff,#cb05ff,#d502ff,#de00ff,#e800ff,#f100ff,#fb00ff,#ff00f9,#ff00f0,#ff00e8,#ff00e0,#ff00d8,#ff00d1,#ff00cb,#ff00c4,#ff00be,#ff00b9,#ff00b3,#ff00ae,#ff00aa,#ff00a5,#ff00a1,#ff009c,#ff0098,#ff0095,#ff0091,#ff008e,#ff008a,#ff0087,#ff0084,#ff0081,#ff007e,#ff007b,#ff0079,#ff0076,#ff0074,#ff0071,#ff006f)"></i><i style="left:64px;top:234px;width:450px;background:linear-gradient(90deg,#005dff,#005bff,#0059ff,#0057ff,#0055ff,#0053ff,#0050ff,#004eff,#004cff,#004aff,#0048ff,#0046ff,#0044ff,#0042ff,#0040ff,#003dff,#003bff,#0039ff,#0837ff,#1035ff,#1932ff,#2130ff,#292eff,#322cff,#3a29ff,#4327ff,#4b25ff,#5422ff,#5d20ff,#651eff,#6e1bff,#7719ff,#8017ff,#8914ff,#9212ff,#9b0fff,#a40dff,#ad0aff,#b608ff,#bf05ff,#c903ff,#d200ff,#db00ff,#e500ff,#ee00ff,#f800ff,#ff00fc,#ff00f3,#ff00eb,#ff00e3,#ff00db,#ff00d4,#ff00cd,#ff00c7,#ff00c1,#ff00bb,#ff00b6,#ff00b1,#ff00ac,#ff00a7,#ff00a3,#ff009f,#ff009b,#ff0097,#ff0093,#ff0090,#ff008c,#ff0089,#ff0086,#ff0083,#ff0080,#ff007d,#ff007b,#ff0078,#ff0075,#ff0073)"></i><i style="left:66px;top:237px;width:450px;background:linear-gradient(90deg,#005aff,#0058ff,#0056ff,#0054ff,#0052ff,#0050ff,#004eff,#004bff,#0049ff,#0047ff,#0045ff,#0043ff,#0041ff,#003fff,#003dff,#003bff,#0038ff,#0236ff,#0a34ff,#1232ff,#1a30ff,#232eff,#2b2bff,#3329ff,#3b27ff,#4425ff,#4c22ff,#5520ff,#5d1eff,#661bff,#6f19ff,#7717ff,#8014ff,#8912ff,#9210ff,#9b0dff,#a40bff,#ad08ff,#b606ff,#bf03ff,#c801ff,#d100ff,#da00ff,#e400ff,#ed00ff,#f600ff,#ff00fe,#ff00f5,#ff00ec,#ff00e4,#ff00dd,#ff00d6,#ff00cf,#ff00c9,#ff00c3,#ff00bd,#ff00b8,#ff00b2,#ff00ae,#ff00a9,#ff00a5,#ff00a0,#ff009c,#ff0098,#ff0095,#ff0091,#ff008e,#ff008b,#ff0087,#ff0084,#ff0081,#ff007f,#ff007c,#ff0079,#ff0077,#ff0074)"></i><i style="left:68px;top:240px;width:444px;background:linear-gradient(90deg,#0057ff,#0055ff,#0053ff,#0051ff,#004fff,#004dff,#004bff,#0049ff,#0047ff,#0045ff,#0042ff,#0040ff,#003eff,#003cff,#003aff,#0038ff,#0036ff,#0434ff,#0c32ff,#142fff,#1c2dff,#242bff,#2c29ff,#3427ff,#3d24ff,#4522ff,#4d20ff,#561eff,#5e1bff,#6719ff,#6f17ff,#7814ff,#8012ff,#8910ff,#920dff,#9a0bff,#a309ff,#ac06ff,#b504ff,#be01ff,#c700ff,#d000ff,#d900ff,#e300ff,#ec00ff,#f500ff,#fe00ff,#ff00f6,#ff00ee,#ff00e6,#ff00de,#ff00d7,#ff00d1,#ff00ca,#ff00c4,#ff00bf,#ff00b9,#ff00b4,#ff00af,#ff00ab,#ff00a6,#ff00a2,#ff009e,#ff009a,#ff0096,#ff0093,#ff008f,#ff008c,#ff0089,#ff0086,#ff0083,#ff0080,#ff007d,#ff007b,#ff0078)"></i><i style="left:69px;top:243px;width:438px;background:linear-gradient(90deg,#0054ff,#0052ff,#0050ff,#004eff,#004cff,#004aff,#0048ff,#0046ff,#0044ff,#0042ff,#0040ff,#003eff,#003cff,#003aff,#0038ff,#0036ff,#0034ff,#0532ff,#0c2fff,#142dff,#1c2bff,#2429ff,#2c27ff,#3425ff,#3d22ff,#4520ff,#4d1eff,#551cff,#5d19ff,#6617ff,#6e15ff,#7713ff,#7f10ff,#880eff,#900cff,#9909ff,#a207ff,#aa05ff,#b302ff,#bc00ff,#c500ff,#ce00ff,#d700ff,#e000ff,#e900ff,#f200ff,#fb00ff,#ff00fa,#ff00f1,#ff00e9,#ff00e1,#ff00da,#ff00d3,#ff00cd,#ff00c7,#ff00c1,#ff00bc,#ff00b7,#ff00b2,#ff00ad,#ff00a8,#ff00a4,#ff00a0,#ff009c,#ff0098,#ff0095,#ff0091,#ff008e,#ff008b,#ff0088,#ff0085,#ff0082,#ff007f,#ff007d)"></i><i style="left:71px;top:246px;width:432px;background:linear-gradient(90deg,#0051ff,#004fff,#004dff,#004bff,#004aff,#0048ff,#0046ff,#0044ff,#0042ff,#0040ff,#003dff,#003bff,#0039ff,#0037ff,#0035ff,#0033ff,#0031ff,#062fff,#0e2dff,#162bff,#1e29ff,#2626ff,#2e24ff,#3622ff,#3e20ff,#461eff,#4e1cff,#5619ff,#5e17ff,#6615ff,#6f13ff,#7710ff,#7f0eff,#880cff,#9009ff,#9907ff,#a105ff,#aa03ff,#b300ff,#bb00ff,#c400ff,#cd00ff,#d600ff,#df00ff,#e800ff,#f100ff,#fa00ff,#ff00fb,#ff00f3,#ff00ea,#ff00e3,#ff00dc,#ff00d5,#ff00cf,#ff00c9,#ff00c3,#ff00bd,#ff00b8,#ff00b3,#ff00af,#ff00aa,#ff00a6,#ff00a2,#ff009e,#ff009a,#ff0096,#ff0093,#ff0090,#ff008c,#ff0089,#ff0086,#ff0083,#ff0081)"></i><i style="left:73px;top:249px;width:432px;background:linear-gradient(90deg,#004fff,#004dff,#004bff,#0049ff,#0047ff,#0045ff,#0043ff,#0041ff,#003fff,#003dff,#003bff,#0039ff,#0037ff,#0035ff,#0033ff,#0031ff,#012fff,#082dff,#102aff,#1828ff,#1f26ff,#2724ff,#2f22ff,#3720ff,#3f1eff,#471cff,#4f19ff,#5717ff,#5f15ff,#6713ff,#6f11ff,#770eff,#800cff,#880aff,#9007ff,#9905ff,#a103ff,#aa01ff,#b200ff,#bb00ff,#c400ff,#cc00ff,#d500ff,#de00ff,#e700ff,#ef00ff,#f800ff,#ff00fd,#ff00f4,#ff00ec,#ff00e4,#ff00dd,#ff00d7,#ff00d0,#ff00ca,#ff00c4,#ff00bf,#ff00ba,#ff00b5,#ff00b0,#ff00ac,#ff00a7,#ff00a3,#ff009f,#ff009b,#ff0098,#ff0094,#ff0091,#ff008e,#ff008b,#ff0088,#ff0085,#ff0082)"></i><i style="left:75px;top:252px;width:426px;background:linear-gradient(90deg,#004cff,#004aff,#0048ff,#0046ff,#0044ff,#0042ff,#0040ff,#003eff,#003cff,#003aff,#0038ff,#0036ff,#0034ff,#0032ff,#0030ff,#002eff,#022cff,#0a2aff,#1228ff,#1926ff,#2124ff,#2922ff,#3020ff,#381eff,#401bff,#4819ff,#5017ff,#5815ff,#6013ff,#6811ff,#700eff,#780cff,#800aff,#8808ff,#9005ff,#9903ff,#a101ff,#a900ff,#b200ff,#ba00ff,#c300ff,#cb00ff,#d400ff,#dd00ff,#e500ff,#ee00ff,#f700ff,#ff00fe,#ff00f6,#ff00ee,#ff00e6,#ff00df,#ff00d8,#ff00d2,#ff00cc,#ff00c6,#ff00c0,#ff00bb,#ff00b6,#ff00b2,#ff00ad,#ff00a9,#ff00a5,#ff00a1,#ff009d,#ff0099,#ff0096,#ff0092,#ff008f,#ff008c,#ff0089,#ff0086)"></i><i style="left:76px;top:255px;width:420px;background:linear-gradient(90deg,#004aff,#0048ff,#0046ff,#0044ff,#0042ff,#0040ff,#003eff,#003cff,#003aff,#0038ff,#0036ff,#0034ff,#0032ff,#0030ff,#002eff,#002cff,#032aff,#0b28ff,#1226ff,#1a24ff,#2122ff,#2920ff,#301eff,#381cff,#401aff,#4718ff,#4f15ff,#5713ff,#5f11ff,#670fff,#6f0dff,#770bff,#7f08ff,#8706ff,#8f04ff,#9702ff,#a000ff,#a800ff,#b000ff,#b800ff,#c100ff,#c900ff,#d200ff,#da00ff,#e300ff,#ec00ff,#f400ff,#fd00ff,#ff00f8,#ff00f0,#ff00e9,#ff00e2,#ff00db,#ff00d4,#ff00ce,#ff00c8,#ff00c3,#ff00be,#ff00b9,#ff00b4,#ff00af,#ff00ab,#ff00a7,#ff00a3,#ff009f,#ff009b,#ff0098,#ff0094,#ff0091,#ff008e,#ff008b)"></i><i style="left:78px;top:258px;width:414px;background:linear-gradient(90deg,#0047ff,#0045ff,#0043ff,#0041ff,#003fff,#003eff,#003cff,#003aff,#0038ff,#0036ff,#0034ff,#0032ff,#0030ff,#002eff,#002cff,#002aff,#0528ff,#0c26ff,#1424ff,#1b22ff,#2320ff,#2a1eff,#321cff,#391aff,#4118ff,#4815ff,#5013ff,#5811ff,#600fff,#680dff,#6f0bff,#7709ff,#7f06ff,#8704ff,#8f02ff,#9700ff,#9f00ff,#a800ff,#b000ff,#b800ff,#c000ff,#c900ff,#d100ff,#d900ff,#e200ff,#ea00ff,#f300ff,#fb00ff,#ff00fa,#ff00f2,#ff00ea,#ff00e3,#ff00dc,#ff00d6,#ff00d0,#ff00ca,#ff00c4,#ff00bf,#ff00ba,#ff00b5,#ff00b1,#ff00ac,#ff00a8,#ff00a4,#ff00a0,#ff009d,#ff0099,#ff0096,#ff0093,#ff008f)"></i><i style="left:80px;top:261px;width:408px;background:linear-gradient(90deg,#0045ff,#0043ff,#0041ff,#003fff,#003dff,#003bff,#0039ff,#0037ff,#0035ff,#0034ff,#0032ff,#0030ff,#002eff,#002cff,#002aff,#0028ff,#0726ff,#0e24ff,#1522ff,#1d20ff,#241eff,#2b1cff,#331aff,#3a18ff,#4216ff,#4913ff,#5111ff,#590fff,#600dff,#680bff,#7009ff,#7807ff,#7f05ff,#8702ff,#8f00ff,#9700ff,#9f00ff,#a700ff,#af00ff,#b700ff,#c000ff,#c800ff,#d000ff,#d800ff,#e100ff,#e900ff,#f200ff,#fa00ff,#ff00fb,#ff00f3,#ff00ec,#ff00e5,#ff00de,#ff00d7,#ff00d1,#ff00cb,#ff00c6,#ff00c1,#ff00bc,#ff00b7,#ff00b2,#ff00ae,#ff00aa,#ff00a6,#ff00a2,#ff009e,#ff009b,#ff0097,#ff0094)"></i><i style="left:81px;top:264px;width:408px;background:linear-gradient(90deg,#0042ff,#0041ff,#003fff,#003dff,#003bff,#0039ff,#0037ff,#0035ff,#0033ff,#0032ff,#0030ff,#002eff,#002cff,#002aff,#0028ff,#0026ff,#0724ff,#0e22ff,#1620ff,#1d1eff,#241cff,#2b1aff,#3318ff,#3a16ff,#4214ff,#4912ff,#5110ff,#580eff,#600cff,#6709ff,#6f07ff,#7705ff,#7e03ff,#8601ff,#8e00ff,#9600ff,#9e00ff,#a600ff,#ae00ff,#b600ff,#be00ff,#c600ff,#ce00ff,#d600ff,#de00ff,#e700ff,#ef00ff,#f700ff,#ff00fe,#ff00f6,#ff00ee,#ff00e7,#ff00e0,#ff00da,#ff00d4,#ff00ce,#ff00c8,#ff00c3,#ff00be,#ff00b9,#ff00b5,#ff00b0,#ff00ac,#ff00a8,#ff00a4,#ff00a0,#ff009d,#ff0099,#ff0096)"></i><i style="left:83px;top:267px;width:402px;background:linear-gradient(90deg,#0040ff,#003eff,#003cff,#003bff,#0039ff,#0037ff,#0035ff,#0033ff,#0031ff,#002fff,#002dff,#002cff,#002aff,#0028ff,#0026ff,#0224ff,#0922ff,#1020ff,#171eff,#1e1cff,#251aff,#2d18ff,#3416ff,#3b14ff,#4312ff,#4a10ff,#510eff,#590cff,#600aff,#6808ff,#6f06ff,#7703ff,#7f01ff,#8600ff,#8e00ff,#9600ff,#9e00ff,#a500ff,#ad00ff,#b500ff,#bd00ff,#c500ff,#cd00ff,#d500ff,#dd00ff,#e600ff,#ee00ff,#f600ff,#fe00ff,#ff00f8,#ff00f0,#ff00e9,#ff00e2,#ff00db,#ff00d5,#ff00cf,#ff00ca,#ff00c4,#ff00bf,#ff00bb,#ff00b6,#ff00b2,#ff00ad,#ff00a9,#ff00a5,#ff00a2,#ff009e,#ff009b)"></i><i style="left:85px;top:270px;width:396px;background:linear-gradient(90deg,#003eff,#003cff,#003aff,#0038ff,#0036ff,#0035ff,#0033ff,#0031ff,#002fff,#002dff,#002bff,#0029ff,#0028ff,#0026ff,#0024ff,#0422ff,#0b20ff,#121eff,#191cff,#201aff,#2718ff,#2e16ff,#3514ff,#3c12ff,#4410ff,#4b0eff,#520cff,#5a0aff,#6108ff,#6806ff,#7004ff,#7702ff,#7f00ff,#8700ff,#8e00ff,#9600ff,#9e00ff,#a500ff,#ad00ff,#b500ff,#bd00ff,#c500ff,#cd00ff,#d400ff,#dd00ff,#e500ff,#ed00ff,#f500ff,#fd00ff,#ff00f9,#ff00f1,#ff00ea,#ff00e3,#ff00dd,#ff00d7,#ff00d1,#ff00cb,#ff00c6,#ff00c1,#ff00bc,#ff00b7,#ff00b3,#ff00af,#ff00ab,#ff00a7,#ff00a3,#ff009f)"></i><i style="left:87px;top:273px;width:390px;background:linear-gradient(90deg,#003bff,#003aff,#0038ff,#0036ff,#0034ff,#0032ff,#0031ff,#002fff,#002dff,#002bff,#0029ff,#0027ff,#0025ff,#0024ff,#0022ff,#0520ff,#0c1eff,#131cff,#1a1aff,#2118ff,#2816ff,#2f14ff,#3612ff,#3d10ff,#450eff,#4c0cff,#530aff,#5a08ff,#6206ff,#6904ff,#7002ff,#7800ff,#7f00ff,#8700ff,#8e00ff,#9600ff,#9d00ff,#a500ff,#ad00ff,#b400ff,#bc00ff,#c400ff,#cc00ff,#d400ff,#dc00ff,#e400ff,#ec00ff,#f400ff,#fc00ff,#ff00fa,#ff00f3,#ff00ec,#ff00e5,#ff00de,#ff00d8,#ff00d2,#ff00cd,#ff00c7,#ff00c2,#ff00bd,#ff00b9,#ff00b4,#ff00b0,#ff00ac,#ff00a8,#ff00a4)"></i><i style="left:89px;top:276px;width:384px;background:linear-gradient(90deg,#0039ff,#0037ff,#0036ff,#0034ff,#0032ff,#0030ff,#002eff,#002dff,#002bff,#0029ff,#0027ff,#0025ff,#0023ff,#0022ff,#0020ff,#071eff,#0e1cff,#151aff,#1c18ff,#2216ff,#2914ff,#3012ff,#3710ff,#3e0eff,#460cff,#4d0aff,#5408ff,#5b06ff,#6204ff,#6902ff,#7100ff,#7800ff,#7f00ff,#8700ff,#8e00ff,#9600ff,#9d00ff,#a500ff,#ac00ff,#b400ff,#bc00ff,#c300ff,#cb00ff,#d300ff,#db00ff,#e300ff,#ea00ff,#f200ff,#fa00ff,#ff00fc,#ff00f4,#ff00ed,#ff00e6,#ff00e0,#ff00d9,#ff00d4,#ff00ce,#ff00c9,#ff00c4,#ff00bf,#ff00ba,#ff00b6,#ff00b2,#ff00ad,#ff00aa)"></i><i style="left:90px;top:279px;width:384px;background:linear-gradient(90deg,#0037ff,#0036ff,#0034ff,#0032ff,#0030ff,#002eff,#002dff,#002bff,#0029ff,#0027ff,#0025ff,#0024ff,#0022ff,#0020ff,#011eff,#071cff,#0e1aff,#1518ff,#1c16ff,#2315ff,#2913ff,#3011ff,#370fff,#3e0dff,#450bff,#4c09ff,#5307ff,#5a05ff,#6203ff,#6901ff,#7000ff,#7700ff,#7e00ff,#8600ff,#8d00ff,#9500ff,#9c00ff,#a300ff,#ab00ff,#b200ff,#ba00ff,#c200ff,#c900ff,#d100ff,#d900ff,#e000ff,#e800ff,#f000ff,#f800ff,#ff00fe,#ff00f7,#ff00ef,#ff00e9,#ff00e2,#ff00dc,#ff00d6,#ff00d0,#ff00cb,#ff00c6,#ff00c1,#ff00bc,#ff00b8,#ff00b4,#ff00b0,#ff00ac)"></i><i style="left:92px;top:282px;width:378px;background:linear-gradient(90deg,#0035ff,#0033ff,#0032ff,#0030ff,#002eff,#002cff,#002bff,#0029ff,#0027ff,#0025ff,#0023ff,#0022ff,#0020ff,#001eff,#021cff,#091aff,#1018ff,#1617ff,#1d15ff,#2413ff,#2b11ff,#320fff,#380dff,#3f0bff,#4609ff,#4d07ff,#5405ff,#5b03ff,#6201ff,#6900ff,#7000ff,#7800ff,#7f00ff,#8600ff,#8d00ff,#9500ff,#9c00ff,#a300ff,#ab00ff,#b200ff,#b900ff,#c100ff,#c900ff,#d000ff,#d800ff,#df00ff,#e700ff,#ef00ff,#f700ff,#fe00ff,#ff00f8,#ff00f1,#ff00ea,#ff00e3,#ff00dd,#ff00d7,#ff00d2,#ff00cc,#ff00c7,#ff00c2,#ff00be,#ff00b9,#ff00b5,#ff00b1)"></i><i style="left:94px;top:285px;width:372px;background:linear-gradient(90deg,#0033ff,#0031ff,#0030ff,#002eff,#002cff,#002aff,#0029ff,#0027ff,#0025ff,#0023ff,#0021ff,#0020ff,#001eff,#001cff,#041aff,#0b18ff,#1117ff,#1815ff,#1e13ff,#2511ff,#2c0fff,#330dff,#390bff,#4009ff,#4707ff,#4e06ff,#5504ff,#5c02ff,#6300ff,#6a00ff,#7100ff,#7800ff,#7f00ff,#8600ff,#8d00ff,#9500ff,#9c00ff,#a300ff,#aa00ff,#b200ff,#b900ff,#c000ff,#c800ff,#cf00ff,#d700ff,#de00ff,#e600ff,#ee00ff,#f500ff,#fd00ff,#ff00f9,#ff00f2,#ff00eb,#ff00e5,#ff00df,#ff00d9,#ff00d3,#ff00ce,#ff00c9,#ff00c4,#ff00bf,#ff00bb,#ff00b6)"></i><i style="left:96px;top:288px;width:366px;background:linear-gradient(90deg,#0031ff,#002fff,#002eff,#002cff,#002aff,#0028ff,#0027ff,#0025ff,#0023ff,#0021ff,#0020ff,#001eff,#001cff,#001aff,#0618ff,#0c17ff,#1315ff,#1913ff,#2011ff,#260fff,#2d0dff,#340bff,#3a0aff,#4108ff,#4806ff,#4f04ff,#5602ff,#5c00ff,#6300ff,#6a00ff,#7100ff,#7800ff,#7f00ff,#8600ff,#8d00ff,#9500ff,#9c00ff,#a300ff,#aa00ff,#b100ff,#b900ff,#c000ff,#c700ff,#cf00ff,#d600ff,#de00ff,#e500ff,#ed00ff,#f400ff,#fc00ff,#ff00fb,#ff00f3,#ff00ed,#ff00e6,#ff00e0,#ff00da,#ff00d4,#ff00cf,#ff00ca,#ff00c5,#ff00c0,#ff00bc)"></i><i style="left:98px;top:291px;width:366px;background:linear-gradient(90deg,#002fff,#002dff,#002cff,#002aff,#0028ff,#0026ff,#0025ff,#0023ff,#0021ff,#0020ff,#001eff,#001cff,#001aff,#0118ff,#0717ff,#0e15ff,#1413ff,#1b11ff,#210fff,#280eff,#2e0cff,#350aff,#3b08ff,#4206ff,#4904ff,#5002ff,#5600ff,#5d00ff,#6400ff,#6b00ff,#7200ff,#7900ff,#7f00ff,#8600ff,#8d00ff,#9400ff,#9c00ff,#a300ff,#aa00ff,#b100ff,#b800ff,#bf00ff,#c700ff,#ce00ff,#d500ff,#dd00ff,#e400ff,#ec00ff,#f300ff,#fb00ff,#ff00fc,#ff00f5,#ff00ee,#ff00e7,#ff00e1,#ff00db,#ff00d6,#ff00d0,#ff00cb,#ff00c6,#ff00c2,#ff00bd)"></i><i style="left:99px;top:294px;width:360px;background:linear-gradient(90deg,#002dff,#002cff,#002aff,#0028ff,#0027ff,#0025ff,#0023ff,#0021ff,#0020ff,#001eff,#001cff,#001aff,#0019ff,#0117ff,#0815ff,#0e13ff,#1412ff,#1b10ff,#210eff,#280cff,#2e0aff,#3508ff,#3b07ff,#4205ff,#4903ff,#4f01ff,#5600ff,#5d00ff,#6300ff,#6a00ff,#7100ff,#7800ff,#7f00ff,#8500ff,#8c00ff,#9300ff,#9a00ff,#a100ff,#a800ff,#af00ff,#b700ff,#be00ff,#c500ff,#cc00ff,#d300ff,#db00ff,#e200ff,#e900ff,#f100ff,#f800ff,#ff00fe,#ff00f7,#ff00f0,#ff00ea,#ff00e4,#ff00de,#ff00d8,#ff00d3,#ff00cd,#ff00c9,#ff00c4)"></i><i style="left:101px;top:297px;width:354px;background:linear-gradient(90deg,#002bff,#002aff,#0028ff,#0026ff,#0025ff,#0023ff,#0021ff,#0020ff,#001eff,#001cff,#001aff,#0019ff,#0017ff,#0315ff,#0913ff,#0f12ff,#1610ff,#1c0eff,#220cff,#290bff,#2f09ff,#3607ff,#3c05ff,#4303ff,#4901ff,#5000ff,#5700ff,#5d00ff,#6400ff,#6b00ff,#7100ff,#7800ff,#7f00ff,#8600ff,#8c00ff,#9300ff,#9a00ff,#a100ff,#a800ff,#af00ff,#b600ff,#bd00ff,#c400ff,#cb00ff,#d300ff,#da00ff,#e100ff,#e800ff,#f000ff,#f700ff,#fe00ff,#ff00f8,#ff00f2,#ff00eb,#ff00e5,#ff00df,#ff00d9,#ff00d4,#ff00cf,#ff00ca)"></i><i style="left:103px;top:300px;width:348px;background:linear-gradient(90deg,#002aff,#0028ff,#0026ff,#0025ff,#0023ff,#0021ff,#0020ff,#001eff,#001cff,#001aff,#0019ff,#0017ff,#0015ff,#0414ff,#0b12ff,#1110ff,#170eff,#1d0cff,#240bff,#2a09ff,#3007ff,#3705ff,#3d04ff,#4402ff,#4a00ff,#5100ff,#5700ff,#5e00ff,#6400ff,#6b00ff,#7200ff,#7800ff,#7f00ff,#8600ff,#8d00ff,#9300ff,#9a00ff,#a100ff,#a800ff,#af00ff,#b600ff,#bd00ff,#c400ff,#cb00ff,#d200ff,#d900ff,#e000ff,#e700ff,#ef00ff,#f600ff,#fd00ff,#ff00fa,#ff00f3,#ff00ec,#ff00e6,#ff00e0,#ff00db,#ff00d5,#ff00d0)"></i><i style="left:105px;top:303px;width:342px;background:linear-gradient(90deg,#0028ff,#0026ff,#0024ff,#0023ff,#0021ff,#001fff,#001eff,#001cff,#001aff,#0019ff,#0017ff,#0015ff,#0014ff,#0612ff,#0c10ff,#120eff,#180dff,#1f0bff,#2509ff,#2b07ff,#3106ff,#3804ff,#3e02ff,#4500ff,#4b00ff,#5100ff,#5800ff,#5e00ff,#6500ff,#6b00ff,#7200ff,#7900ff,#7f00ff,#8600ff,#8d00ff,#9300ff,#9a00ff,#a100ff,#a800ff,#af00ff,#b500ff,#bc00ff,#c300ff,#ca00ff,#d100ff,#d800ff,#df00ff,#e600ff,#ee00ff,#f500ff,#fc00ff,#ff00fb,#ff00f4,#ff00ee,#ff00e7,#ff00e2,#ff00dc,#ff00d6)"></i><i style="left:107px;top:306px;width:342px;background:linear-gradient(90deg,#0026ff,#0024ff,#0023ff,#0021ff,#001fff,#001eff,#001cff,#001aff,#0019ff,#0017ff,#0015ff,#0014ff,#0112ff,#0710ff,#0d0fff,#140dff,#1a0bff,#2009ff,#2608ff,#2c06ff,#3204ff,#3902ff,#3f01ff,#4500ff,#4c00ff,#5200ff,#5800ff,#5f00ff,#6500ff,#6c00ff,#7200ff,#7900ff,#7f00ff,#8600ff,#8d00ff,#9300ff,#9a00ff,#a100ff,#a700ff,#ae00ff,#b500ff,#bc00ff,#c300ff,#ca00ff,#d100ff,#d800ff,#de00ff,#e600ff,#ed00ff,#f400ff,#fb00ff,#ff00fc,#ff00f5,#ff00ef,#ff00e9,#ff00e3,#ff00dd,#ff00d8)"></i><i style="left:109px;top:309px;width:336px;background:linear-gradient(90deg,#0024ff,#0023ff,#0021ff,#001fff,#001eff,#001cff,#001aff,#0019ff,#0017ff,#0015ff,#0014ff,#0012ff,#0310ff,#090fff,#0f0dff,#150bff,#1b0aff,#2108ff,#2706ff,#2d04ff,#3303ff,#3a01ff,#4000ff,#4600ff,#4c00ff,#5300ff,#5900ff,#5f00ff,#6600ff,#6c00ff,#7300ff,#7900ff,#8000ff,#8600ff,#8d00ff,#9300ff,#9a00ff,#a100ff,#a700ff,#ae00ff,#b500ff,#bb00ff,#c200ff,#c900ff,#d000ff,#d700ff,#de00ff,#e500ff,#ec00ff,#f300ff,#fa00ff,#ff00fd,#ff00f7,#ff00f0,#ff00ea,#ff00e4,#ff00de)"></i><i style="left:111px;top:312px;width:330px;background:linear-gradient(90deg,#0022ff,#0021ff,#001fff,#001eff,#001cff,#001aff,#0019ff,#0017ff,#0015ff,#0014ff,#0012ff,#0010ff,#040fff,#0a0dff,#100bff,#160aff,#1c08ff,#2206ff,#2805ff,#2e03ff,#3401ff,#3b00ff,#4100ff,#4700ff,#4d00ff,#5300ff,#5a00ff,#6000ff,#6600ff,#6d00ff,#7300ff,#7900ff,#8000ff,#8600ff,#8d00ff,#9300ff,#9a00ff,#a000ff,#a700ff,#ae00ff,#b400ff,#bb00ff,#c200ff,#c800ff,#cf00ff,#d600ff,#dd00ff,#e400ff,#eb00ff,#f200ff,#f800ff,#ff00ff,#ff00f8,#ff00f1,#ff00eb,#ff00e5)"></i><i style="left:113px;top:315px;width:324px;background:linear-gradient(90deg,#0021ff,#001fff,#001eff,#001cff,#001aff,#0019ff,#0017ff,#0015ff,#0014ff,#0012ff,#0011ff,#000fff,#060dff,#0c0cff,#110aff,#1708ff,#1d07ff,#2305ff,#2903ff,#2f01ff,#3500ff,#3c00ff,#4200ff,#4800ff,#4e00ff,#5400ff,#5a00ff,#6100ff,#6700ff,#6d00ff,#7300ff,#7a00ff,#8000ff,#8700ff,#8d00ff,#9300ff,#9a00ff,#a000ff,#a700ff,#ad00ff,#b400ff,#bb00ff,#c100ff,#c800ff,#cf00ff,#d500ff,#dc00ff,#e300ff,#ea00ff,#f100ff,#f700ff,#fe00ff,#ff00f9,#ff00f2,#ff00ec)"></i><i style="left:115px;top:318px;width:318px;background:linear-gradient(90deg,#001fff,#001eff,#001cff,#001aff,#0019ff,#0017ff,#0016ff,#0014ff,#0012ff,#0011ff,#000fff,#010dff,#070cff,#0d0aff,#1308ff,#1907ff,#1f05ff,#2403ff,#2a02ff,#3000ff,#3600ff,#3c00ff,#4200ff,#4900ff,#4f00ff,#5500ff,#5b00ff,#6100ff,#6700ff,#6d00ff,#7400ff,#7a00ff,#8000ff,#8700ff,#8d00ff,#9300ff,#9a00ff,#a000ff,#a700ff,#ad00ff,#b400ff,#ba00ff,#c100ff,#c700ff,#ce00ff,#d500ff,#db00ff,#e200ff,#e900ff,#f000ff,#f600ff,#fd00ff,#ff00fa,#ff00f4)"></i><i style="left:117px;top:321px;width:318px;background:linear-gradient(90deg,#001dff,#001cff,#001aff,#0019ff,#0017ff,#0016ff,#0014ff,#0012ff,#0011ff,#000fff,#000eff,#030cff,#080aff,#0e09ff,#1407ff,#1a05ff,#2004ff,#2602ff,#2b00ff,#3100ff,#3700ff,#3d00ff,#4300ff,#4900ff,#4f00ff,#5500ff,#5b00ff,#6200ff,#6800ff,#6e00ff,#7400ff,#7a00ff,#8100ff,#8700ff,#8d00ff,#9300ff,#9a00ff,#a000ff,#a600ff,#ad00ff,#b300ff,#ba00ff,#c000ff,#c700ff,#cd00ff,#d400ff,#db00ff,#e100ff,#e800ff,#ef00ff,#f500ff,#fc00ff,#ff00fb,#ff00f5)"></i><i style="left:118px;top:324px;width:312px;background:linear-gradient(90deg,#001cff,#001bff,#0019ff,#0017ff,#0016ff,#0014ff,#0013ff,#0011ff,#0010ff,#000eff,#000cff,#030bff,#0909ff,#0f07ff,#1406ff,#1a04ff,#2003ff,#2601ff,#2c00ff,#3100ff,#3700ff,#3d00ff,#4300ff,#4900ff,#4f00ff,#5500ff,#5b00ff,#6100ff,#6700ff,#6d00ff,#7300ff,#7a00ff,#8000ff,#8600ff,#8c00ff,#9200ff,#9900ff,#9f00ff,#a500ff,#ac00ff,#b200ff,#b800ff,#bf00ff,#c500ff,#cc00ff,#d200ff,#d900ff,#df00ff,#e600ff,#ec00ff,#f300ff,#fa00ff,#ff00fd)"></i><i style="left:120px;top:327px;width:306px;background:linear-gradient(90deg,#001bff,#0019ff,#0017ff,#0016ff,#0014ff,#0013ff,#0011ff,#0010ff,#000eff,#000cff,#000bff,#0509ff,#0a08ff,#1006ff,#1604ff,#1b03ff,#2101ff,#2700ff,#2d00ff,#3200ff,#3800ff,#3e00ff,#4400ff,#4a00ff,#5000ff,#5600ff,#5c00ff,#6200ff,#6800ff,#6e00ff,#7400ff,#7a00ff,#8000ff,#8600ff,#8c00ff,#9200ff,#9900ff,#9f00ff,#a500ff,#ab00ff,#b200ff,#b800ff,#be00ff,#c500ff,#cb00ff,#d200ff,#d800ff,#df00ff,#e500ff,#ec00ff,#f200ff,#f900ff)"></i><i style="left:123px;top:330px;width:300px;background:linear-gradient(90deg,#0019ff,#0017ff,#0016ff,#0014ff,#0013ff,#0011ff,#000fff,#000eff,#000cff,#000bff,#0109ff,#0708ff,#0c06ff,#1204ff,#1803ff,#1d01ff,#2300ff,#2900ff,#2f00ff,#3400ff,#3a00ff,#4000ff,#4600ff,#4b00ff,#5100ff,#5700ff,#5d00ff,#6300ff,#6900ff,#6f00ff,#7500ff,#7b00ff,#8100ff,#8700ff,#8d00ff,#9300ff,#9a00ff,#a000ff,#a600ff,#ac00ff,#b200ff,#b900ff,#bf00ff,#c500ff,#cc00ff,#d200ff,#d800ff,#df00ff,#e500ff,#ec00ff,#f200ff)"></i><i style="left:125px;top:333px;width:294px;background:linear-gradient(90deg,#0017ff,#0016ff,#0014ff,#0013ff,#0011ff,#0010ff,#000eff,#000cff,#000bff,#0009ff,#0308ff,#0806ff,#0e05ff,#1303ff,#1901ff,#1f00ff,#2400ff,#2a00ff,#2f00ff,#3500ff,#3b00ff,#4100ff,#4600ff,#4c00ff,#5200ff,#5800ff,#5e00ff,#6400ff,#6900ff,#6f00ff,#7500ff,#7b00ff,#8100ff,#8700ff,#8d00ff,#9300ff,#9900ff,#a000ff,#a600ff,#ac00ff,#b200ff,#b800ff,#bf00ff,#c500ff,#cb00ff,#d100ff,#d800ff,#de00ff,#e400ff,#eb00ff)"></i><i style="left:127px;top:336px;width:288px;background:linear-gradient(90deg,#0016ff,#0014ff,#0013ff,#0011ff,#0010ff,#000eff,#000dff,#000bff,#000aff,#0008ff,#0406ff,#0905ff,#0f03ff,#1502ff,#1a00ff,#2000ff,#2500ff,#2b00ff,#3000ff,#3600ff,#3c00ff,#4100ff,#4700ff,#4d00ff,#5300ff,#5800ff,#5e00ff,#6400ff,#6a00ff,#7000ff,#7600ff,#7c00ff,#8100ff,#8700ff,#8d00ff,#9300ff,#9900ff,#9f00ff,#a600ff,#ac00ff,#b200ff,#b800ff,#be00ff,#c400ff,#cb00ff,#d100ff,#d700ff,#dd00ff,#e400ff)"></i><i style="left:129px;top:339px;width:288px;background:linear-gradient(90deg,#0014ff,#0013ff,#0011ff,#0010ff,#000eff,#000dff,#000bff,#000aff,#0008ff,#0007ff,#0505ff,#0b03ff,#1002ff,#1600ff,#1b00ff,#2100ff,#2600ff,#2c00ff,#3100ff,#3700ff,#3d00ff,#4200ff,#4800ff,#4e00ff,#5300ff,#5900ff,#5f00ff,#6400ff,#6a00ff,#7000ff,#7600ff,#7c00ff,#8200ff,#8800ff,#8d00ff,#9300ff,#9900ff,#9f00ff,#a500ff,#ab00ff,#b100ff,#b800ff,#be00ff,#c400ff,#ca00ff,#d000ff,#d600ff,#dd00ff,#e300ff)"></i><i style="left:131px;top:342px;width:282px;background:linear-gradient(90deg,#0013ff,#0011ff,#0010ff,#000eff,#000dff,#000bff,#000aff,#0008ff,#0007ff,#0105ff,#0704ff,#0c02ff,#1101ff,#1700ff,#1c00ff,#2200ff,#2700ff,#2d00ff,#3200ff,#3800ff,#3d00ff,#4300ff,#4900ff,#4e00ff,#5400ff,#5a00ff,#5f00ff,#6500ff,#6b00ff,#7000ff,#7600ff,#7c00ff,#8200ff,#8800ff,#8e00ff,#9300ff,#9900ff,#9f00ff,#a500ff,#ab00ff,#b100ff,#b700ff,#bd00ff,#c300ff,#c900ff,#d000ff,#d600ff,#dc00ff)"></i><i style="left:133px;top:345px;width:276px;background:linear-gradient(90deg,#0011ff,#0010ff,#000eff,#000dff,#000cff,#000aff,#0009ff,#0007ff,#0005ff,#0304ff,#0802ff,#0d01ff,#1300ff,#1800ff,#1d00ff,#2300ff,#2800ff,#2e00ff,#3300ff,#3900ff,#3e00ff,#4400ff,#4900ff,#4f00ff,#5400ff,#5a00ff,#6000ff,#6500ff,#6b00ff,#7100ff,#7600ff,#7c00ff,#8200ff,#8800ff,#8e00ff,#9300ff,#9900ff,#9f00ff,#a500ff,#ab00ff,#b100ff,#b700ff,#bd00ff,#c300ff,#c900ff,#cf00ff,#d500ff)"></i><i style="left:135px;top:348px;width:270px;background:linear-gradient(90deg,#0010ff,#000fff,#000dff,#000cff,#000aff,#0009ff,#0007ff,#0006ff,#0004ff,#0403ff,#0901ff,#0e00ff,#1400ff,#1900ff,#1e00ff,#2400ff,#2900ff,#2f00ff,#3400ff,#3900ff,#3f00ff,#4400ff,#4a00ff,#4f00ff,#5500ff,#5b00ff,#6000ff,#6600ff,#6b00ff,#7100ff,#7700ff,#7c00ff,#8200ff,#8800ff,#8e00ff,#9300ff,#9900ff,#9f00ff,#a500ff,#ab00ff,#b100ff,#b700ff,#bc00ff,#c200ff,#c800ff,#ce00ff)"></i><i style="left:137px;top:351px;width:264px;background:linear-gradient(90deg,#000fff,#000dff,#000cff,#000aff,#0009ff,#0007ff,#0006ff,#0004ff,#0003ff,#0501ff,#0a00ff,#1000ff,#1500ff,#1a00ff,#2000ff,#2500ff,#2a00ff,#3000ff,#3500ff,#3a00ff,#4000ff,#4500ff,#4b00ff,#5000ff,#5600ff,#5b00ff,#6100ff,#6600ff,#6c00ff,#7100ff,#7700ff,#7d00ff,#8200ff,#8800ff,#8e00ff,#9300ff,#9900ff,#9f00ff,#a500ff,#ab00ff,#b000ff,#b600ff,#bc00ff,#c200ff,#c800ff)"></i><i style="left:139px;top:354px;width:264px;background:linear-gradient(90deg,#000dff,#000cff,#000aff,#0009ff,#0008ff,#0006ff,#0005ff,#0003ff,#0102ff,#0600ff,#0c00ff,#1100ff,#1600ff,#1b00ff,#2100ff,#2600ff,#2b00ff,#3000ff,#3600ff,#3b00ff,#4000ff,#4600ff,#4b00ff,#5100ff,#5600ff,#5c00ff,#6100ff,#6700ff,#6c00ff,#7200ff,#7700ff,#7d00ff,#8200ff,#8800ff,#8e00ff,#9300ff,#9900ff,#9f00ff,#a500ff,#aa00ff,#b000ff,#b600ff,#bc00ff,#c200ff,#c700ff)"></i><i style="left:142px;top:357px;width:258px;background:linear-gradient(90deg,#000cff,#000aff,#0009ff,#0008ff,#0006ff,#0005ff,#0003ff,#0002ff,#0300ff,#0900ff,#0e00ff,#1300ff,#1800ff,#1d00ff,#2200ff,#2800ff,#2d00ff,#3200ff,#3700ff,#3d00ff,#4200ff,#4700ff,#4d00ff,#5200ff,#5800ff,#5d00ff,#6200ff,#6800ff,#6d00ff,#7300ff,#7800ff,#7e00ff,#8400ff,#8900ff,#8f00ff,#9400ff,#9a00ff,#a000ff,#a500ff,#ab00ff,#b100ff,#b700ff,#bc00ff,#c200ff)"></i><i style="left:144px;top:360px;width:252px;background:linear-gradient(90deg,#000bff,#0009ff,#0008ff,#0006ff,#0005ff,#0003ff,#0002ff,#0000ff,#0500ff,#0a00ff,#0f00ff,#1400ff,#1900ff,#1e00ff,#2300ff,#2900ff,#2e00ff,#3300ff,#3800ff,#3e00ff,#4300ff,#4800ff,#4d00ff,#5300ff,#5800ff,#5e00ff,#6300ff,#6800ff,#6e00ff,#7300ff,#7900ff,#7e00ff,#8400ff,#8900ff,#8f00ff,#9400ff,#9a00ff,#a000ff,#a500ff,#ab00ff,#b100ff,#b600ff,#bc00ff)"></i><i style="left:146px;top:363px;width:246px;background:linear-gradient(90deg,#0009ff,#0008ff,#0006ff,#0005ff,#0004ff,#0002ff,#0001ff,#0100ff,#0600ff,#0b00ff,#1000ff,#1500ff,#1a00ff,#1f00ff,#2400ff,#2a00ff,#2f00ff,#3400ff,#3900ff,#3e00ff,#4400ff,#4900ff,#4e00ff,#5300ff,#5900ff,#5e00ff,#6300ff,#6900ff,#6e00ff,#7400ff,#7900ff,#7e00ff,#8400ff,#8900ff,#8f00ff,#9400ff,#9a00ff,#9f00ff,#a500ff,#ab00ff,#b000ff,#b600ff)"></i><i style="left:148px;top:366px;width:240px;background:linear-gradient(90deg,#0008ff,#0007ff,#0005ff,#0004ff,#0002ff,#0001ff,#0000ff,#0200ff,#0700ff,#0c00ff,#1100ff,#1600ff,#1b00ff,#2000ff,#2500ff,#2a00ff,#3000ff,#3500ff,#3a00ff,#3f00ff,#4400ff,#4900ff,#4f00ff,#5400ff,#5900ff,#5e00ff,#6400ff,#6900ff,#6e00ff,#7400ff,#7900ff,#7f00ff,#8400ff,#8900ff,#8f00ff,#9400ff,#9a00ff,#9f00ff,#a500ff,#aa00ff,#b000ff)"></i><i style="left:151px;top:369px;width:234px;background:linear-gradient(90deg,#0007ff,#0005ff,#0004ff,#0002ff,#0001ff,#0000ff,#0000ff,#0400ff,#0900ff,#0e00ff,#1300ff,#1800ff,#1d00ff,#2200ff,#2700ff,#2c00ff,#3100ff,#3600ff,#3c00ff,#4100ff,#4600ff,#4b00ff,#5000ff,#5500ff,#5b00ff,#6000ff,#6500ff,#6a00ff,#7000ff,#7500ff,#7a00ff,#8000ff,#8500ff,#8a00ff,#9000ff,#9500ff,#9b00ff,#a000ff,#a600ff,#ab00ff)"></i><i style="left:153px;top:372px;width:228px;background:linear-gradient(90deg,#0005ff,#0004ff,#0003ff,#0001ff,#0000ff,#0000ff,#0000ff,#0500ff,#0a00ff,#0f00ff,#1400ff,#1900ff,#1e00ff,#2300ff,#2800ff,#2d00ff,#3200ff,#3700ff,#3c00ff,#4100ff,#4600ff,#4c00ff,#5100ff,#5600ff,#5b00ff,#6000ff,#6500ff,#6b00ff,#7000ff,#7500ff,#7b00ff,#8000ff,#8500ff,#8b00ff,#9000ff,#9500ff,#9b00ff,#a000ff,#a600ff)"></i><i style="left:155px;top:375px;width:222px;background:linear-gradient(90deg,#0004ff,#0003ff,#0001ff,#0000ff,#0000ff,#0000ff,#0200ff,#0700ff,#0b00ff,#1000ff,#1500ff,#1a00ff,#1f00ff,#2400ff,#2900ff,#2e00ff,#3300ff,#3800ff,#3d00ff,#4200ff,#4700ff,#4c00ff,#5100ff,#5600ff,#5c00ff,#6100ff,#6600ff,#6b00ff,#7000ff,#7600ff,#7b00ff,#8000ff,#8500ff,#8b00ff,#9000ff,#9500ff,#9b00ff,#a000ff)"></i><i style="left:158px;top:378px;width:222px;background:linear-gradient(90deg,#0003ff,#0001ff,#0000ff,#0000ff,#0000ff,#0000ff,#0400ff,#0900ff,#0d00ff,#1200ff,#1700ff,#1c00ff,#2100ff,#2600ff,#2b00ff,#3000ff,#3500ff,#3a00ff,#3f00ff,#4400ff,#4900ff,#4e00ff,#5300ff,#5800ff,#5d00ff,#6200ff,#6700ff,#6c00ff,#7100ff,#7700ff,#7c00ff,#8100ff,#8600ff,#8c00ff,#9100ff,#9600ff,#9b00ff,#a100ff)"></i><i style="left:160px;top:381px;width:216px;background:linear-gradient(90deg,#0002ff,#0000ff,#0000ff,#0000ff,#0000ff,#0000ff,#0500ff,#0a00ff,#0e00ff,#1300ff,#1800ff,#1d00ff,#2200ff,#2700ff,#2c00ff,#3000ff,#3500ff,#3a00ff,#3f00ff,#4400ff,#4900ff,#4e00ff,#5300ff,#5800ff,#5d00ff,#6200ff,#6800ff,#6d00ff,#7200ff,#7700ff,#7c00ff,#8100ff,#8600ff,#8c00ff,#9100ff,#9600ff,#9b00ff)"></i><i style="left:162px;top:384px;width:210px;background:linear-gradient(90deg,#0001ff,#0000ff,#0000ff,#0000ff,#0000ff,#0100ff,#0600ff,#0b00ff,#1000ff,#1400ff,#1900ff,#1e00ff,#2300ff,#2800ff,#2c00ff,#3100ff,#3600ff,#3b00ff,#4000ff,#4500ff,#4a00ff,#4f00ff,#5400ff,#5900ff,#5e00ff,#6300ff,#6800ff,#6d00ff,#7200ff,#7700ff,#7c00ff,#8100ff,#8700ff,#8c00ff,#9100ff,#9600ff)"></i><i style="left:165px;top:387px;width:204px;background:linear-gradient(90deg,#0000ff,#0000ff,#0000ff,#0000ff,#0000ff,#0300ff,#0800ff,#0d00ff,#1100ff,#1600ff,#1b00ff,#2000ff,#2400ff,#2900ff,#2e00ff,#3300ff,#3800ff,#3d00ff,#4100ff,#4600ff,#4b00ff,#5000ff,#5500ff,#5a00ff,#5f00ff,#6400ff,#6900ff,#6e00ff,#7300ff,#7800ff,#7d00ff,#8200ff,#8700ff,#8d00ff,#9200ff)"></i><i style="left:167px;top:390px;width:198px;background:linear-gradient(90deg,#0000ff,#0000ff,#0000ff,#0000ff,#0000ff,#0400ff,#0900ff,#0e00ff,#1200ff,#1700ff,#1c00ff,#2100ff,#2500ff,#2a00ff,#2f00ff,#3400ff,#3800ff,#3d00ff,#4200ff,#4700ff,#4c00ff,#5100ff,#5600ff,#5b00ff,#6000ff,#6400ff,#6900ff,#6e00ff,#7300ff,#7800ff,#7d00ff,#8300ff,#8800ff,#8d00ff)"></i><i style="left:170px;top:393px;width:192px;background:linear-gradient(90deg,#0000ff,#0000ff,#0000ff,#0000ff,#0200ff,#0600ff,#0b00ff,#1000ff,#1400ff,#1900ff,#1e00ff,#2200ff,#2700ff,#2c00ff,#3000ff,#3500ff,#3a00ff,#3f00ff,#4400ff,#4800ff,#4d00ff,#5200ff,#5700ff,#5c00ff,#6100ff,#6600ff,#6b00ff,#7000ff,#7500ff,#7900ff,#7e00ff,#8300ff,#8900ff)"></i><i style="left:172px;top:396px;width:186px;background:linear-gradient(90deg,#0000ff,#0000ff,#0000ff,#0000ff,#0300ff,#0700ff,#0c00ff,#1100ff,#1500ff,#1a00ff,#1f00ff,#2300ff,#2800ff,#2d00ff,#3100ff,#3600ff,#3b00ff,#3f00ff,#4400ff,#4900ff,#4e00ff,#5300ff,#5700ff,#5c00ff,#6100ff,#6600ff,#6b00ff,#7000ff,#7500ff,#7a00ff,#7f00ff,#8400ff)"></i><i style="left:175px;top:399px;width:180px;background:linear-gradient(90deg,#0000ff,#0000ff,#0000ff,#0000ff,#0500ff,#0900ff,#0e00ff,#1200ff,#1700ff,#1c00ff,#2000ff,#2500ff,#2900ff,#2e00ff,#3300ff,#3700ff,#3c00ff,#4100ff,#4600ff,#4a00ff,#4f00ff,#5400ff,#5900ff,#5e00ff,#6200ff,#6700ff,#6c00ff,#7100ff,#7600ff,#7b00ff,#8000ff)"></i><i style="left:178px;top:402px;width:174px;background:linear-gradient(90deg,#0000ff,#0000ff,#0000ff,#0200ff,#0700ff,#0b00ff,#1000ff,#1400ff,#1900ff,#1d00ff,#2200ff,#2600ff,#2b00ff,#3000ff,#3400ff,#3900ff,#3e00ff,#4200ff,#4700ff,#4c00ff,#5000ff,#5500ff,#5a00ff,#5f00ff,#6400ff,#6800ff,#6d00ff,#7200ff,#7700ff,#7c00ff)"></i><i style="left:181px;top:405px;width:168px;background:linear-gradient(90deg,#0000ff,#0000ff,#0000ff,#0400ff,#0800ff,#0d00ff,#1100ff,#1600ff,#1a00ff,#1f00ff,#2300ff,#2800ff,#2d00ff,#3100ff,#3600ff,#3a00ff,#3f00ff,#4400ff,#4800ff,#4d00ff,#5200ff,#5700ff,#5b00ff,#6000ff,#6500ff,#6a00ff,#6e00ff,#7300ff,#7800ff)"></i><i style="left:183px;top:408px;width:162px;background:linear-gradient(90deg,#0000ff,#0000ff,#0100ff,#0500ff,#0900ff,#0e00ff,#1200ff,#1700ff,#1b00ff,#2000ff,#2400ff,#2900ff,#2d00ff,#3200ff,#3700ff,#3b00ff,#4000ff,#4400ff,#4900ff,#4e00ff,#5200ff,#5700ff,#5c00ff,#6000ff,#6500ff,#6a00ff,#6f00ff,#7300ff)"></i><i style="left:186px;top:411px;width:162px;background:linear-gradient(90deg,#0000ff,#0000ff,#0200ff,#0700ff,#0b00ff,#1000ff,#1400ff,#1900ff,#1d00ff,#2100ff,#2600ff,#2a00ff,#2f00ff,#3300ff,#3800ff,#3d00ff,#4100ff,#4600ff,#4a00ff,#4f00ff,#5400ff,#5800ff,#5d00ff,#6200ff,#6600ff,#6b00ff,#7000ff,#7400ff)"></i><i style="left:189px;top:414px;width:156px;background:linear-gradient(90deg,#0000ff,#0000ff,#0400ff,#0900ff,#0d00ff,#1100ff,#1600ff,#1a00ff,#1f00ff,#2300ff,#2800ff,#2c00ff,#3000ff,#3500ff,#3900ff,#3e00ff,#4300ff,#4700ff,#4c00ff,#5000ff,#5500ff,#5900ff,#5e00ff,#6300ff,#6700ff,#6c00ff,#7100ff)"></i><i style="left:192px;top:417px;width:150px;background:linear-gradient(90deg,#0000ff,#0200ff,#0600ff,#0a00ff,#0f00ff,#1300ff,#1700ff,#1c00ff,#2000ff,#2500ff,#2900ff,#2e00ff,#3200ff,#3600ff,#3b00ff,#3f00ff,#4400ff,#4800ff,#4d00ff,#5200ff,#5600ff,#5b00ff,#5f00ff,#6400ff,#6800ff,#6d00ff)"></i><i style="left:195px;top:420px;width:144px;background:linear-gradient(90deg,#0000ff,#0300ff,#0800ff,#0c00ff,#1000ff,#1500ff,#1900ff,#1d00ff,#2200ff,#2600ff,#2b00ff,#2f00ff,#3300ff,#3800ff,#3c00ff,#4100ff,#4500ff,#4a00ff,#4e00ff,#5300ff,#5700ff,#5c00ff,#6000ff,#6500ff,#6a00ff)"></i><i style="left:198px;top:423px;width:138px;background:linear-gradient(90deg,#0100ff,#0500ff,#0900ff,#0e00ff,#1200ff,#1600ff,#1b00ff,#1f00ff,#2300ff,#2800ff,#2c00ff,#3000ff,#3500ff,#3900ff,#3e00ff,#4200ff,#4700ff,#4b00ff,#5000ff,#5400ff,#5900ff,#5d00ff,#6200ff,#6600ff)"></i><i style="left:202px;top:426px;width:126px;background:linear-gradient(90deg,#0300ff,#0800ff,#0c00ff,#1000ff,#1400ff,#1900ff,#1d00ff,#2100ff,#2600ff,#2a00ff,#2e00ff,#3300ff,#3700ff,#3b00ff,#4000ff,#4400ff,#4900ff,#4d00ff,#5200ff,#5600ff,#5a00ff,#5f00ff)"></i><i style="left:205px;top:429px;width:120px;background:linear-gradient(90deg,#0500ff,#0900ff,#0e00ff,#1200ff,#1600ff,#1a00ff,#1f00ff,#2300ff,#2700ff,#2b00ff,#3000ff,#3400ff,#3800ff,#3d00ff,#4100ff,#4600ff,#4a00ff,#4e00ff,#5300ff,#5700ff,#5c00ff)"></i><i style="left:208px;top:432px;width:114px;background:linear-gradient(90deg,#0700ff,#0b00ff,#0f00ff,#1300ff,#1800ff,#1c00ff,#2000ff,#2400ff,#2900ff,#2d00ff,#3100ff,#3500ff,#3a00ff,#3e00ff,#4200ff,#4700ff,#4b00ff,#5000ff,#5400ff,#5800ff)"></i><i style="left:212px;top:435px;width:108px;background:linear-gradient(90deg,#0900ff,#0d00ff,#1200ff,#1600ff,#1a00ff,#1e00ff,#2200ff,#2700ff,#2b00ff,#2f00ff,#3300ff,#3800ff,#3c00ff,#4000ff,#4400ff,#4900ff,#4d00ff,#5200ff,#5600ff)"></i><i style="left:215px;top:438px;width:102px;background:linear-gradient(90deg,#0b00ff,#0f00ff,#1300ff,#1700ff,#1b00ff,#2000ff,#2400ff,#2800ff,#2c00ff,#3000ff,#3500ff,#3900ff,#3d00ff,#4100ff,#4600ff,#4a00ff,#4e00ff,#5300ff)"></i><i style="left:219px;top:441px;width:96px;background:linear-gradient(90deg,#0d00ff,#1100ff,#1500ff,#1a00ff,#1e00ff,#2200ff,#2600ff,#2a00ff,#2e00ff,#3300ff,#3700ff,#3b00ff,#3f00ff,#4300ff,#4800ff,#4c00ff,#5000ff)"></i><i style="left:222px;top:444px;width:90px;background:linear-gradient(90deg,#0f00ff,#1300ff,#1700ff,#1b00ff,#1f00ff,#2300ff,#2700ff,#2c00ff,#3000ff,#3400ff,#3800ff,#3c00ff,#4100ff,#4500ff,#4900ff,#4d00ff)"></i><i style="left:226px;top:447px;width:84px;background:linear-gradient(90deg,#1100ff,#1500ff,#1900ff,#1d00ff,#2100ff,#2500ff,#2a00ff,#2e00ff,#3200ff,#3600ff,#3a00ff,#3e00ff,#4300ff,#4700ff,#4b00ff)"></i><i style="left:230px;top:450px;width:78px;background:linear-gradient(90deg,#1300ff,#1700ff,#1b00ff,#1f00ff,#2400ff,#2800ff,#2c00ff,#3000ff,#3400ff,#3800ff,#3c00ff,#4000ff,#4400ff,#4900ff)"></i><i style="left:233px;top:453px;width:72px;background:linear-gradient(90deg,#1500ff,#1900ff,#1d00ff,#2100ff,#2500ff,#2900ff,#2d00ff,#3100ff,#3500ff,#3900ff,#3d00ff,#4200ff,#4600ff)"></i><i style="left:237px;top:456px;width:66px;background:linear-gradient(90deg,#1700ff,#1b00ff,#1f00ff,#2300ff,#2700ff,#2b00ff,#2f00ff,#3300ff,#3700ff,#3b00ff,#3f00ff,#4400ff)"></i><i style="left:240px;top:459px;width:60px;background:linear-gradient(90deg,#1900ff,#1d00ff,#2000ff,#2400ff,#2800ff,#2c00ff,#3000ff,#3500ff,#3900ff,#3d00ff,#4100ff)"></i><i style="left:244px;top:462px;width:54px;background:linear-gradient(90deg,#1b00ff,#1f00ff,#2300ff,#2700ff,#2b00ff,#2e00ff,#3200ff,#3600ff,#3b00ff,#3f00ff)"></i><i style="left:248px;top:465px;width:42px;background:linear-gradient(90deg,#1d00ff,#2100ff,#2500ff,#2900ff,#2d00ff,#3000ff,#3400ff,#3800ff)"></i><i style="left:251px;top:468px;width:36px;background:linear-gradient(90deg,#1e00ff,#2200ff,#2600ff,#2a00ff,#2e00ff,#3200ff,#3600ff)"></i><i style="left:255px;top:471px;width:30px;background:linear-gradient(90deg,#2000ff,#2400ff,#2800ff,#2c00ff,#3000ff,#3400ff)"></i><i style="left:258px;top:474px;width:24px;background:linear-gradient(90deg,#2200ff,#2600ff,#2900ff,#2d00ff,#3100ff)"></i><i style="left:262px;top:477px;width:18px;background:linear-gradient(90deg,#2400ff,#2800ff,#2b00ff,#2f00ff)"></i><i style="left:267px;top:480px;width:12px;background:linear-gradient(90deg,#2600ff,#2a00ff,#2e00ff)"></i></div></div></div><svg width="1667" height="1005"><defs><clipPath id="pc"><rect x="1017.0" y="118.8" width="639.4" height="491.6"/></clipPath></defs><g clip-path="url(#pc)"><path d="M1290.3 597.8 L1290.2 597.7 L1290.1 597.8 L1289.9 597.9 L1289.6 597.9 L1289.4 597.9 L1289.2 598.1 L1289.1 598.3 L1288.7 598.3 L1288.3 598.3 L1287.8 598.2 L1287.3 598.2 L1286.7 598.1 L1285.8 597.7 L1284.4 596.8 L1282.6 595.6 L1280.5 594.0 L1277.9 592.0 L1274.7 589.5 L1271.0 586.3 L1266.8 582.7 L1261.9 578.6 L1256.1 573.8 L1249.4 568.2 L1241.8 561.9 L1233.3 554.8 L1223.7 546.3 L1213.0 536.3 L1201.2 524.3 L1187.1 508.3 L1170.3 487.4 L1152.0 462.5 L1132.3 433.4 L1111.9 400.5 L1091.6 365.7 L1072.5 330.1 L1056.2 295.4 L1042.8 263.1 L1032.4 234.4 L1025.1 210.2 L1020.7 190.3 L1018.6 174.4 L1018.8 161.7 L1020.8 151.5 L1024.7 143.7 L1030.1 137.9 L1036.7 134.1 L1044.2 131.8 L1052.4 130.6 L1061.2 130.1 L1070.3 129.9 L1079.3 129.9 L1088.5 130.2 L1098.0 130.6 L1108.0 131.2 L1118.4 132.0 L1129.3 133.0 L1140.8 134.1 L1153.1 135.3 L1166.1 136.7 L1179.9 138.2 L1194.6 139.8 L1210.2 141.6 L1226.8 143.5 L1244.4 145.5 L1262.9 147.6 L1282.5 149.9 L1303.1 152.3 L1324.5 154.7 L1346.8 157.3 L1369.7 159.9 L1393.1 162.6 L1416.3 165.3 L1438.9 167.9 L1461.2 170.5 L1483.0 173.0 L1503.3 175.3 L1522.3 177.5 L1540.0 179.5 L1556.0 181.4 L1570.5 183.1 L1583.5 184.6 L1595.2 185.9 L1605.8 187.1 L1615.5 188.2 L1624.4 189.3 L1632.4 190.2 L1639.6 191.0 L1646.0 191.8 L1651.4 192.4 L1655.9 192.9 L1659.9 193.4 L1663.2 193.8 L1666.1 194.1 L1668.3 194.3 L1670.0 194.5 L1671.6 194.7 L1673.0 194.9 L1674.2 195.0 L1675.4 195.2 L1676.6 195.3 L1677.7 195.4 L1678.7 195.5 L1679.3 195.6 L1679.7 195.7 L1680.0 195.7 L1680.2 195.7Z M1496.5 182.3 L1150.0 149.8 L1203.7 481.7Z" fill="#000" fill-opacity=".38" fill-rule="evenodd"/></g><rect x="1017.0" y="118.8" width="639.4" height="491.6" fill="none" stroke="#b4b4b4" stroke-width="1.9"/><path d="M1017.0 610.4 v6.5" stroke="#c8c8c8" stroke-width="1.3"/><path d="M1017.0 610.4 h-5.5" stroke="#c8c8c8" stroke-width="1.3"/><path d="M1070.2 610.4 v6.5" stroke="#c8c8c8" stroke-width="1.3"/><path d="M1017.0 570.3 h-5.5" stroke="#c8c8c8" stroke-width="1.3"/><path d="M1123.4 610.4 v6.5" stroke="#c8c8c8" stroke-width="1.3"/><path d="M1017.0 529.2 h-5.5" stroke="#c8c8c8" stroke-width="1.3"/><path d="M1176.6 610.4 v6.5" stroke="#c8c8c8" stroke-width="1.3"/><path d="M1017.0 488.2 h-5.5" stroke="#c8c8c8" stroke-width="1.3"/><path d="M1229.8 610.4 v6.5" stroke="#c8c8c8" stroke-width="1.3"/><path d="M1017.0 447.2 h-5.5" stroke="#c8c8c8" stroke-width="1.3"/><path d="M1283.0 610.4 v6.5" stroke="#c8c8c8" stroke-width="1.3"/><path d="M1017.0 406.2 h-5.5" stroke="#c8c8c8" stroke-width="1.3"/><path d="M1336.2 610.4 v6.5" stroke="#c8c8c8" stroke-width="1.3"/><path d="M1017.0 365.1 h-5.5" stroke="#c8c8c8" stroke-width="1.3"/><path d="M1389.4 610.4 v6.5" stroke="#c8c8c8" stroke-width="1.3"/><path d="M1017.0 324.1 h-5.5" stroke="#c8c8c8" stroke-width="1.3"/><path d="M1442.6 610.4 v6.5" stroke="#c8c8c8" stroke-width="1.3"/><path d="M1017.0 283.1 h-5.5" stroke="#c8c8c8" stroke-width="1.3"/><path d="M1495.8 610.4 v6.5" stroke="#c8c8c8" stroke-width="1.3"/><path d="M1017.0 242.1 h-5.5" stroke="#c8c8c8" stroke-width="1.3"/><path d="M1549.0 610.4 v6.5" stroke="#c8c8c8" stroke-width="1.3"/><path d="M1017.0 201.0 h-5.5" stroke="#c8c8c8" stroke-width="1.3"/><path d="M1602.2 610.4 v6.5" stroke="#c8c8c8" stroke-width="1.3"/><path d="M1017.0 160.0 h-5.5" stroke="#c8c8c8" stroke-width="1.3"/><rect x="1142.9" y="141.6" width="13.4" height="13.4" fill="none" stroke="#fff" stroke-opacity=".9" stroke-width="1.5"/><rect x="1166.7" y="165.6" width="13.4" height="13.4" fill="none" stroke="#fff" stroke-opacity=".9" stroke-width="1.5"/><rect x="1206.8" y="157.7" width="13.4" height="13.4" fill="none" stroke="#fff" stroke-opacity=".9" stroke-width="1.5"/><rect x="1226.7" y="149.7" width="13.4" height="13.4" fill="none" stroke="#fff" stroke-opacity=".9" stroke-width="1.5"/><rect x="1253.8" y="153.6" width="13.4" height="13.4" fill="none" stroke="#fff" stroke-opacity=".9" stroke-width="1.5"/><rect x="1285.6" y="160.8" width="13.4" height="13.4" fill="none" stroke="#fff" stroke-opacity=".9" stroke-width="1.5"/><rect x="1328.8" y="164.9" width="13.4" height="13.4" fill="none" stroke="#fff" stroke-opacity=".9" stroke-width="1.5"/><rect x="1203.8" y="179.6" width="13.4" height="13.4" fill="none" stroke="#fff" stroke-opacity=".9" stroke-width="1.5"/><rect x="1268.8" y="193.6" width="13.4" height="13.4" fill="none" stroke="#fff" stroke-opacity=".9" stroke-width="1.5"/><rect x="1257.7" y="200.0" width="13.4" height="13.4" fill="none" stroke="#fff" stroke-opacity=".9" stroke-width="1.5"/><rect x="1347.8" y="206.8" width="13.4" height="13.4" fill="none" stroke="#fff" stroke-opacity=".9" stroke-width="1.5"/><rect x="1173.9" y="210.8" width="13.4" height="13.4" fill="none" stroke="#fff" stroke-opacity=".9" stroke-width="1.5"/><rect x="1157.7" y="229.7" width="13.4" height="13.4" fill="none" stroke="#fff" stroke-opacity=".9" stroke-width="1.5"/><rect x="1315.2" y="252.9" width="13.4" height="13.4" fill="none" stroke="#fff" stroke-opacity=".9" stroke-width="1.5"/><rect x="1162.7" y="261.6" width="13.4" height="13.4" fill="none" stroke="#fff" stroke-opacity=".9" stroke-width="1.5"/><rect x="1196.6" y="258.8" width="13.4" height="13.4" fill="none" stroke="#fff" stroke-opacity=".9" stroke-width="1.5"/><rect x="1217.2" y="263.8" width="13.4" height="13.4" fill="none" stroke="#fff" stroke-opacity=".9" stroke-width="1.5"/><rect x="1252.9" y="281.7" width="13.4" height="13.4" fill="none" stroke="#fff" stroke-opacity=".9" stroke-width="1.5"/><rect x="1409.3" y="194.3" width="13.4" height="13.4" fill="none" stroke="#fff" stroke-opacity=".9" stroke-width="1.5"/><rect x="1489.3" y="174.3" width="13.4" height="13.4" fill="none" stroke="#fff" stroke-opacity=".9" stroke-width="1.5"/><rect x="1199.7" y="311.7" width="13.4" height="13.4" fill="none" stroke="#fff" stroke-opacity=".9" stroke-width="1.5"/><rect x="1199.7" y="361.9" width="13.4" height="13.4" fill="none" stroke="#fff" stroke-opacity=".9" stroke-width="1.5"/><rect x="1334.8" y="331.8" width="13.4" height="13.4" fill="none" stroke="#fff" stroke-opacity=".9" stroke-width="1.5"/><rect x="1196.8" y="473.7" width="13.4" height="13.4" fill="none" stroke="#fff" stroke-opacity=".9" stroke-width="1.5"/><rect x="1220.3" y="219.0" width="12.6" height="12.6" fill="#fff" fill-opacity=".25" stroke="#000" stroke-width="2"/><ellipse cx="1161.7" cy="142.9" rx="4.4" ry="4.2" fill="#00ff00" stroke="#000" stroke-width="1.1"/><ellipse cx="1221.4" cy="148.3" rx="4.4" ry="4.2" fill="#ffe800" stroke="#000" stroke-width="1.1"/><ellipse cx="1240.2" cy="152.4" rx="4.4" ry="4.2" fill="#e0a030" stroke="#000" stroke-width="1.1"/><ellipse cx="1204.9" cy="157.8" rx="4.4" ry="4.2" fill="#8fa040" stroke="#000" stroke-width="1.1"/><ellipse cx="1263.3" cy="158.9" rx="4.4" ry="4.2" fill="#d09040" stroke="#000" stroke-width="1.1"/><ellipse cx="1295.9" cy="163.4" rx="4.4" ry="4.2" fill="#d08030" stroke="#000" stroke-width="1.1"/><ellipse cx="1175.0" cy="167.3" rx="4.4" ry="4.2" fill="#407040" stroke="#000" stroke-width="1.1"/><ellipse cx="1201.0" cy="182.5" rx="4.4" ry="4.2" fill="#646a4e" stroke="#000" stroke-width="1.1"/><ellipse cx="1364.0" cy="197.4" rx="4.4" ry="4.2" fill="#b03040" stroke="#000" stroke-width="1.1"/><ellipse cx="1257.9" cy="201.3" rx="4.4" ry="4.2" fill="#685040" stroke="#000" stroke-width="1.1"/><ellipse cx="1240.4" cy="212.4" rx="4.4" ry="4.2" fill="#b09080" stroke="#000" stroke-width="1.1"/><ellipse cx="1312.6" cy="220.3" rx="4.4" ry="4.2" fill="#c05060" stroke="#000" stroke-width="1.1"/><ellipse cx="1183.0" cy="228.2" rx="4.4" ry="4.2" fill="#60b0a0" stroke="#000" stroke-width="1.1"/><ellipse cx="1214.4" cy="235.4" rx="4.4" ry="4.2" fill="#a39a92" stroke="#000" stroke-width="1.1"/><ellipse cx="1173.4" cy="247.6" rx="4.4" ry="4.2" fill="#00ffff" stroke="#000" stroke-width="1.1"/><ellipse cx="1216.0" cy="270.8" rx="4.4" ry="4.2" fill="#000000" stroke="#000" stroke-width="1.1"/><ellipse cx="1177.5" cy="281.8" rx="4.4" ry="4.2" fill="#2090a0" stroke="#000" stroke-width="1.1"/><ellipse cx="1196.9" cy="280.2" rx="4.4" ry="4.2" fill="#6080a0" stroke="#000" stroke-width="1.1"/><ellipse cx="1211.9" cy="284.3" rx="4.4" ry="4.2" fill="#8080b0" stroke="#000" stroke-width="1.1"/><ellipse cx="1280.9" cy="280.3" rx="4.4" ry="4.2" fill="#b05090" stroke="#000" stroke-width="1.1"/><ellipse cx="1428.0" cy="170.0" rx="4.4" ry="4.2" fill="#ff0000" stroke="#000" stroke-width="1.1"/><ellipse cx="1233.6" cy="316.1" rx="4.4" ry="4.2" fill="#5a4870" stroke="#000" stroke-width="1.1"/><ellipse cx="1198.1" cy="341.4" rx="4.4" ry="4.2" fill="#6068a8" stroke="#000" stroke-width="1.1"/><ellipse cx="1282.5" cy="354.0" rx="4.4" ry="4.2" fill="#ff10d0" stroke="#000" stroke-width="1.1"/><ellipse cx="1201.0" cy="389.5" rx="4.4" ry="4.2" fill="#454890" stroke="#000" stroke-width="1.1"/><ellipse cx="1198.1" cy="458.5" rx="4.4" ry="4.2" fill="#0000ff" stroke="#000" stroke-width="1.1"/></svg><span class="t" style="left:1277.00px;top:101px;font-size:13.14px;line-height:15px;color:#d4d4d4;transform:scaleX(1.0990);">CIE 1976 u'v'</span><span class="t" style="left:1013.02px;top:620px;font-size:13.29px;line-height:15px;color:#d4d4d4;transform:scaleX(1.0800);">0</span><span class="t" style="left:999.54px;top:605px;font-size:13.29px;line-height:15px;color:#d4d4d4;transform:scaleX(1.0800);">0</span><span class="t" style="left:1056.25px;top:620px;font-size:13.29px;line-height:15px;color:#d4d4d4;transform:scaleX(1.0800);">0,05</span><span class="t" style="left:979.59px;top:564px;font-size:13.29px;line-height:15px;color:#d4d4d4;transform:scaleX(1.0800);">0,05</span><span class="t" style="left:1113.43px;top:620px;font-size:13.29px;line-height:15px;color:#d4d4d4;transform:scaleX(1.0800);">0,1</span><span class="t" style="left:987.56px;top:523px;font-size:13.29px;line-height:15px;color:#d4d4d4;transform:scaleX(1.0800);">0,1</span><span class="t" style="left:1162.65px;top:620px;font-size:13.29px;line-height:15px;color:#d4d4d4;transform:scaleX(1.0800);">0,15</span><span class="t" style="left:979.59px;top:482px;font-size:13.29px;line-height:15px;color:#d4d4d4;transform:scaleX(1.0800);">0,15</span><span class="t" style="left:1219.83px;top:620px;font-size:13.29px;line-height:15px;color:#d4d4d4;transform:scaleX(1.0800);">0,2</span><span class="t" style="left:987.56px;top:441px;font-size:13.29px;line-height:15px;color:#d4d4d4;transform:scaleX(1.0800);">0,2</span><span class="t" style="left:1269.05px;top:620px;font-size:13.29px;line-height:15px;color:#d4d4d4;transform:scaleX(1.0800);">0,25</span><span class="t" style="left:979.59px;top:400px;font-size:13.29px;line-height:15px;color:#d4d4d4;transform:scaleX(1.0800);">0,25</span><span class="t" style="left:1326.23px;top:620px;font-size:13.29px;line-height:15px;color:#d4d4d4;transform:scaleX(1.0800);">0,3</span><span class="t" style="left:987.56px;top:359px;font-size:13.29px;line-height:15px;color:#d4d4d4;transform:scaleX(1.0800);">0,3</span><span class="t" style="left:1375.45px;top:620px;font-size:13.29px;line-height:15px;color:#d4d4d4;transform:scaleX(1.0800);">0,35</span><span class="t" style="left:979.59px;top:318px;font-size:13.29px;line-height:15px;color:#d4d4d4;transform:scaleX(1.0800);">0,35</span><span class="t" style="left:1432.63px;top:620px;font-size:13.29px;line-height:15px;color:#d4d4d4;transform:scaleX(1.0800);">0,4</span><span class="t" style="left:987.56px;top:277px;font-size:13.29px;line-height:15px;color:#d4d4d4;transform:scaleX(1.0800);">0,4</span><span class="t" style="left:1481.85px;top:620px;font-size:13.29px;line-height:15px;color:#d4d4d4;transform:scaleX(1.0800);">0,45</span><span class="t" style="left:979.59px;top:236px;font-size:13.29px;line-height:15px;color:#d4d4d4;transform:scaleX(1.0800);">0,45</span><span class="t" style="left:1539.03px;top:620px;font-size:13.29px;line-height:15px;color:#d4d4d4;transform:scaleX(1.0800);">0,5</span><span class="t" style="left:987.56px;top:195px;font-size:13.29px;line-height:15px;color:#d4d4d4;transform:scaleX(1.0800);">0,5</span><span class="t" style="left:1588.25px;top:620px;font-size:13.29px;line-height:15px;color:#d4d4d4;transform:scaleX(1.0800);">0,55</span><span class="t" style="left:979.59px;top:154px;font-size:13.29px;line-height:15px;color:#d4d4d4;transform:scaleX(1.0800);">0,55</span><div class="a" style="left:1449.00px;top:435.00px;width:203.80px;height:137.00px;background:#2a2a2a;"></div><div class="a" style="left:1452.00px;top:438.00px;width:198.00px;height:131.00px;background:linear-gradient(128.6deg,#78f000 0%,#a8f800 22%,#dcff08 40%,#ffff20 50.5%,#ffd808 62%,#ffb800 80%,#ff9800 100%);outline:1.3px solid #9a9a9a;overflow:hidden;"></div><svg width="1667" height="1005"><defs><clipPath id="ic"><rect x="1452" y="438" width="198" height="131"/></clipPath></defs><g clip-path="url(#ic)"><path d="M1450 451.2 L1652 555.5 V430 H1450Z" fill="#000" fill-opacity=".38"/><path d="M1634.5 437 L1651 447.6 V437Z" fill="#262626"/></g><rect x="1543.7" y="495.6" width="13.6" height="13.6" fill="none" stroke="#fff" stroke-opacity=".92" stroke-width="1.5"/><rect x="1611.6" y="546.7" width="13.6" height="13.6" fill="none" stroke="#fff" stroke-opacity=".92" stroke-width="1.5"/><ellipse cx="1542.1" cy="445.6" rx="4.4" ry="4.2" fill="#fff020" stroke="#000" stroke-width="1.1"/><ellipse cx="1590.0" cy="490.6" rx="4.4" ry="4.2" fill="#e8c030" stroke="#000" stroke-width="1.1"/><ellipse cx="1635.9" cy="546.4" rx="4.4" ry="4.2" fill="#e0a030" stroke="#000" stroke-width="1.1"/></svg><div class="a" style="left:1401.80px;top:578.30px;width:251.80px;height:28.40px;background:#303030;"></div><span class="t" style="left:1402.50px;top:584px;font-size:17.43px;line-height:20px;color:#f4f4f4;transform:scaleX(1.1278);">RGB Triplet: 255, 255, 0</span>
<div class="a" style="left:1660.00px;top:0.00px;width:7.00px;height:1005.00px;background:linear-gradient(90deg,rgba(0,0,0,0),rgba(0,0,0,.12) 40%,rgba(0,0,0,.35) 64%,rgba(0,0,0,.9) 80%,#000);"></div></body></html>
